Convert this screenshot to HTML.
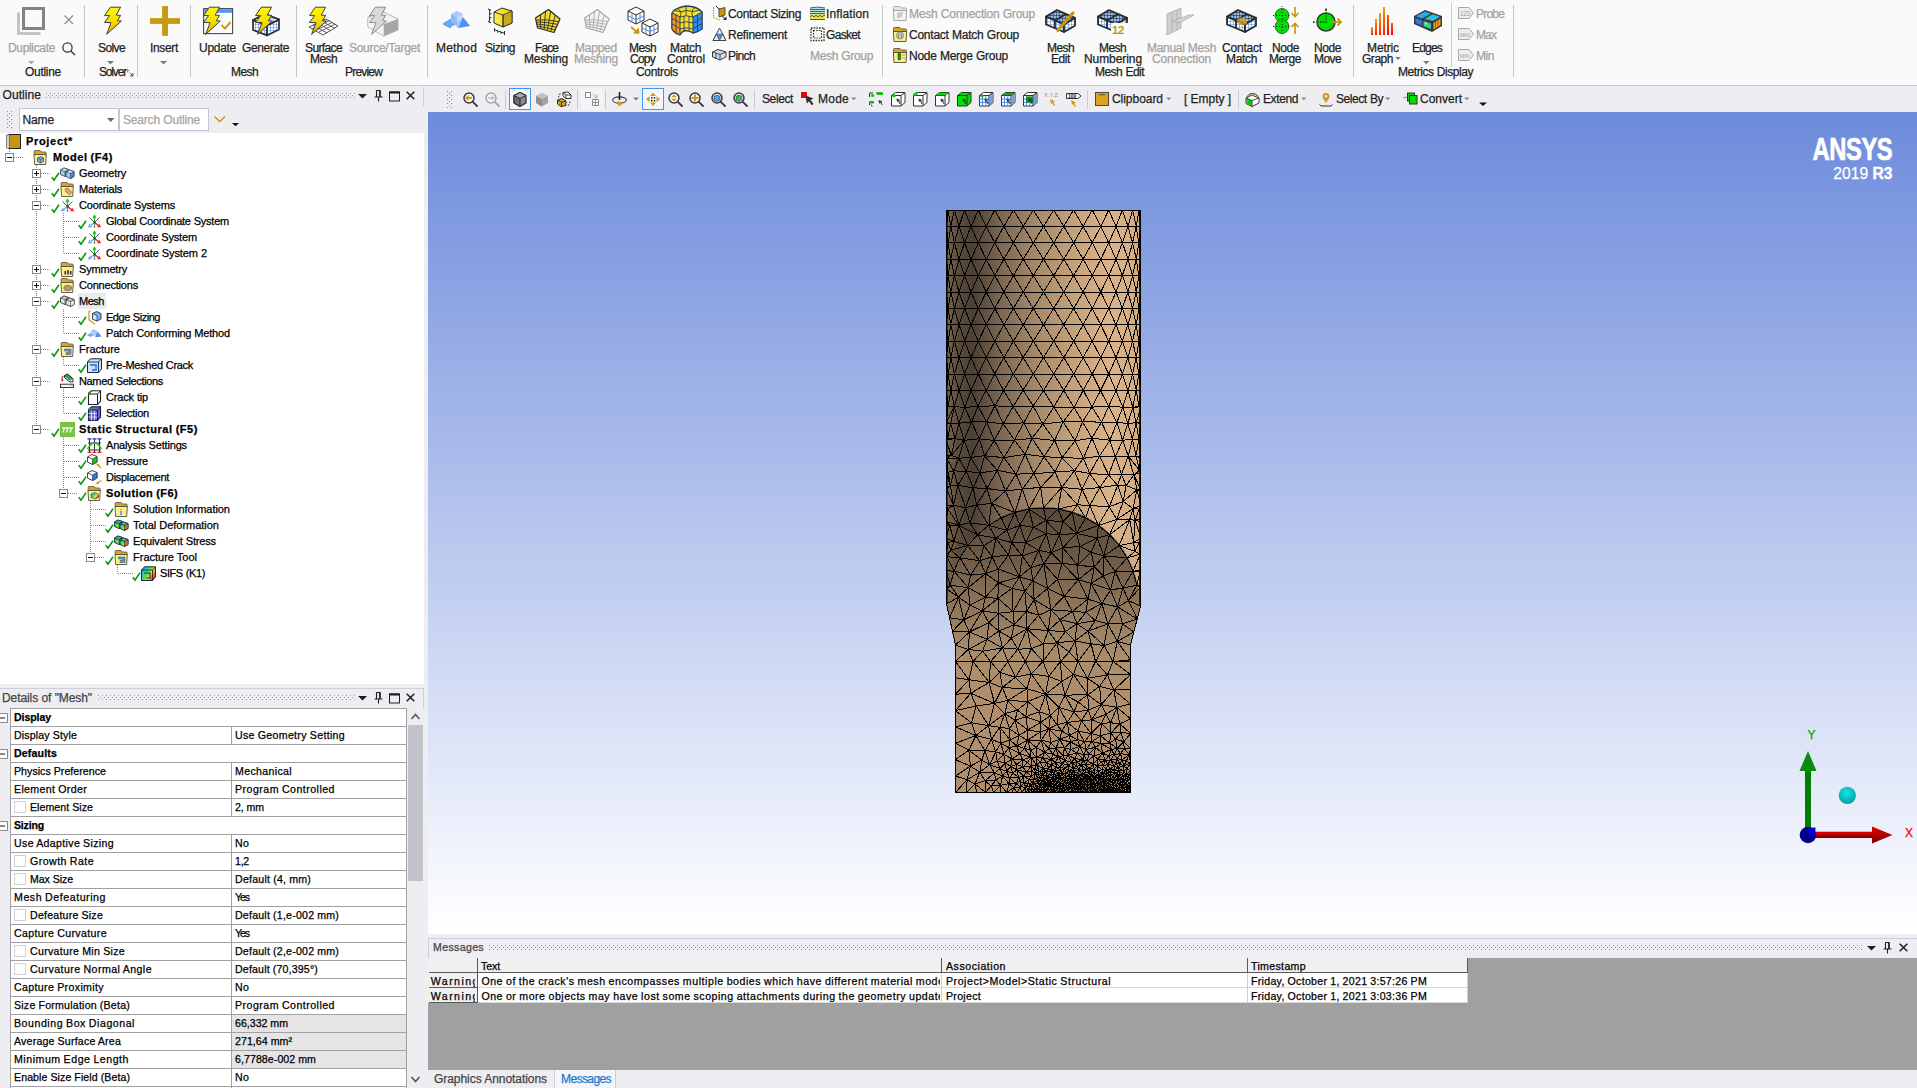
<!DOCTYPE html>
<html><head><meta charset="utf-8"><title>Mechanical</title><style>
html,body{margin:0;padding:0;}
body{width:1917px;height:1088px;overflow:hidden;position:relative;background:#eeeef2;font-family:"Liberation Sans",sans-serif;font-size:12px;color:#1e1e1e;}
.t{position:absolute;white-space:nowrap;line-height:1;-webkit-text-stroke:0.25px currentColor;}
.g{color:#a2a2a2;}
svg{overflow:visible;}
</style></head><body>
<!-- sec_ribbon -->
<div style="position:absolute;left:0;top:0;width:1917px;height:84px;background:#fafafa;"></div><div style="position:absolute;left:0;top:84px;width:1917px;height:1px;background:#ffffff;"></div>
<div style="position:absolute;left:0;top:85px;width:1917px;height:1px;background:#c8c8c9;"></div>
<div style="position:absolute;left:0;top:86px;width:1917px;height:1px;background:#eeeef2;"></div>
<svg style="position:absolute;left:0;top:0" width="1917" height="86" viewBox="0 0 1917 86"><defs>
<linearGradient id="boltg" x1="0" x2="0" y1="0" y2="1"><stop offset="0" stop-color="#fff500"/><stop offset="0.45" stop-color="#f7e300"/><stop offset="1" stop-color="#e3b000"/></linearGradient>
<linearGradient id="yelg" x1="0" x2="1" y1="0" y2="0"><stop offset="0" stop-color="#fff04a"/><stop offset="1" stop-color="#e6c81e"/></linearGradient>
<linearGradient id="barg" x1="0" x2="0" y1="0" y2="1"><stop offset="0" stop-color="#f6a000"/><stop offset="1" stop-color="#ff2000"/></linearGradient>
<linearGradient id="barr" x1="0" x2="0" y1="0" y2="1"><stop offset="0" stop-color="#ff5a00"/><stop offset="1" stop-color="#ff0000"/></linearGradient>
<pattern id="gridb" width="3" height="3" patternUnits="userSpaceOnUse"><rect width="3" height="3" fill="#fff"/><path d="M0 0H3M0 0V3" stroke="#4a90f0" stroke-width="1.2"/></pattern>
<pattern id="gridd" width="3" height="3" patternUnits="userSpaceOnUse"><rect width="3" height="3" fill="#8fbcf5"/><path d="M0 0H3M0 0V3" stroke="#3a4350" stroke-width="1.3"/></pattern>
<pattern id="gridb4" width="4" height="4" patternUnits="userSpaceOnUse"><rect width="4" height="4" fill="#fff"/><path d="M0 0.5H4M0.5 0V4" stroke="#5a9af5" stroke-width="1"/></pattern>
<pattern id="dots" width="4" height="4" patternUnits="userSpaceOnUse"><rect x="0" y="0" width="1" height="1" fill="#9a9aa2"/><rect x="2" y="2" width="1" height="1" fill="#9a9aa2"/></pattern>
</defs><rect x="84" y="5" width="1" height="72" fill="#c6c6c6"/><rect x="137" y="5" width="1" height="72" fill="#c6c6c6"/><rect x="190" y="5" width="1" height="72" fill="#c6c6c6"/><rect x="296" y="5" width="1" height="72" fill="#c6c6c6"/><rect x="427" y="5" width="1" height="72" fill="#c6c6c6"/><rect x="882" y="5" width="1" height="72" fill="#c6c6c6"/><rect x="1353" y="5" width="1" height="72" fill="#c6c6c6"/><rect x="1513" y="5" width="1" height="72" fill="#c6c6c6"/><rect x="1451" y="3" width="1" height="64" fill="#c8cce0"/><path d="M18.5 12.5V33.5H40.5" fill="none" stroke="#c4c4c4" stroke-width="3"/><rect x="23.5" y="8.5" width="20" height="20" fill="none" stroke="#838383" stroke-width="3"/><path d="M64.5 15.5L73 24M73 15.5L64.5 24" stroke="#8c8c8c" stroke-width="1.1" fill="none"/><circle cx="67.5" cy="47.5" r="4.6" fill="none" stroke="#3a3a3a" stroke-width="1.3"/><path d="M70.8 51L75 55" stroke="#3a3a3a" stroke-width="1.5"/><polygon points="28,61 34.5,61 31.25,64.2" fill="#a8a8a8"/><polygon points="110.3,7.2 120.6,7.2 116.2,15.1 120.6,15.4 117.4,20.8 121.4,21.0 106.6,34.4 111.0,22.7 104.5,22.4 109.6,15.6 104.5,15.6" fill="url(#boltg)" stroke="#3c3c4c" stroke-width="1" stroke-linejoin="miter"/><polygon points="107,61 114,61 110.5,64.4" fill="#7a7a7a"/><path d="M127.5 70.5H129.5M127.5 70.5V72.5M133 73V76H130" stroke="#8a8a8a" stroke-width="1" fill="none"/><path d="M129.5 72.5L132.5 75.5M132.8 73.2V75.8H130.2" stroke="#6a6a6a" stroke-width="1" fill="none"/><rect x="162.1" y="6.1" width="5.9" height="29.8" fill="#c99a10"/><rect x="150" y="18.1" width="30" height="5.8" fill="#c99a10"/><polygon points="160,61 167,61 163.5,64.4" fill="#7a7a7a"/><rect x="203.6" y="8.6" width="29" height="25" fill="#fdfdfd" stroke="#4a4a4a" stroke-width="1.1"/><rect x="204.2" y="9.2" width="27.8" height="3.6" fill="#4d94f7"/><path d="M221.5 25L225 28.5L230.5 22" fill="none" stroke="#d19a12" stroke-width="2"/><polygon points="209.3,7.2 219.6,7.2 215.2,15.1 219.6,15.4 216.4,20.8 220.4,21.0 205.6,34.4 210.0,22.7 203.5,22.4 208.6,15.6 203.5,15.6" fill="url(#boltg)" stroke="#3c3c4c" stroke-width="1" stroke-linejoin="miter"/><polygon points="253,20.0 267,25.4 267,35.4 253,30.0" fill="url(#gridb)" stroke="#2d2d2d" stroke-width="1.7" stroke-linejoin="round"/><polygon points="267,25.4 279,19.4 279,29.4 267,35.4" fill="url(#gridb)" stroke="#2d2d2d" stroke-width="1.7" stroke-linejoin="round"/><polygon points="253,20.0 265,14.0 279,19.4 267,25.4" fill="url(#gridb)" stroke="#2d2d2d" stroke-width="1.7" stroke-linejoin="round"/><polygon points="261.3,7.2 271.6,7.2 267.2,15.1 271.6,15.4 268.4,20.8 272.4,21.0 257.6,34.4 262.0,22.7 255.5,22.4 260.6,15.6 255.5,15.6" fill="url(#boltg)" stroke="#3c3c4c" stroke-width="1" stroke-linejoin="miter"/><g stroke="#3c3c3c" stroke-width="0.9" fill="#fff"><polygon points="309,27 326,19 338,26 323,35"/></g><path d="M312.4 28.6L329.4 20.6M315.8 30.2L332.4 22.4M319.2 31.8L335.2 24.2M313.2 25L327 33M317.5 23L330.7 30.8M321.8 21L334.5 28.4" stroke="#3c3c3c" stroke-width="0.8" fill="none"/><polygon points="315.3,7.2 325.6,7.2 321.2,15.1 325.6,15.4 322.4,20.8 326.4,21.0 311.6,34.4 316.0,22.7 309.5,22.4 314.6,15.6 309.5,15.6" fill="url(#boltg)" stroke="#3c3c4c" stroke-width="1" stroke-linejoin="miter"/><polygon points="368,17 384,12 398,19 398,30 384,36 368,27" fill="#f2f2f2" stroke="#a4a4a4" stroke-width="0.8"/><polygon points="384,24 398,19 398,30 384,36" fill="#a6a6a6"/><polygon points="368,17 384,24 384,36 368,27" fill="#f4f4f4" stroke="#b0b0b0" stroke-width="0.6"/><polygon points="375.3,7.2 385.6,7.2 381.2,15.1 385.6,15.4 382.4,20.8 386.4,21.0 371.6,34.4 376.0,22.7 369.5,22.4 374.6,15.6 369.5,15.6" fill="#d9d9d9" stroke="#8c8c8c" stroke-width="1" stroke-linejoin="miter"/><polygon points="443,23 452,18 460,22 451,27" fill="#6aa6f8"/><polygon points="443,23 451,27 451,28.5 443,24.5" fill="#4d8ef0"/><polygon points="451,14 457,11 463,14 463,22 457,25 451,22" fill="#a9ccfb"/><polygon points="451,14 457,17 457,25 451,22" fill="#8fbcf9"/><polygon points="457,17 463,14 463,22 457,25" fill="#c4dcfc"/><polygon points="463,17 470,26 458,28" fill="#4d8ff2"/><polygon points="463,17 458,28 455,25" fill="#9cc4fa"/><polygon points="494,12 502,8 512,11 512,23 503,27 494,23" fill="url(#yelg)" stroke="#2a2a2a" stroke-width="1"/><polygon points="503,15 512,11 512,23 503,27" fill="#c9a81e" stroke="#2a2a2a" stroke-width="0.8"/><path d="M494 12L503 15V27" stroke="#2a2a2a" stroke-width="0.9" fill="none"/><path d="M488 9L491 10.2M488 21.5L491 22.8M489.6 9.8V22M489.6 13.8H491.5M489.6 17.8H491.5" stroke="#2a2a2a" stroke-width="1" fill="none"/><path d="M494.5 28V31.5M504.5 31V35M494.5 29.8L504.5 33.2M497.7 30.9V32.8M500.9 32V34" stroke="#2a2a2a" stroke-width="1" fill="none"/><polygon points="535.5,18 548.5,9.5 560,19 554,32.5 537.5,28" fill="#f5de28" stroke="#2a2a2a" stroke-width="1.2" stroke-linejoin="round"/><path d="M535.9 20.0Q547.8 19.0 558.8 21.7M540.6 14.7Q540.0 21.8 540.8 28.9M536.3 22.0Q547.5 21.9 557.6 24.4M545.7 11.3Q544.5 20.6 544.1 29.8M536.7 24.0Q547.0 24.9 556.4 27.1M550.6 11.2Q548.9 21.0 547.4 30.7M537.1 26.0Q546.7 27.8 555.2 29.8M555.3 15.1Q553.2 23.4 550.7 31.6" stroke="#2a2a2a" stroke-width="0.9" fill="none"/><polygon points="584.5,18 597.5,9.5 609,19 603,32.5 586.5,28" fill="#f3f3f3" stroke="#a8a8a8" stroke-width="1.2" stroke-linejoin="round"/><path d="M584.9 20.0Q596.8 19.0 607.8 21.7M589.6 14.7Q589.0 21.8 589.8 28.9M585.3 22.0Q596.5 21.9 606.6 24.4M594.7 11.3Q593.5 20.6 593.1 29.8M585.7 24.0Q596.0 24.9 605.4 27.1M599.6 11.2Q597.9 21.0 596.4 30.7M586.1 26.0Q595.7 27.8 604.2 29.8M604.3 15.1Q602.2 23.4 599.7 31.6" stroke="#a8a8a8" stroke-width="0.9" fill="none"/><polygon points="628,11 636,7 644,11 644,20 636,24 628,20" fill="#fff" stroke="#2a2a2a" stroke-width="1"/><path d="M628 11L636 15L644 11M636 15V24" stroke="#2a2a2a" stroke-width="1" fill="none"/><path d="M632 13.5V21.5M628.5 16L635.5 19.5M640 13.5V21.5M636.5 19.5L643.5 16" stroke="#4a90f0" stroke-width="1" fill="none"/><polygon points="642,23 650,19 658,23 658,32 650,36 642,32" fill="#fff" stroke="#2a2a2a" stroke-width="1"/><path d="M642 23L650 27L658 23M650 27V36" stroke="#2a2a2a" stroke-width="1" fill="none"/><path d="M646 25.5V33.5M642.5 28L649.5 31.5M654 25.5V33.5M650.5 31.5L657.5 28" stroke="#4a90f0" stroke-width="1" fill="none"/><path d="M631 27L637 32" stroke="#c8960c" stroke-width="1.8" fill="none"/><polygon points="639.5,34 633,33.2 638.6,27.6" fill="#c8960c"/><path d="M672 13Q674 8 686 6Q698 6.5 702 12V29Q698 32 693 33Q690 31 686 30.5Q682 31 680 35Q674 33 672 29Z" fill="#f5de28" stroke="#2f3f4f" stroke-width="1.3" stroke-linejoin="round"/><path d="M672 13Q676 14.5 680 17V35Q675 33 672 29Z" fill="#f59a1c" stroke="#2f3f4f" stroke-width="1"/><path d="M693 17Q698 14.5 702 12V29Q698 32 693 33Z" fill="#2d8ef5" stroke="#2f3f4f" stroke-width="1"/><path d="M680 17Q686 14.5 693 17M680 23Q686 20.5 693 23M680 29Q686 26.5 693 29M684 16V31M689 16V31M672 18.5Q676 20 680 23M672 24Q676 25.5 680 29M693 23Q698 21 702 17.5M693 28.5Q698 26.5 702 23.5M676 14.8V33.5M697.5 14.8V31.5M677 8.5Q683 11 680 17M686 6V15.5M695 7.5Q690 11 693 17M674 10.5Q681 13 687 10.5Q693 13 700 10" stroke="#2f3f4f" stroke-width="0.9" fill="none"/><path d="M713.5 7.5V17.5L720 20" stroke="#c8960c" stroke-width="1.2" fill="none" stroke-dasharray="1.5 1"/><polygon points="719,9 725,7.5 725,15 719,17" fill="#c8960c" stroke="#333" stroke-width="0.8"/><path d="M716 6L719.5 9.5M722 16L726 19.5" stroke="#222" stroke-width="1" /><polygon points="723,20 726.5,20 726.5,16.5" fill="#222"/><polygon points="713,40.5 719.5,28 726,40.5" fill="#e4f0ff" stroke="#444" stroke-width="1"/><polygon points="716.3,34.2 722.7,34.2 719.5,40.5" fill="#4a90f0" stroke="#444" stroke-width="0.7"/><path d="M716.3 34.2L713 40.5M722.7 34.2L726 40.5" stroke="#444" stroke-width="0.7"/><polygon points="712.5,52 718,49.5 726,52 726,57 720,60 712.5,57" fill="#c9dcf7" stroke="#3a3a3a" stroke-width="1"/><path d="M712.5 52L720 54.5L726 52M720 54.5V60M716 53V58.5" stroke="#3a3a3a" stroke-width="0.9" fill="none"/><rect x="810" y="14" width="15" height="6" fill="#f0e23c"/><path d="M810 8Q817.5 6.2 825 8V14.5H810Z" fill="#bfe6e2"/><path d="M810 9.5H825M810 11.5H825M810 13.5H825" stroke="#1f6f78" stroke-width="1" shape-rendering="crispEdges"/><path d="M810 8Q817.5 6.2 825 8" stroke="#1f6f78" stroke-width="1" fill="none"/><path d="M810 17L812 15.2L814 17L816 15.2L818 17L820 15.2L822 17L824 15.2L825 16M810 19.5H825" stroke="#4a4a2a" stroke-width="0.9" fill="none"/><rect x="811" y="28" width="13" height="12.5" fill="none" stroke="#2a2a2a" stroke-width="1.3" stroke-dasharray="1.5 1.2"/><rect x="813.5" y="30.5" width="8" height="7.5" fill="none" stroke="#2a2a2a" stroke-width="1.2" stroke-dasharray="1.5 1.2"/><path d="M893.5 9V7.2Q893.5 6.5 894.5 6.5H900L901.5 8H905.5Q906.5 8 906.5 9V11H893.5Z" fill="#e6e6e6" stroke="#9a9a9a" stroke-width="0.8"/><path d="M893.3 10.5H906.7L906 20.5H894Z" fill="#f4f4f4" stroke="#9a9a9a" stroke-width="0.9"/><polygon points="897,13 903,11.5 902,17 897,18.5" fill="#c8c8c8"/><path d="M893.5 30V28.2Q893.5 27.5 894.5 27.5H900L901.5 29H905.5Q906.5 29 906.5 30V32H893.5Z" fill="#d9a520" stroke="#4a4a3a" stroke-width="0.8"/><path d="M893.3 31.5H906.7L906 41.5H894Z" fill="#fdf08c" stroke="#4a4a3a" stroke-width="0.9"/><circle cx="900" cy="35.5" r="3.6" fill="#b9c4d0" stroke="#6a7a8a" stroke-width="0.7"/><path d="M898.5 34V38M901.5 34V38" stroke="#c8960c" stroke-width="1"/><path d="M893.5 51V49.2Q893.5 48.5 894.5 48.5H900L901.5 50H905.5Q906.5 50 906.5 51V53H893.5Z" fill="#d9a520" stroke="#4a4a3a" stroke-width="0.8"/><path d="M893.3 52.5H906.7L906 62.5H894Z" fill="#fdf08c" stroke="#4a4a3a" stroke-width="0.9"/><rect x="898" y="53" width="2.6" height="7" rx="1.3" fill="#00b000" stroke="#222" stroke-width="0.6"/><path d="M902.5 55H905M902.5 58H905" stroke="#c8960c" stroke-width="1"/><polygon points="1046.0,16.6 1057.0,10.0 1075.0,17.9 1064.0,24.5" fill="url(#gridd)" stroke="#2b2b2b" stroke-width="1.8" stroke-linejoin="round"/><polygon points="1046.0,16.6 1064.0,24.5 1064.0,32.0 1046.0,24.5" fill="url(#gridb)" stroke="#2b2b2b" stroke-width="1.8" stroke-linejoin="round"/><polygon points="1064.0,24.5 1075.0,17.9 1075.0,25.8 1064.0,32.0" fill="url(#gridb)" stroke="#2b2b2b" stroke-width="1.8" stroke-linejoin="round"/><path d="M1055.0 20.6L1066.0 14.0M1055.0 20.6L1055.0 28.3" stroke="#2b2b2b" stroke-width="1.8" fill="none"/><path d="M1058 30L1073 13" stroke="#c8960c" stroke-width="3.2" stroke-linecap="round"/><polygon points="1056.5,32.5 1057.5,28.5 1060,30.8" fill="#c8960c"/><polygon points="1098.0,16.6 1109.0,10.0 1127.0,17.9 1116.0,24.5" fill="url(#gridd)" stroke="#2b2b2b" stroke-width="1.8" stroke-linejoin="round"/><polygon points="1098.0,16.6 1116.0,24.5 1116.0,32.0 1098.0,24.5" fill="url(#gridb)" stroke="#2b2b2b" stroke-width="1.8" stroke-linejoin="round"/><polygon points="1116.0,24.5 1127.0,17.9 1127.0,25.8 1116.0,32.0" fill="url(#gridb)" stroke="#2b2b2b" stroke-width="1.8" stroke-linejoin="round"/><path d="M1107.0 20.6L1118.0 14.0M1107.0 20.6L1107.0 28.3" stroke="#2b2b2b" stroke-width="1.8" fill="none"/><rect x="1111" y="23" width="17" height="12" fill="#fafafa"/><text x="1112" y="33.5" font-family="Liberation Sans, sans-serif" font-weight="bold" font-size="11.5" fill="#c8960c" letter-spacing="-0.4">12</text><polygon points="1167,14 1181,8 1181,28 1167,35" fill="#cfcfcf" stroke="#a8a8a8" stroke-width="0.8"/><polygon points="1171,22 1189,15 1194,15 1180,22.5" fill="#d9d9d9" stroke="#a8a8a8" stroke-width="0.8"/><path d="M1172 12V33M1177 10V30.5" stroke="#b0b0b0" stroke-width="0.8"/><polygon points="1227.0,16.6 1238.0,10.0 1256.0,17.9 1245.0,24.5" fill="url(#gridd)" stroke="#2b2b2b" stroke-width="1.8" stroke-linejoin="round"/><polygon points="1227.0,16.6 1245.0,24.5 1245.0,32.0 1227.0,24.5" fill="url(#gridb)" stroke="#2b2b2b" stroke-width="1.8" stroke-linejoin="round"/><polygon points="1245.0,24.5 1256.0,17.9 1256.0,25.8 1245.0,32.0" fill="url(#gridb)" stroke="#2b2b2b" stroke-width="1.8" stroke-linejoin="round"/><path d="M1236.0 20.6L1247.0 14.0M1236.0 20.6L1236.0 28.3" stroke="#2b2b2b" stroke-width="1.8" fill="none"/><polygon points="1237,19 1243,17 1247,20 1247,24 1241,25.5 1237,23" fill="#d9a520" opacity="0.75"/><circle cx="1282" cy="15.5" r="7" fill="#00e000" stroke="#444" stroke-width="0.8"/><circle cx="1282" cy="26.5" r="7" fill="#00e000" stroke="#444" stroke-width="0.8"/><path d="M1273 15.5H1291M1282 6V36M1273 26.5H1291" stroke="#1a1a1a" stroke-width="1" stroke-dasharray="1 2" fill="none"/><path d="M1295 7V16M1291.5 13L1295 16.5L1298.5 13M1295 34V24M1291.5 27L1295 23.5L1298.5 27" stroke="#c8960c" stroke-width="1.6" fill="none"/><circle cx="1326" cy="22" r="9" fill="#00e000" stroke="#3a3a3a" stroke-width="1.6"/><path d="M1326 10V22H1318" stroke="#1a1a1a" stroke-width="1.3" stroke-dasharray="1.2 1.6" fill="none"/><rect x="1313" y="21.3" width="1.6" height="1.6" fill="#111"/><rect x="1325.2" y="8.6" width="1.6" height="1.6" fill="#111"/><path d="M1331 22H1340" stroke="#c8960c" stroke-width="1.8"/><path d="M1337.5 18.5L1341 22L1337.5 25.5" stroke="#c8960c" stroke-width="1.8" fill="none"/><rect x="1371" y="27" width="2" height="8" fill="url(#barg)"/><rect x="1375" y="19" width="2" height="16" fill="url(#barg)"/><rect x="1379" y="13" width="2" height="22" fill="url(#barg)"/><rect x="1383" y="7" width="2" height="28" fill="url(#barg)"/><rect x="1387" y="15" width="2" height="20" fill="url(#barr)"/><rect x="1391" y="23" width="2" height="12" fill="url(#barr)"/><polygon points="1395,57 1401,57 1398.0,60" fill="#7a7a7a"/><polygon points="1414,16 1425,10 1442,16 1442,26 1432,32 1414,24" fill="#3a3a3a"/><polygon points="1416,16.3 1425,11.6 1431,13.7 1422,18.6" fill="#2aa8f0"/><polygon points="1432.5,14.3 1440,16.8 1433,21 1424.5,18.9" fill="#30c0d8"/><polygon points="1415.5,18 1422,20.4 1422,25.6 1415.5,23" fill="#2a7af0"/><polygon points="1423.5,21 1431,23.5 1431,29 1423.5,26.2" fill="#20d0c0"/><polygon points="1433.5,23 1440.5,18.8 1440.5,25 1433.5,29.5" fill="#f0a020"/><rect x="1425" y="22.5" width="2" height="2" fill="#f0e020"/><rect x="1428" y="24.5" width="2" height="2.5" fill="#40e040"/><path d="M1435.5 22V28M1438 20.5V26.5" stroke="#e04020" stroke-width="1"/><polygon points="1423,61 1429.5,61 1426.25,64.2" fill="#7a7a7a"/><polygon points="1458.5,7.5 1469,7.5 1473.5,13 1469,18.5 1458.5,18.5" fill="#ededed" stroke="#a8a8a8" stroke-width="1"/><text x="1460" y="16" font-family="Liberation Sans, sans-serif" font-size="6.5" fill="#a0a0a0" letter-spacing="-0.4">123</text><polygon points="1458.5,28.5 1469,28.5 1473.5,34 1469,39.5 1458.5,39.5" fill="#ededed" stroke="#a8a8a8" stroke-width="1"/><text x="1460" y="37" font-family="Liberation Sans, sans-serif" font-size="5" fill="#a0a0a0" letter-spacing="-0.3">MAX</text><polygon points="1458.5,49.5 1469,49.5 1473.5,55 1469,60.5 1458.5,60.5" fill="#ededed" stroke="#a8a8a8" stroke-width="1"/><text x="1460" y="58" font-family="Liberation Sans, sans-serif" font-size="5" fill="#a0a0a0" letter-spacing="0">MIN</text></svg>
<span class="t" style="left:8px;top:41.84px;font-size:12px;letter-spacing:-0.337px;color:#a2a2a2;">Duplicate</span>
<span class="t" style="left:25px;top:65.84px;font-size:12px;letter-spacing:-0.288px;">Outline</span>
<span class="t" style="left:98px;top:41.84px;font-size:12px;letter-spacing:-0.603px;">Solve</span>
<span class="t" style="left:99px;top:65.84px;font-size:12px;letter-spacing:-1.169px;">Solver</span>
<span class="t" style="left:150px;top:41.84px;font-size:12px;letter-spacing:-0.333px;">Insert</span>
<span class="t" style="left:199px;top:41.84px;font-size:12px;letter-spacing:-0.281px;">Update</span>
<span class="t" style="left:242px;top:41.84px;font-size:12px;letter-spacing:-0.377px;">Generate</span>
<span class="t" style="left:231px;top:65.84px;font-size:12px;letter-spacing:-0.586px;">Mesh</span>
<span class="t" style="left:305px;top:41.84px;font-size:12px;letter-spacing:-0.621px;">Surface</span>
<span class="t" style="left:310px;top:52.84px;font-size:12px;letter-spacing:-0.586px;">Mesh</span>
<span class="t" style="left:349px;top:41.84px;font-size:12px;letter-spacing:-0.284px;color:#a2a2a2;">Source/Target</span>
<span class="t" style="left:345px;top:65.84px;font-size:12px;letter-spacing:-0.812px;">Preview</span>
<span class="t" style="left:436px;top:41.84px;font-size:12px;letter-spacing:0.164px;">Method</span>
<span class="t" style="left:485px;top:41.84px;font-size:12px;letter-spacing:-0.448px;">Sizing</span>
<span class="t" style="left:535px;top:41.84px;font-size:12px;letter-spacing:-0.918px;">Face</span>
<span class="t" style="left:524px;top:52.84px;font-size:12px;letter-spacing:-0.194px;">Meshing</span>
<span class="t" style="left:575px;top:41.84px;font-size:12px;letter-spacing:-0.227px;color:#a2a2a2;">Mapped</span>
<span class="t" style="left:574px;top:52.84px;font-size:12px;letter-spacing:-0.194px;color:#a2a2a2;">Meshing</span>
<span class="t" style="left:629px;top:41.84px;font-size:12px;letter-spacing:-0.586px;">Mesh</span>
<span class="t" style="left:630px;top:52.84px;font-size:12px;letter-spacing:-0.754px;">Copy</span>
<span class="t" style="left:670px;top:41.84px;font-size:12px;letter-spacing:-0.334px;">Match</span>
<span class="t" style="left:667px;top:52.84px;font-size:12px;letter-spacing:-0.098px;">Control</span>
<span class="t" style="left:636px;top:65.84px;font-size:12px;letter-spacing:-0.336px;">Controls</span>
<span class="t" style="left:728px;top:8.09px;font-size:12px;letter-spacing:-0.335px;word-spacing:0.335px;">Contact Sizing</span>
<span class="t" style="left:728px;top:29.09px;font-size:12px;letter-spacing:-0.236px;">Refinement</span>
<span class="t" style="left:728px;top:50.09px;font-size:12px;letter-spacing:-0.603px;">Pinch</span>
<span class="t" style="left:826px;top:8.09px;font-size:12px;letter-spacing:0.109px;">Inflation</span>
<span class="t" style="left:826px;top:29.09px;font-size:12px;letter-spacing:-0.667px;">Gasket</span>
<span class="t" style="left:810px;top:50.09px;font-size:12px;letter-spacing:-0.335px;word-spacing:0.335px;color:#a2a2a2;">Mesh Group</span>
<span class="t" style="left:909px;top:8.09px;font-size:12px;letter-spacing:-0.213px;word-spacing:0.213px;color:#a2a2a2;">Mesh Connection Group</span>
<span class="t" style="left:909px;top:29.09px;font-size:12px;letter-spacing:-0.236px;word-spacing:0.236px;">Contact Match Group</span>
<span class="t" style="left:909px;top:50.09px;font-size:12px;letter-spacing:-0.265px;word-spacing:0.265px;">Node Merge Group</span>
<span class="t" style="left:1047px;top:41.84px;font-size:12px;letter-spacing:-0.586px;">Mesh</span>
<span class="t" style="left:1051px;top:52.84px;font-size:12px;letter-spacing:-0.418px;">Edit</span>
<span class="t" style="left:1099px;top:41.84px;font-size:12px;letter-spacing:-0.586px;">Mesh</span>
<span class="t" style="left:1084px;top:52.84px;font-size:12px;letter-spacing:-0.078px;">Numbering</span>
<span class="t" style="left:1095px;top:65.84px;font-size:12px;letter-spacing:-0.543px;word-spacing:0.543px;">Mesh Edit</span>
<span class="t" style="left:1147px;top:41.84px;font-size:12px;letter-spacing:-0.303px;word-spacing:0.303px;color:#a2a2a2;">Manual Mesh</span>
<span class="t" style="left:1152px;top:52.84px;font-size:12px;letter-spacing:-0.170px;color:#a2a2a2;">Connection</span>
<span class="t" style="left:1222px;top:41.84px;font-size:12px;letter-spacing:-0.192px;">Contact</span>
<span class="t" style="left:1226px;top:52.84px;font-size:12px;letter-spacing:-0.334px;">Match</span>
<span class="t" style="left:1272px;top:41.84px;font-size:12px;letter-spacing:-0.422px;">Node</span>
<span class="t" style="left:1269px;top:52.84px;font-size:12px;letter-spacing:-0.403px;">Merge</span>
<span class="t" style="left:1314px;top:41.84px;font-size:12px;letter-spacing:-0.422px;">Node</span>
<span class="t" style="left:1314px;top:52.84px;font-size:12px;letter-spacing:-0.586px;">Move</span>
<span class="t" style="left:1367px;top:41.84px;font-size:12px;letter-spacing:-0.112px;">Metric</span>
<span class="t" style="left:1362px;top:52.84px;font-size:12px;letter-spacing:-0.469px;">Graph</span>
<span class="t" style="left:1412px;top:41.84px;font-size:12px;letter-spacing:-0.803px;">Edges</span>
<span class="t" style="left:1476px;top:8.09px;font-size:12px;letter-spacing:-0.803px;color:#a2a2a2;">Probe</span>
<span class="t" style="left:1476px;top:29.09px;font-size:12px;letter-spacing:-0.891px;color:#a2a2a2;">Max</span>
<span class="t" style="left:1476px;top:50.09px;font-size:12px;letter-spacing:-0.448px;color:#a2a2a2;">Min</span>
<span class="t" style="left:1398px;top:65.84px;font-size:12px;letter-spacing:-0.454px;word-spacing:0.454px;">Metrics Display</span>
<!-- sec_toolbar -->
<svg style="position:absolute;left:0;top:0" width="1917" height="112" viewBox="0 0 1917 112"><defs>
<linearGradient id="t_boltg" x1="0" x2="0" y1="0" y2="1"><stop offset="0" stop-color="#fff500"/><stop offset="0.45" stop-color="#f7e300"/><stop offset="1" stop-color="#e3b000"/></linearGradient>
<linearGradient id="t_yelg" x1="0" x2="1" y1="0" y2="0"><stop offset="0" stop-color="#fff04a"/><stop offset="1" stop-color="#e6c81e"/></linearGradient>
<linearGradient id="t_barg" x1="0" x2="0" y1="0" y2="1"><stop offset="0" stop-color="#f6a000"/><stop offset="1" stop-color="#ff2000"/></linearGradient>
<linearGradient id="t_barr" x1="0" x2="0" y1="0" y2="1"><stop offset="0" stop-color="#ff5a00"/><stop offset="1" stop-color="#ff0000"/></linearGradient>
<pattern id="t_gridb" width="3" height="3" patternUnits="userSpaceOnUse"><rect width="3" height="3" fill="#fff"/><path d="M0 0H3M0 0V3" stroke="#4a90f0" stroke-width="1.2"/></pattern>
<pattern id="t_gridd" width="3" height="3" patternUnits="userSpaceOnUse"><rect width="3" height="3" fill="#8fbcf5"/><path d="M0 0H3M0 0V3" stroke="#3a4350" stroke-width="1.3"/></pattern>
<pattern id="t_gridb4" width="4" height="4" patternUnits="userSpaceOnUse"><rect width="4" height="4" fill="#fff"/><path d="M0 0.5H4M0.5 0V4" stroke="#5a9af5" stroke-width="1"/></pattern>
<pattern id="t_dots" width="4" height="4" patternUnits="userSpaceOnUse"><rect x="0" y="0" width="1" height="1" fill="#9a9aa2"/><rect x="2" y="2" width="1" height="1" fill="#9a9aa2"/></pattern>
</defs><rect x="509.5" y="88.5" width="21" height="21" fill="#f3f6fb" stroke="#3d97f5" stroke-width="1"/><rect x="642.5" y="88.5" width="21" height="21" fill="#f3f6fb" stroke="#3d97f5" stroke-width="1"/><rect x="581" y="88" width="22" height="22" fill="#f4f4f6"/><rect x="505" y="90" width="1" height="19" fill="#c9cad6"/><rect x="577" y="90" width="1" height="19" fill="#c9cad6"/><rect x="605" y="90" width="1" height="19" fill="#c9cad6"/><rect x="754" y="90" width="1" height="19" fill="#c9cad6"/><rect x="1087" y="90" width="1" height="19" fill="#c9cad6"/><rect x="1238" y="90" width="1" height="19" fill="#c9cad6"/><rect x="447" y="91" width="1" height="1" fill="#8a8a92"/><rect x="451" y="91" width="1" height="1" fill="#8a8a92"/><rect x="449" y="93" width="1" height="1" fill="#8a8a92"/><rect x="447" y="95" width="1" height="1" fill="#8a8a92"/><rect x="451" y="95" width="1" height="1" fill="#8a8a92"/><rect x="449" y="97" width="1" height="1" fill="#8a8a92"/><rect x="447" y="99" width="1" height="1" fill="#8a8a92"/><rect x="451" y="99" width="1" height="1" fill="#8a8a92"/><rect x="449" y="101" width="1" height="1" fill="#8a8a92"/><rect x="447" y="103" width="1" height="1" fill="#8a8a92"/><rect x="451" y="103" width="1" height="1" fill="#8a8a92"/><rect x="449" y="105" width="1" height="1" fill="#8a8a92"/><rect x="447" y="107" width="1" height="1" fill="#8a8a92"/><rect x="451" y="107" width="1" height="1" fill="#8a8a92"/><circle cx="469" cy="98" r="5" fill="#f6f6f8" stroke="#3a3a3a" stroke-width="1.5"/><path d="M472.8 101.8L477 106" stroke="#3a3a3a" stroke-width="1.8" stroke-linecap="round"/><path d="M466 98H472" stroke="#d19a12" stroke-width="1.8"/><polygon points="465,98 468.5,94.8 468.5,101.2" fill="#d19a12"/><circle cx="491" cy="98" r="5" fill="#f6f6f8" stroke="#a4a4a4" stroke-width="1.5"/><path d="M494.8 101.8L499 106" stroke="#a4a4a4" stroke-width="1.8" stroke-linecap="round"/><path d="M488 98H493" stroke="#c4c4c4" stroke-width="1.8"/><polygon points="495,98 491.5,94.8 491.5,101.2" fill="#c4c4c4"/><polygon points="514,95.5 520,92.5 526,95.5 526,103 520,106.5 514,103" fill="#8c8c8c" stroke="#2a2a2a" stroke-width="1.2" stroke-linejoin="round"/><polygon points="514,95.5 520,98.5 520,106.5 514,103" fill="#6e6e6e" stroke="#2a2a2a" stroke-width="1" stroke-linejoin="round"/><polygon points="514,95.5 520,92.5 526,95.5 520,98.5" fill="#aaa" stroke="#2a2a2a" stroke-width="1" stroke-linejoin="round"/><polygon points="536,96 542,93 548,96 548,103 542,106.5 536,103" fill="#a2a2a2"/><polygon points="536,96 542,99 542,106.5 536,103" fill="#8e8e8e"/><polygon points="536,96 542,93 548,96 542,99" fill="#c2c2c2"/><polygon points="563,92.5 568,92 571,95 571,98.5 566,98.5 563,96" fill="#fff" stroke="#2a2a2a" stroke-width="1"/><path d="M563 92.5L566 95H571M566 95V98.5" stroke="#2a2a2a" stroke-width="0.9" fill="none"/><polygon points="557.5,100 562,98.5 566,101 566,105.5 561,106.5 557.5,104" fill="#d9a520" stroke="#2a2a2a" stroke-width="1"/><path d="M557.5 100L561.5 102.3L566 101M561.5 102.3V106.5" stroke="#2a2a2a" stroke-width="0.9" fill="none"/><path d="M558.5 97.5Q559 94 561.5 93M570 101.5Q569.5 105 567.5 106" stroke="#444" stroke-width="1.1" fill="none" stroke-dasharray="1.6 1.2"/><rect x="585.5" y="92.5" width="5" height="5" fill="#fff" stroke="#8a8a8a" stroke-width="1"/><path d="M593 93.5L597 97.5M597 94.5V97.8H594" stroke="#b4b4b4" stroke-width="1" fill="none"/><path d="M592.5 99.5H598.5V105.5H592.5ZM595.5 99.5V105.5M592.5 102.5H598.5" stroke="#8a8a8a" stroke-width="1" fill="#fff"/><ellipse cx="619.5" cy="100" rx="6.8" ry="3.2" fill="none" stroke="#3a3a3a" stroke-width="1.2"/><path d="M619.5 92V100" stroke="#222" stroke-width="1.6"/><polygon points="618,101 623.5,103.5 618,106.5" fill="#d19a12"/><polygon points="633,97.5 639,97.5 636.0,100.5" fill="#7a7a7a"/><polygon points="653,92.5 656,96 650,96" fill="#d19a12"/><polygon points="653,106 656,102.5 650,102.5" fill="#d19a12"/><polygon points="646,99.2 649.5,96.2 649.5,102.2" fill="#d19a12"/><polygon points="660,99.2 656.5,96.2 656.5,102.2" fill="#d19a12"/><rect x="651" y="97.2" width="1.4" height="1.4" fill="#111"/><rect x="653.8" y="97.2" width="1.4" height="1.4" fill="#111"/><rect x="651" y="100" width="1.4" height="1.4" fill="#111"/><rect x="653.8" y="100" width="1.4" height="1.4" fill="#111"/><circle cx="674" cy="98" r="5" fill="#f6f6f8" stroke="#3a3a3a" stroke-width="1.5"/><path d="M677.8 101.8L682 106" stroke="#3a3a3a" stroke-width="1.8" stroke-linecap="round"/><polygon points="674,94.5 676.8,97.3 671.2,97.3" fill="#d19a12"/><polygon points="674,101.5 676.8,98.7 671.2,98.7" fill="#d19a12"/><circle cx="695" cy="98" r="5" fill="#f6f6f8" stroke="#3a3a3a" stroke-width="1.5"/><path d="M698.8 101.8L703 106" stroke="#3a3a3a" stroke-width="1.8" stroke-linecap="round"/><path d="M691.5 98H698.5M695 94.5V101.5" stroke="#d19a12" stroke-width="2.2"/><circle cx="717" cy="98" r="5" fill="#f6f6f8" stroke="#3a3a3a" stroke-width="1.5"/><path d="M720.8 101.8L725 106" stroke="#3a3a3a" stroke-width="1.8" stroke-linecap="round"/><polygon points="714,96.5 717,95 720,96.5 720,100 717,101.6 714,100" fill="#5a9af5" stroke="#345" stroke-width="0.7"/><circle cx="739" cy="98" r="5" fill="#f6f6f8" stroke="#3a3a3a" stroke-width="1.5"/><path d="M742.8 101.8L747 106" stroke="#3a3a3a" stroke-width="1.8" stroke-linecap="round"/><polygon points="736,96.5 739,95 742,96.5 742,100 739,101.6 736,100" fill="#30c030" stroke="#345" stroke-width="0.7"/><polygon points="739,98 742,96.5 742,100 739,101.6" fill="#4a90f0"/><rect x="801" y="92" width="6" height="6" fill="#f00000"/><polygon points="805.5,95.5 813.5,98.5 810.5,100 813.5,104 811.8,105.2 809,101.2 806.8,103.5" fill="#2e2e2e"/><polygon points="851,97.5 856.5,97.5 853.75,100.3" fill="#8a8a8a"/><path d="M869.5 97V93H873M876 93H882M869.5 105V101.5H874" stroke="#333" stroke-width="1" fill="none"/><rect x="877" y="92.5" width="6" height="2.5" fill="#00c800"/><circle cx="872.5" cy="95.5" r="1.6" fill="#00c800"/><rect x="869" y="101" width="5" height="2.5" fill="#00c800"/><polygon points="878.5,100 882.5,101.5 881.3,102.2 882.5,104.5 881.6,105 880.5,102.8 879.2,103.8" fill="#333"/><polygon points="870.5,103.5 873,106.5 871.5,106.5" fill="#333"/><polygon points="891.5,95.5 895.5,92.5 905,92.5 905,102.5 901,106 891.5,106" fill="#fff" stroke="#333" stroke-width="1"/><path d="M891.5 95.5H901L905 92.5M901 95.5V106" stroke="#333" stroke-width="1" fill="none"/><circle cx="894" cy="95.8" r="1.8" fill="#00d000"/><polygon points="896.5,98.5 900.5,100 899,100.7 900.5,103.5 899.5,104 898.2,101.2 897,102" fill="#333"/><polygon points="913.5,95.5 917.5,92.5 927,92.5 927,102.5 923,106 913.5,106" fill="#fff" stroke="#333" stroke-width="1"/><path d="M913.5 95.5H923L927 92.5M923 95.5V106" stroke="#333" stroke-width="1" fill="none"/><path d="M913.5 95.5L917.5 92.5" stroke="#00d000" stroke-width="2.2"/><polygon points="918.5,98.5 922.5,100 921,100.7 922.5,103.5 921.5,104 920.2,101.2 919,102" fill="#333"/><polygon points="935.5,95.5 939.5,92.5 949,92.5 949,102.5 945,106 935.5,106" fill="#fff" stroke="#333" stroke-width="1"/><path d="M935.5 95.5H945L949 92.5M945 95.5V106" stroke="#333" stroke-width="1" fill="none"/><polygon points="936,95.3 939.7,92.8 948.4,92.8 944.8,95.3" fill="#00e000"/><polygon points="940.5,98.5 944.5,100 943,100.7 944.5,103.5 943.5,104 942.2,101.2 941,102" fill="#333"/><polygon points="957.5,95.5 961.5,92.5 971,92.5 971,102.5 967,106 957.5,106" fill="#00e000" stroke="#333" stroke-width="1"/><path d="M957.5 95.5H967L971 92.5M967 95.5V106" stroke="#333" stroke-width="1" fill="none"/><polygon points="962.5,98.5 966.5,100 965,100.7 966.5,103.5 965.5,104 964.2,101.2 963,102" fill="#333"/><polygon points="979.5,95.5 983.5,92.5 993,92.5 993,102.5 989,106 979.5,106" fill="#fff" stroke="#333" stroke-width="1"/><path d="M982.5 95.5V106M985.8 95.5V106M979.5 99H989M979.5 102.5H989M990.3 94.5V104.8M991.7 93.5V103.5" stroke="#4a90f0" stroke-width="1" fill="none"/><path d="M979.5 95.5H989L993 92.5M989 95.5V106" stroke="#333" stroke-width="1" fill="none"/><circle cx="982" cy="95.8" r="1.6" fill="#00c000"/><polygon points="984.5,98.5 988.5,100 987,100.7 988.5,103.5 987.5,104 986.2,101.2 985,102" fill="#333"/><polygon points="1001.5,95.5 1005.5,92.5 1015,92.5 1015,102.5 1011,106 1001.5,106" fill="#fff" stroke="#333" stroke-width="1"/><path d="M1004.5 95.5V106M1007.8 95.5V106M1001.5 99H1011M1001.5 102.5H1011M1012.3 94.5V104.8M1013.7 93.5V103.5" stroke="#4a90f0" stroke-width="1" fill="none"/><path d="M1001.5 95.5H1011L1015 92.5M1011 95.5V106" stroke="#333" stroke-width="1" fill="none"/><polygon points="1002,95.3 1005.7,92.8 1014.4,92.8 1010.8,95.3" fill="#2a9a2a"/><polygon points="1006.5,98.5 1010.5,100 1009,100.7 1010.5,103.5 1009.5,104 1008.2,101.2 1007,102" fill="#333"/><polygon points="1023.5,95.5 1027.5,92.5 1037,92.5 1037,102.5 1033,106 1023.5,106" fill="#fff" stroke="#333" stroke-width="1"/><path d="M1026.5 95.5V106M1029.8 95.5V106M1023.5 99H1033M1023.5 102.5H1033M1034.3 94.5V104.8M1035.7 93.5V103.5" stroke="#4a90f0" stroke-width="1" fill="none"/><path d="M1023.5 95.5H1033L1037 92.5M1033 95.5V106" stroke="#333" stroke-width="1" fill="none"/><rect x="1026" y="96.5" width="7.5" height="6" fill="#1a8a1a"/><polygon points="1028.5,98.5 1032.5,100 1031,100.7 1032.5,103.5 1031.5,104 1030.2,101.2 1029,102" fill="#333"/><text x="1044" y="97" font-family="Liberation Sans, sans-serif" font-size="5.5" fill="#8a8a8a" letter-spacing="0.2">X.Y.Z</text><polygon points="1050,99 1055,101.5 1053.3,102.2 1055,105.5 1053.8,106 1052.3,102.9 1051,104" fill="#d19a12"/><path d="M1066.5 93.5H1078L1081 96L1078 98.5H1066.5Z" fill="#fff" stroke="#333" stroke-width="1"/><text x="1068" y="97.6" font-family="Liberation Sans, sans-serif" font-size="5" fill="#222" font-weight="bold">100</text><polygon points="1071,100 1076,102.5 1074.3,103.2 1076,106.5 1074.8,107 1073.3,103.9 1072,105" fill="#d19a12"/><rect x="1095.5" y="92.5" width="13" height="13" fill="#d9a520" stroke="#4a4a3a" stroke-width="1"/><path d="M1099 94.8H1105" stroke="#4a4a3a" stroke-width="1"/><polygon points="1166,97.5 1171.5,97.5 1168.75,100.3" fill="#8a8a8a"/><polygon points="1246,98 1252,95 1259,98 1259,103 1252,106.5 1246,103.5" fill="#fff" stroke="#333" stroke-width="1"/><polygon points="1246.5,98.5 1252,100.8 1252,106 1246.5,103.3" fill="#00d000"/><path d="M1246 98L1252 100.5L1259 98M1252 100.5V106.5" stroke="#333" stroke-width="0.9" fill="none"/><path d="M1246.5 97Q1252 90 1258.5 96.5" stroke="#333" stroke-width="1" fill="none"/><path d="M1252.5 93.3V96.3M1251 94.8H1254" stroke="#d19a12" stroke-width="1"/><polygon points="1301,97.5 1306.5,97.5 1303.75,100.3" fill="#8a8a8a"/><path d="M1326 93Q1322.6 93 1322.6 96.3Q1322.6 98.5 1326 103Q1329.4 98.5 1329.4 96.3Q1329.4 93 1326 93Z" fill="#d19a12"/><circle cx="1326" cy="96.3" r="1.3" fill="#eeeef2"/><path d="M1319.5 104.5L1321 106H1331L1332.5 104.5" stroke="#333" stroke-width="1" fill="none"/><polygon points="1385,97.5 1390.5,97.5 1387.75,100.3" fill="#8a8a8a"/><path d="M1403 97.5H1407" stroke="#d19a12" stroke-width="1.2"/><rect x="1407.5" y="93" width="7" height="8" fill="#00d000" stroke="#333" stroke-width="1"/><rect x="1409.5" y="95.5" width="7.5" height="8.5" fill="#00e000" stroke="#333" stroke-width="1"/><polygon points="1464,97.5 1469.5,97.5 1466.75,100.3" fill="#8a8a8a"/><polygon points="1479,102.5 1487,102.5 1483.0,106.1" fill="#111"/></svg>
<span class="t" style="left:762px;top:92.84px;font-size:12px;letter-spacing:-0.391px;">Select</span>
<span class="t" style="left:818px;top:92.84px;font-size:12px;letter-spacing:0.246px;">Mode</span>
<span class="t" style="left:1112px;top:92.84px;font-size:12px;letter-spacing:-0.042px;">Clipboard</span>
<span class="t" style="left:1184px;top:92.84px;font-size:12px;letter-spacing:-0.045px;word-spacing:0.045px;">[ Empty ]</span>
<span class="t" style="left:1263px;top:92.84px;font-size:12px;letter-spacing:-0.391px;">Extend</span>
<span class="t" style="left:1336px;top:92.84px;font-size:12px;letter-spacing:-0.459px;word-spacing:0.459px;">Select By</span>
<span class="t" style="left:1420px;top:92.84px;font-size:12px;letter-spacing:-0.002px;">Convert</span>
<!-- sec_outline -->
<div style="position:absolute;left:0;top:133px;width:424px;height:551px;background:#fff;"></div>
<div style="position:absolute;left:423px;top:87px;width:1px;height:19px;background:#ccceDB;"></div>
<div style="position:absolute;left:19px;top:108px;width:98px;height:21px;background:#fff;border:1px solid #c2c6d8;"></div>
<div style="position:absolute;left:119px;top:108px;width:88px;height:21px;background:#fff;border:1px solid #c2c6d8;"></div>
<svg style="position:absolute;left:0;top:0" width="428" height="688" viewBox="0 0 428 688"><defs><pattern id="hd" width="4" height="4" patternUnits="userSpaceOnUse" x="2" y="1"><rect x="0" y="0" width="1" height="1" fill="#999aa6"/><rect x="2" y="2" width="1" height="1" fill="#999aa6"/></pattern><linearGradient id="rain" x1="0" x2="1" y1="0" y2="0.6"><stop offset="0" stop-color="#2060f0"/><stop offset="0.3" stop-color="#20d0c0"/><stop offset="0.5" stop-color="#40e040"/><stop offset="0.7" stop-color="#f0e020"/><stop offset="1" stop-color="#f03020"/></linearGradient></defs><rect x="45" y="93" width="311" height="5" fill="url(#hd)"/><polygon points="358,94 367,94 362.5,98.6" fill="#1e1e1e"/><path d="M376.5 90.5H380.5M376.5 90.5V97M379.8 90.5V97M374.5 97H382.5M378.5 97V101.5" stroke="#1e1e1e" stroke-width="1.1" fill="none"/><rect x="379.3" y="90.5" width="1.4" height="6.5" fill="#1e1e1e"/><rect x="389.5" y="92" width="10" height="9" fill="none" stroke="#1e1e1e" stroke-width="1"/><rect x="389" y="91.5" width="11" height="2" fill="#1e1e1e"/><path d="M406.7 91.7L414.3 99.3M414.3 91.7L406.7 99.3" stroke="#1e1e1e" stroke-width="1.5" fill="none"/><rect x="7" y="111" width="1" height="1" fill="#8a8a92"/><rect x="11" y="111" width="1" height="1" fill="#8a8a92"/><rect x="9" y="113" width="1" height="1" fill="#8a8a92"/><rect x="7" y="115" width="1" height="1" fill="#8a8a92"/><rect x="11" y="115" width="1" height="1" fill="#8a8a92"/><rect x="9" y="117" width="1" height="1" fill="#8a8a92"/><rect x="7" y="119" width="1" height="1" fill="#8a8a92"/><rect x="11" y="119" width="1" height="1" fill="#8a8a92"/><rect x="9" y="121" width="1" height="1" fill="#8a8a92"/><rect x="7" y="123" width="1" height="1" fill="#8a8a92"/><rect x="11" y="123" width="1" height="1" fill="#8a8a92"/><rect x="9" y="125" width="1" height="1" fill="#8a8a92"/><rect x="7" y="127" width="1" height="1" fill="#8a8a92"/><rect x="11" y="127" width="1" height="1" fill="#8a8a92"/><polygon points="107,118 114.5,118 110.75,122" fill="#666"/><path d="M214.5 116.5L219.8 121.5L225 116.5" stroke="#c8960c" stroke-width="1.5" fill="none"/><polygon points="232,123 239,123 235.5,126.2" fill="#111"/><path d="M9.5 149V152.5" stroke="#8a8a8a" stroke-width="1" stroke-dasharray="1 1"/><path d="M36.5 165V424.5" stroke="#8a8a8a" stroke-width="1" stroke-dasharray="1 1"/><path d="M63.5 213V253.5" stroke="#8a8a8a" stroke-width="1" stroke-dasharray="1 1"/><path d="M63.5 309V333.5" stroke="#8a8a8a" stroke-width="1" stroke-dasharray="1 1"/><path d="M63.5 357V365.5" stroke="#8a8a8a" stroke-width="1" stroke-dasharray="1 1"/><path d="M63.5 389V413.5" stroke="#8a8a8a" stroke-width="1" stroke-dasharray="1 1"/><path d="M63.5 437V488.5" stroke="#8a8a8a" stroke-width="1" stroke-dasharray="1 1"/><path d="M90.5 501V552.5" stroke="#8a8a8a" stroke-width="1" stroke-dasharray="1 1"/><path d="M117.5 565V573.5" stroke="#8a8a8a" stroke-width="1" stroke-dasharray="1 1"/><rect x="9" y="134.5" width="11.5" height="14" fill="#c8960c" stroke="#222" stroke-width="1"/><rect x="6.5" y="135" width="3" height="13" fill="#f0f0f0" stroke="#555" stroke-width="0.7"/><path d="M7 137H9M7 139H9M7 141H9M7 143H9M7 145H9" stroke="#888" stroke-width="0.6"/><path d="M14.0 157.5H24.0" stroke="#8a8a8a" stroke-width="1" stroke-dasharray="1 1"/><rect x="5.5" y="153.5" width="8" height="8" fill="#fff" stroke="#8a8a8a" stroke-width="1"/><path d="M7.0 157.5H12.0" stroke="#111" stroke-width="1"/><g transform="translate(2.70,0) scale(0.92,1)"><path d="M34.2 153V151.2Q34.2 150.5 35.2 150.5H40.7L42.2 152H46.2Q47.2 152 47.2 153V155H34.2Z" fill="#d9a520" stroke="#4a4a3a" stroke-width="0.8"/><path d="M34.0 154.5H47.400000000000006L46.7 164.5H34.7Z" fill="#fdf08c" stroke="#4a4a3a" stroke-width="0.9"/></g><polygon points="37.5,158 40.5,156.5 43.5,158 43.5,161.5 40.5,163 37.5,161.5" fill="#7ab0f5" stroke="#345" stroke-width="0.7"/><path d="M37.5 158L40.5 159.5L43.5 158M40.5 159.5V163" stroke="#345" stroke-width="0.6" fill="none"/><path d="M41.0 173.5H51.0" stroke="#8a8a8a" stroke-width="1" stroke-dasharray="1 1"/><rect x="32.5" y="169.5" width="8" height="8" fill="#fff" stroke="#8a8a8a" stroke-width="1"/><path d="M34.0 173.5H39.0" stroke="#111" stroke-width="1"/><path d="M36.5 171.0V176.0" stroke="#111" stroke-width="1"/><path d="M51.8 177.2L54 180.2L59 172.8" stroke="#0a960a" stroke-width="1.6" fill="none" stroke-linejoin="miter"/><polygon points="60.5,170.0 64,168.0 68.5,169.5 68.5,174.5 65,176.5 60.5,174.5" fill="#a9cbf7" stroke="#3a4a5a" stroke-width="0.9" stroke-linejoin="round"/><polygon points="65,171.5 68.5,169.5 68.5,174.5 65,176.5" fill="#3d8cf0" stroke="#3a4a5a" stroke-width="0.7"/><polygon points="60.5,170.0 64,168.0 68.5,169.5 65,171.5" fill="#cfe2fb" stroke="#3a4a5a" stroke-width="0.7"/><polygon points="66.0,172.0 69.5,170.0 74.0,171.5 74.0,176.5 70.5,178.5 66.0,176.5" fill="#a9cbf7" stroke="#3a4a5a" stroke-width="0.9" stroke-linejoin="round"/><polygon points="70.5,173.5 74.0,171.5 74.0,176.5 70.5,178.5" fill="#3d8cf0" stroke="#3a4a5a" stroke-width="0.7"/><polygon points="66.0,172.0 69.5,170.0 74.0,171.5 70.5,173.5" fill="#cfe2fb" stroke="#3a4a5a" stroke-width="0.7"/><path d="M41.0 189.5H51.0" stroke="#8a8a8a" stroke-width="1" stroke-dasharray="1 1"/><rect x="32.5" y="185.5" width="8" height="8" fill="#fff" stroke="#8a8a8a" stroke-width="1"/><path d="M34.0 189.5H39.0" stroke="#111" stroke-width="1"/><path d="M36.5 187.0V192.0" stroke="#111" stroke-width="1"/><path d="M51.8 193.2L54 196.2L59 188.8" stroke="#0a960a" stroke-width="1.6" fill="none" stroke-linejoin="miter"/><g transform="translate(4.86,0) scale(0.92,1)"><path d="M61.2 185V183.2Q61.2 182.5 62.2 182.5H67.7L69.2 184H73.2Q74.2 184 74.2 185V187H61.2Z" fill="#d9a520" stroke="#4a4a3a" stroke-width="0.8"/><path d="M61.0 186.5H74.4L73.7 196.5H61.7Z" fill="#fdf08c" stroke="#4a4a3a" stroke-width="0.9"/></g><polygon points="65,189 68,188 72,192.5 69.5,195 65.5,191.5" fill="#f0a070" stroke="#7a5a3a" stroke-width="0.6"/><path d="M41.0 205.5H51.0" stroke="#8a8a8a" stroke-width="1" stroke-dasharray="1 1"/><rect x="32.5" y="201.5" width="8" height="8" fill="#fff" stroke="#8a8a8a" stroke-width="1"/><path d="M34.0 205.5H39.0" stroke="#111" stroke-width="1"/><path d="M51.8 209.2L54 212.2L59 204.8" stroke="#0a960a" stroke-width="1.6" fill="none" stroke-linejoin="miter"/><path d="M67.5 206.5V201.5" stroke="#20c020" stroke-width="1.3"/><polygon points="67.5,198.3 69.7,202 65.3,202" fill="#10d010"/><path d="M67.5 206.5L71.5 209.5" stroke="#e02020" stroke-width="1.3"/><polygon points="74.2,211.6 70,211 72.4,207.8" fill="#f02020"/><path d="M67.5 206.5L63.5 209.5" stroke="#6aa6f8" stroke-width="1.3"/><polygon points="60.8,211.6 65,211 62.6,207.8" fill="#6aa6f8"/><path d="M67.5 206.5L62.5 201.5M67.5 206.5L72.5 201.5" stroke="#555" stroke-width="1"/><path d="M67.5 206.5V212" stroke="#888" stroke-width="1.4"/><rect x="66.7" y="205.7" width="1.7" height="1.7" fill="#222"/><path d="M64.0 221.5H79.0" stroke="#8a8a8a" stroke-width="1" stroke-dasharray="1 1"/><path d="M78.8 225.2L81 228.2L86 220.8" stroke="#0a960a" stroke-width="1.6" fill="none" stroke-linejoin="miter"/><path d="M94.5 222.5V217.5" stroke="#20c020" stroke-width="1.3"/><polygon points="94.5,214.3 96.7,218 92.3,218" fill="#10d010"/><path d="M94.5 222.5L98.5 225.5" stroke="#e02020" stroke-width="1.3"/><polygon points="101.2,227.6 97,227 99.4,223.8" fill="#f02020"/><path d="M94.5 222.5L90.5 225.5" stroke="#6aa6f8" stroke-width="1.3"/><polygon points="87.8,227.6 92,227 89.6,223.8" fill="#6aa6f8"/><path d="M94.5 222.5L89.5 217.5M94.5 222.5L99.5 217.5" stroke="#555" stroke-width="1"/><path d="M94.5 222.5V228" stroke="#888" stroke-width="1.4"/><rect x="93.7" y="221.7" width="1.7" height="1.7" fill="#222"/><path d="M64.0 237.5H79.0" stroke="#8a8a8a" stroke-width="1" stroke-dasharray="1 1"/><path d="M78.8 241.2L81 244.2L86 236.8" stroke="#0a960a" stroke-width="1.6" fill="none" stroke-linejoin="miter"/><path d="M94.5 238.5V233.5" stroke="#20c020" stroke-width="1.3"/><polygon points="94.5,230.3 96.7,234 92.3,234" fill="#10d010"/><path d="M94.5 238.5L98.5 241.5" stroke="#e02020" stroke-width="1.3"/><polygon points="101.2,243.6 97,243 99.4,239.8" fill="#f02020"/><path d="M94.5 238.5L90.5 241.5" stroke="#6aa6f8" stroke-width="1.3"/><polygon points="87.8,243.6 92,243 89.6,239.8" fill="#6aa6f8"/><path d="M94.5 238.5L89.5 233.5M94.5 238.5L99.5 233.5" stroke="#555" stroke-width="1"/><path d="M94.5 238.5V244" stroke="#888" stroke-width="1.4"/><rect x="93.7" y="237.7" width="1.7" height="1.7" fill="#222"/><path d="M64.0 253.5H79.0" stroke="#8a8a8a" stroke-width="1" stroke-dasharray="1 1"/><path d="M78.8 257.2L81 260.2L86 252.8" stroke="#0a960a" stroke-width="1.6" fill="none" stroke-linejoin="miter"/><path d="M94.5 254.5V249.5" stroke="#20c020" stroke-width="1.3"/><polygon points="94.5,246.3 96.7,250 92.3,250" fill="#10d010"/><path d="M94.5 254.5L98.5 257.5" stroke="#e02020" stroke-width="1.3"/><polygon points="101.2,259.6 97,259 99.4,255.8" fill="#f02020"/><path d="M94.5 254.5L90.5 257.5" stroke="#6aa6f8" stroke-width="1.3"/><polygon points="87.8,259.6 92,259 89.6,255.8" fill="#6aa6f8"/><path d="M94.5 254.5L89.5 249.5M94.5 254.5L99.5 249.5" stroke="#555" stroke-width="1"/><path d="M94.5 254.5V260" stroke="#888" stroke-width="1.4"/><rect x="93.7" y="253.7" width="1.7" height="1.7" fill="#222"/><path d="M41.0 269.5H51.0" stroke="#8a8a8a" stroke-width="1" stroke-dasharray="1 1"/><rect x="32.5" y="265.5" width="8" height="8" fill="#fff" stroke="#8a8a8a" stroke-width="1"/><path d="M34.0 269.5H39.0" stroke="#111" stroke-width="1"/><path d="M36.5 267.0V272.0" stroke="#111" stroke-width="1"/><path d="M51.8 273.2L54 276.2L59 268.8" stroke="#0a960a" stroke-width="1.6" fill="none" stroke-linejoin="miter"/><g transform="translate(4.86,0) scale(0.92,1)"><path d="M61.2 265V263.2Q61.2 262.5 62.2 262.5H67.7L69.2 264H73.2Q74.2 264 74.2 265V267H61.2Z" fill="#d9a520" stroke="#4a4a3a" stroke-width="0.8"/><path d="M61.0 266.5H74.4L73.7 276.5H61.7Z" fill="#fdf08c" stroke="#4a4a3a" stroke-width="0.9"/></g><rect x="64.5" y="271" width="1.6" height="3.5" fill="#333"/><rect x="67.2" y="270" width="1.6" height="4.5" fill="#333"/><rect x="69.9" y="271" width="1.6" height="3.5" fill="#333"/><path d="M41.0 285.5H51.0" stroke="#8a8a8a" stroke-width="1" stroke-dasharray="1 1"/><rect x="32.5" y="281.5" width="8" height="8" fill="#fff" stroke="#8a8a8a" stroke-width="1"/><path d="M34.0 285.5H39.0" stroke="#111" stroke-width="1"/><path d="M36.5 283.0V288.0" stroke="#111" stroke-width="1"/><path d="M51.8 289.2L54 292.2L59 284.8" stroke="#0a960a" stroke-width="1.6" fill="none" stroke-linejoin="miter"/><g transform="translate(4.86,0) scale(0.92,1)"><path d="M61.2 281V279.2Q61.2 278.5 62.2 278.5H67.7L69.2 280H73.2Q74.2 280 74.2 281V283H61.2Z" fill="#d9a520" stroke="#4a4a3a" stroke-width="0.8"/><path d="M61.0 282.5H74.4L73.7 292.5H61.7Z" fill="#fdf08c" stroke="#4a4a3a" stroke-width="0.9"/></g><ellipse cx="67.7" cy="288" rx="4" ry="2.8" fill="#d8b060" stroke="#6a5a3a" stroke-width="0.7"/><rect x="66" y="287" width="3.5" height="2" fill="#b0b8c0" stroke="#555" stroke-width="0.5"/><rect x="78" y="293" width="28.5" height="16" fill="#ebebeb"/><path d="M41.0 301.5H51.0" stroke="#8a8a8a" stroke-width="1" stroke-dasharray="1 1"/><rect x="32.5" y="297.5" width="8" height="8" fill="#fff" stroke="#8a8a8a" stroke-width="1"/><path d="M34.0 301.5H39.0" stroke="#111" stroke-width="1"/><path d="M51.8 305.2L54 308.2L59 300.8" stroke="#0a960a" stroke-width="1.6" fill="none" stroke-linejoin="miter"/><polygon points="60.5,298.0 64,296.0 68.5,297.5 68.5,302.5 65,304.5 60.5,302.5" fill="#e6e6e6" stroke="#3a3a3a" stroke-width="0.9" stroke-linejoin="round"/><polygon points="65,299.5 68.5,297.5 68.5,302.5 65,304.5" fill="#f8f8f8" stroke="#3a3a3a" stroke-width="0.7"/><polygon points="60.5,298.0 64,296.0 68.5,297.5 65,299.5" fill="#d2d2d2" stroke="#3a3a3a" stroke-width="0.7"/><polygon points="66.0,300.0 69.5,298.0 74.0,299.5 74.0,304.5 70.5,306.5 66.0,304.5" fill="#e6e6e6" stroke="#3a3a3a" stroke-width="0.9" stroke-linejoin="round"/><polygon points="70.5,301.5 74.0,299.5 74.0,304.5 70.5,306.5" fill="#f8f8f8" stroke="#3a3a3a" stroke-width="0.7"/><polygon points="66.0,300.0 69.5,298.0 74.0,299.5 70.5,301.5" fill="#d2d2d2" stroke="#3a3a3a" stroke-width="0.7"/><path d="M64.0 317.5H79.0" stroke="#8a8a8a" stroke-width="1" stroke-dasharray="1 1"/><path d="M78.8 321.2L81 324.2L86 316.8" stroke="#0a960a" stroke-width="1.6" fill="none" stroke-linejoin="miter"/><polygon points="92.5,313.5 96.5,311.5 101,313.5 101,319 97,321 92.5,319" fill="#7ab0f5" stroke="#234" stroke-width="0.9"/><polygon points="92.5,313.5 97,315.5 97,321 92.5,319" fill="#cfe2fb" stroke="#234" stroke-width="0.7"/><path d="M90.5 310.5L89 311.5V320L95 324" stroke="#c8960c" stroke-width="1.2" fill="none"/><path d="M64.0 333.5H79.0" stroke="#8a8a8a" stroke-width="1" stroke-dasharray="1 1"/><path d="M78.8 337.2L81 340.2L86 332.8" stroke="#0a960a" stroke-width="1.6" fill="none" stroke-linejoin="miter"/><polygon points="87,335 91.5,332.5 95,334.5 90.5,337" fill="#6aa6f8"/><polygon points="91,330.5 94,329 97,330.5 97,334.5 94,336 91,334.5" fill="#a9ccfb"/><polygon points="97.5,331.5 101.5,336.5 95,337.5" fill="#4d8ff2"/><path d="M41.0 349.5H51.0" stroke="#8a8a8a" stroke-width="1" stroke-dasharray="1 1"/><rect x="32.5" y="345.5" width="8" height="8" fill="#fff" stroke="#8a8a8a" stroke-width="1"/><path d="M34.0 349.5H39.0" stroke="#111" stroke-width="1"/><path d="M51.8 353.2L54 356.2L59 348.8" stroke="#0a960a" stroke-width="1.6" fill="none" stroke-linejoin="miter"/><g transform="translate(4.86,0) scale(0.92,1)"><path d="M61.2 345V343.2Q61.2 342.5 62.2 342.5H67.7L69.2 344H73.2Q74.2 344 74.2 345V347H61.2Z" fill="#d9a520" stroke="#4a4a3a" stroke-width="0.8"/><path d="M61.0 346.5H74.4L73.7 356.5H61.7Z" fill="#fdf08c" stroke="#4a4a3a" stroke-width="0.9"/></g><path d="M64.5 349H71V354.5H66V352.5H69V351H64.5Z" fill="#5a9af5" stroke="#345" stroke-width="0.5"/><path d="M64.0 365.5H79.0" stroke="#8a8a8a" stroke-width="1" stroke-dasharray="1 1"/><path d="M78.8 369.2L81 372.2L86 364.8" stroke="#0a960a" stroke-width="1.6" fill="none" stroke-linejoin="miter"/><polygon points="87.5,362 90.5,358.8 101.5,358.8 101.5,369 98.5,372.5 87.5,372.5" fill="#cfe2fb" stroke="#1a2a3a" stroke-width="1"/><path d="M87.5 362H98.5L101.5 358.8M98.5 362V372.5" stroke="#1a2a3a" stroke-width="0.9" fill="none"/><path d="M90 365H96V370H92" stroke="#3d8cf0" stroke-width="1.8" fill="none"/><path d="M41.0 381.5H51.0" stroke="#8a8a8a" stroke-width="1" stroke-dasharray="1 1"/><rect x="32.5" y="377.5" width="8" height="8" fill="#fff" stroke="#8a8a8a" stroke-width="1"/><path d="M34.0 381.5H39.0" stroke="#111" stroke-width="1"/><polygon points="64.2,375.6 67.7,374 73,378.75 73,381.9 69.9,381.9 64.9,378.1" fill="#fff" stroke="#222" stroke-width="1" stroke-linejoin="round"/><polygon points="64.9,375.9 67.6,374.6 72.2,378.7 69.8,380.2" fill="#20c040" stroke="#222" stroke-width="0.6"/><path d="M63.3 376.2Q61.2 378 62.2 380.5" stroke="#e02020" stroke-width="1.1" fill="none"/><polygon points="60.8,379.6 63.8,379.8 62.4,382" fill="#e02020"/><rect x="60.5" y="384.2" width="13" height="3.3" fill="#f4f4f4" stroke="#222" stroke-width="0.9"/><rect x="70.5" y="384.8" width="2.6" height="1" fill="#f0a020"/><path d="M64.0 397.5H79.0" stroke="#8a8a8a" stroke-width="1" stroke-dasharray="1 1"/><path d="M78.8 401.2L81 404.2L86 396.8" stroke="#0a960a" stroke-width="1.6" fill="none" stroke-linejoin="miter"/><polygon points="88.5,394 91.5,390.8 100.5,390.8 100.5,401 97.5,404.5 88.5,404.5" fill="#fff" stroke="#222" stroke-width="1.1"/><path d="M88.5 394H97.5L100.5 390.8M97.5 394V404.5" stroke="#222" stroke-width="1" fill="none"/><circle cx="89.5" cy="393" r="1.5" fill="#20a020"/><path d="M64.0 413.5H79.0" stroke="#8a8a8a" stroke-width="1" stroke-dasharray="1 1"/><path d="M78.8 417.2L81 420.2L86 412.8" stroke="#0a960a" stroke-width="1.6" fill="none" stroke-linejoin="miter"/><polygon points="88.5,410 91.5,406.8 100.5,406.8 100.5,417 97.5,420.5 88.5,420.5" fill="#6a6ad0" stroke="#1a1a4a" stroke-width="1.1"/><path d="M88.5 413.5H97.5M88.5 417H97.5M91.5 410V420.5M94.5 410V420.5" stroke="#e8e8ff" stroke-width="0.8"/><path d="M88.5 410H97.5L100.5 406.8M97.5 410V420.5" stroke="#1a1a4a" stroke-width="1" fill="none"/><circle cx="89.8" cy="409" r="1.6" fill="#20a020"/><path d="M41.0 429.5H51.0" stroke="#8a8a8a" stroke-width="1" stroke-dasharray="1 1"/><rect x="32.5" y="425.5" width="8" height="8" fill="#fff" stroke="#8a8a8a" stroke-width="1"/><path d="M34.0 429.5H39.0" stroke="#111" stroke-width="1"/><path d="M51.8 433.2L54 436.2L59 428.8" stroke="#0a960a" stroke-width="1.6" fill="none" stroke-linejoin="miter"/><rect x="60" y="422" width="15" height="15" fill="#76c442"/><path d="M62 428H73" stroke="#fff" stroke-width="1.3"/><path d="M64.5 428L63 432.5M68 428L66.5 432.5M71.5 428L70 432.5" stroke="#fff" stroke-width="1.2"/><path d="M64.0 445.5H79.0" stroke="#8a8a8a" stroke-width="1" stroke-dasharray="1 1"/><path d="M78.8 449.2L81 452.2L86 444.8" stroke="#0a960a" stroke-width="1.6" fill="none" stroke-linejoin="miter"/><path d="M89.5 439V452M94.5 439V452M99.5 439V452M88 443H101M88 450H101" stroke="#333" stroke-width="1" fill="none"/><path d="M87.5 438.8H91.5M92.5 438.8H96.5M97.5 438.8H101.5" stroke="#2020e0" stroke-width="1.2"/><path d="M87.5 452.3H91.5M92.5 452.3H96.5M97.5 452.3H101.5" stroke="#e02020" stroke-width="1.2"/><path d="M87.5 449Q94.5 437 101.5 449" stroke="#20c020" stroke-width="1.3" fill="none"/><path d="M64.0 461.5H79.0" stroke="#8a8a8a" stroke-width="1" stroke-dasharray="1 1"/><path d="M78.8 465.2L81 468.2L86 460.8" stroke="#0a960a" stroke-width="1.6" fill="none" stroke-linejoin="miter"/><polygon points="87.5,457 92,454.5 97,456.5 97,462 92.5,464.5 87.5,462" fill="#fff" stroke="#333" stroke-width="0.9"/><polygon points="92.5,459 97,456.5 97,462 92.5,464.5" fill="#20c020" stroke="#333" stroke-width="0.7"/><path d="M87.5 457L92.5 459" stroke="#333" stroke-width="0.8"/><path d="M101 468L97.5 464.5" stroke="#c8960c" stroke-width="1.1"/><polygon points="96.5,463.5 99.5,464 97.2,466.4" fill="#c8960c"/><path d="M64.0 477.5H79.0" stroke="#8a8a8a" stroke-width="1" stroke-dasharray="1 1"/><path d="M78.8 481.2L81 484.2L86 476.8" stroke="#0a960a" stroke-width="1.6" fill="none" stroke-linejoin="miter"/><polygon points="87.5,473 92,470.5 97,472.5 97,478 92.5,480.5 87.5,478" fill="#fff" stroke="#333" stroke-width="0.9"/><polygon points="92.5,475 97,472.5 97,478 92.5,480.5" fill="#2080f0" stroke="#333" stroke-width="0.7"/><path d="M87.5 473L92.5 475" stroke="#333" stroke-width="0.8"/><path d="M101.5 480.5L97.5 483" stroke="#c8960c" stroke-width="1.1"/><polygon points="95.8,484 97.5,481.3 99,483.8" fill="#c8960c"/><path d="M68.0 493.5H78.0" stroke="#8a8a8a" stroke-width="1" stroke-dasharray="1 1"/><rect x="59.5" y="489.5" width="8" height="8" fill="#fff" stroke="#8a8a8a" stroke-width="1"/><path d="M61.0 493.5H66.0" stroke="#111" stroke-width="1"/><path d="M78.8 497.2L81 500.2L86 492.8" stroke="#0a960a" stroke-width="1.6" fill="none" stroke-linejoin="miter"/><g transform="translate(7.02,0) scale(0.92,1)"><path d="M88.2 489V487.2Q88.2 486.5 89.2 486.5H94.7L96.2 488H100.2Q101.2 488 101.2 489V491H88.2Z" fill="#d9a520" stroke="#4a4a3a" stroke-width="0.8"/><path d="M88.0 490.5H101.4L100.7 500.5H88.7Z" fill="#fdf08c" stroke="#4a4a3a" stroke-width="0.9"/></g><polygon points="91,494 94.5,492.5 98.5,494 98.5,497.5 95,499 91,497.5" fill="url(#rain)" stroke="#345" stroke-width="0.6"/><path d="M91.0 509.5H106.0" stroke="#8a8a8a" stroke-width="1" stroke-dasharray="1 1"/><path d="M105.8 513.2L108 516.2L113 508.8" stroke="#0a960a" stroke-width="1.6" fill="none" stroke-linejoin="miter"/><g transform="translate(9.18,0) scale(0.92,1)"><path d="M115.2 505V503.2Q115.2 502.5 116.2 502.5H121.7L123.2 504H127.2Q128.2 504 128.2 505V507H115.2Z" fill="#d9a520" stroke="#4a4a3a" stroke-width="0.8"/><path d="M115.0 506.5H128.4L127.7 516.5H115.7Z" fill="#fdf08c" stroke="#4a4a3a" stroke-width="0.9"/></g><text x="119.6" y="515" font-family="Liberation Serif, serif" font-weight="bold" font-size="9" fill="#3d8cf0">i</text><path d="M91.0 525.5H106.0" stroke="#8a8a8a" stroke-width="1" stroke-dasharray="1 1"/><path d="M105.8 529.2L108 532.2L113 524.8" stroke="#0a960a" stroke-width="1.6" fill="none" stroke-linejoin="miter"/><polygon points="114.5,522.0 118,520.0 122.5,521.5 122.5,526.5 119,528.5 114.5,526.5" fill="url(#rain)" stroke="#1a2a3a" stroke-width="0.9" stroke-linejoin="round"/><polygon points="119,523.5 122.5,521.5 122.5,526.5 119,528.5" fill="#f07020" stroke="#1a2a3a" stroke-width="0.7"/><polygon points="114.5,522.0 118,520.0 122.5,521.5 119,523.5" fill="#30c0a0" stroke="#1a2a3a" stroke-width="0.7"/><polygon points="120.0,524.0 123.5,522.0 128.0,523.5 128.0,528.5 124.5,530.5 120.0,528.5" fill="url(#rain)" stroke="#1a2a3a" stroke-width="0.9" stroke-linejoin="round"/><polygon points="124.5,525.5 128.0,523.5 128.0,528.5 124.5,530.5" fill="#f07020" stroke="#1a2a3a" stroke-width="0.7"/><polygon points="120.0,524.0 123.5,522.0 128.0,523.5 124.5,525.5" fill="#30c0a0" stroke="#1a2a3a" stroke-width="0.7"/><path d="M91.0 541.5H106.0" stroke="#8a8a8a" stroke-width="1" stroke-dasharray="1 1"/><path d="M105.8 545.2L108 548.2L113 540.8" stroke="#0a960a" stroke-width="1.6" fill="none" stroke-linejoin="miter"/><polygon points="114.5,538.0 118,536.0 122.5,537.5 122.5,542.5 119,544.5 114.5,542.5" fill="url(#rain)" stroke="#1a2a3a" stroke-width="0.9" stroke-linejoin="round"/><polygon points="119,539.5 122.5,537.5 122.5,542.5 119,544.5" fill="#f07020" stroke="#1a2a3a" stroke-width="0.7"/><polygon points="114.5,538.0 118,536.0 122.5,537.5 119,539.5" fill="#30c0a0" stroke="#1a2a3a" stroke-width="0.7"/><polygon points="120.0,540.0 123.5,538.0 128.0,539.5 128.0,544.5 124.5,546.5 120.0,544.5" fill="url(#rain)" stroke="#1a2a3a" stroke-width="0.9" stroke-linejoin="round"/><polygon points="124.5,541.5 128.0,539.5 128.0,544.5 124.5,546.5" fill="#f07020" stroke="#1a2a3a" stroke-width="0.7"/><polygon points="120.0,540.0 123.5,538.0 128.0,539.5 124.5,541.5" fill="#30c0a0" stroke="#1a2a3a" stroke-width="0.7"/><path d="M95.0 557.5H105.0" stroke="#8a8a8a" stroke-width="1" stroke-dasharray="1 1"/><rect x="86.5" y="553.5" width="8" height="8" fill="#fff" stroke="#8a8a8a" stroke-width="1"/><path d="M88.0 557.5H93.0" stroke="#111" stroke-width="1"/><path d="M105.8 561.2L108 564.2L113 556.8" stroke="#0a960a" stroke-width="1.6" fill="none" stroke-linejoin="miter"/><g transform="translate(9.18,0) scale(0.92,1)"><path d="M115.2 553V551.2Q115.2 550.5 116.2 550.5H121.7L123.2 552H127.2Q128.2 552 128.2 553V555H115.2Z" fill="#d9a520" stroke="#4a4a3a" stroke-width="0.8"/><path d="M115.0 554.5H128.4L127.7 564.5H115.7Z" fill="#fdf08c" stroke="#4a4a3a" stroke-width="0.9"/></g><path d="M118.5 557H125V562.5H120V560.5H123V559H118.5Z" fill="#5a9af5" stroke="#345" stroke-width="0.5"/><path d="M118.0 573.5H133.0" stroke="#8a8a8a" stroke-width="1" stroke-dasharray="1 1"/><path d="M132.8 577.2L135 580.2L140 572.8" stroke="#0a960a" stroke-width="1.6" fill="none" stroke-linejoin="miter"/><polygon points="141.5,570 144.5,566.8 155.5,566.8 155.5,577 152.5,580.5 141.5,580.5" fill="url(#rain)" stroke="#1a2a3a" stroke-width="1"/><path d="M141.5 570H152.5L155.5 566.8M152.5 570V580.5" stroke="#1a2a3a" stroke-width="0.9" fill="none"/><path d="M144 573H150V578H146" stroke="#1a2a8a" stroke-width="1.2" fill="none"/></svg>
<span class="t" style="left:2.5px;top:89.44px;font-size:12px;letter-spacing:0.069px;">Outline</span>
<span class="t" style="left:22.5px;top:113.54px;font-size:12px;letter-spacing:-0.129px;">Name</span>
<span class="t" style="left:123px;top:113.54px;font-size:12px;letter-spacing:-0.181px;word-spacing:0.181px;color:#a6a6a6;">Search Outline</span>
<span class="t" style="left:26px;top:135.69px;font-size:11px;letter-spacing:0.676px;color:#000;font-weight:bold;">Project*</span>
<span class="t" style="left:53px;top:151.69px;font-size:11px;letter-spacing:0.556px;word-spacing:-0.556px;color:#000;font-weight:bold;">Model (F4)</span>
<span class="t" style="left:79px;top:167.69px;font-size:11px;letter-spacing:-0.164px;color:#000;">Geometry</span>
<span class="t" style="left:79px;top:183.69px;font-size:11px;letter-spacing:-0.181px;color:#000;">Materials</span>
<span class="t" style="left:79px;top:199.69px;font-size:11px;letter-spacing:-0.182px;word-spacing:0.182px;color:#000;">Coordinate Systems</span>
<span class="t" style="left:106px;top:215.69px;font-size:11px;letter-spacing:-0.249px;word-spacing:0.249px;color:#000;">Global Coordinate System</span>
<span class="t" style="left:106px;top:231.69px;font-size:11px;letter-spacing:-0.162px;word-spacing:0.162px;color:#000;">Coordinate System</span>
<span class="t" style="left:106px;top:247.69px;font-size:11px;letter-spacing:-0.105px;word-spacing:0.105px;color:#000;">Coordinate System 2</span>
<span class="t" style="left:79px;top:263.69px;font-size:11px;letter-spacing:-0.188px;color:#000;">Symmetry</span>
<span class="t" style="left:79px;top:279.69px;font-size:11px;letter-spacing:-0.199px;color:#000;">Connections</span>
<span class="t" style="left:79px;top:295.69px;font-size:11px;letter-spacing:-0.477px;color:#000;">Mesh</span>
<span class="t" style="left:106px;top:311.69px;font-size:11px;letter-spacing:-0.475px;word-spacing:0.475px;color:#000;">Edge Sizing</span>
<span class="t" style="left:106px;top:327.69px;font-size:11px;letter-spacing:-0.185px;word-spacing:0.185px;color:#000;">Patch Conforming Method</span>
<span class="t" style="left:79px;top:343.69px;font-size:11px;letter-spacing:0.004px;color:#000;">Fracture</span>
<span class="t" style="left:106px;top:359.69px;font-size:11px;letter-spacing:-0.315px;word-spacing:0.315px;color:#000;">Pre-Meshed Crack</span>
<span class="t" style="left:79px;top:375.69px;font-size:11px;letter-spacing:-0.354px;word-spacing:0.354px;color:#000;">Named Selections</span>
<span class="t" style="left:106px;top:391.69px;font-size:11px;letter-spacing:-0.176px;word-spacing:0.176px;color:#000;">Crack tip</span>
<span class="t" style="left:106px;top:407.69px;font-size:11px;letter-spacing:-0.253px;color:#000;">Selection</span>
<span class="t" style="left:79px;top:423.69px;font-size:11px;letter-spacing:0.539px;word-spacing:-0.539px;color:#000;font-weight:bold;">Static Structural (F5)</span>
<span class="t" style="left:106px;top:439.69px;font-size:11px;letter-spacing:-0.176px;word-spacing:0.176px;color:#000;">Analysis Settings</span>
<span class="t" style="left:106px;top:455.69px;font-size:11px;letter-spacing:-0.254px;color:#000;">Pressure</span>
<span class="t" style="left:106px;top:471.69px;font-size:11px;letter-spacing:-0.305px;color:#000;">Displacement</span>
<span class="t" style="left:106px;top:487.69px;font-size:11px;letter-spacing:0.398px;word-spacing:-0.398px;color:#000;font-weight:bold;">Solution (F6)</span>
<span class="t" style="left:133px;top:503.69px;font-size:11px;letter-spacing:-0.048px;word-spacing:0.048px;color:#000;">Solution Information</span>
<span class="t" style="left:133px;top:519.69px;font-size:11px;letter-spacing:-0.016px;word-spacing:0.016px;color:#000;">Total Deformation</span>
<span class="t" style="left:133px;top:535.69px;font-size:11px;letter-spacing:-0.166px;word-spacing:0.166px;color:#000;">Equivalent Stress</span>
<span class="t" style="left:133px;top:551.69px;font-size:11px;letter-spacing:-0.001px;word-spacing:0.001px;color:#000;">Fracture Tool</span>
<span class="t" style="left:160px;top:567.69px;font-size:11px;letter-spacing:-0.414px;word-spacing:0.414px;color:#000;">SIFS (K1)</span>
<!-- sec_details -->
<div style="position:absolute;left:0;top:688px;width:424px;height:1px;background:#ccceDB;"></div>
<div style="position:absolute;left:423px;top:688px;width:1px;height:20px;background:#ccceDB;"></div>
<div style="position:absolute;left:10px;top:708px;width:397px;height:380px;background:#fff;"></div>
<svg style="position:absolute;left:0;top:0" width="428" height="1088" viewBox="0 0 428 1088"><defs><pattern id="hd2" width="4" height="4" patternUnits="userSpaceOnUse" x="2" y="3"><rect x="0" y="0" width="1" height="1" fill="#999aa6"/><rect x="2" y="2" width="1" height="1" fill="#999aa6"/></pattern></defs><rect x="97" y="695" width="259" height="5" fill="url(#hd2)"/><polygon points="358,696 367,696 362.5,700.6" fill="#1e1e1e"/><path d="M376.5 692.5H380.5M376.5 692.5V699M379.8 692.5V699M374.5 699H382.5M378.5 699V703.5" stroke="#1e1e1e" stroke-width="1.1" fill="none"/><rect x="379.3" y="692.5" width="1.4" height="6.5" fill="#1e1e1e"/><rect x="389.5" y="694" width="10" height="9" fill="none" stroke="#1e1e1e" stroke-width="1"/><rect x="389" y="693.5" width="11" height="2" fill="#1e1e1e"/><path d="M406.7 693.7L414.3 701.3M414.3 693.7L406.7 701.3" stroke="#1e1e1e" stroke-width="1.5" fill="none"/><rect x="10" y="708" width="397" height="1" fill="#a0a0a0"/><rect x="-1.5" y="713.5" width="9" height="9" fill="#fff" stroke="#8a8a8a" stroke-width="1"/><path d="M0 718H5" stroke="#111" stroke-width="1"/><rect x="10" y="726" width="397" height="1" fill="#a0a0a0"/><rect x="231" y="726" width="1" height="18" fill="#a0a0a0"/><rect x="10" y="744" width="397" height="1" fill="#a0a0a0"/><rect x="-1.5" y="749.5" width="9" height="9" fill="#fff" stroke="#8a8a8a" stroke-width="1"/><path d="M0 754H5" stroke="#111" stroke-width="1"/><rect x="10" y="762" width="397" height="1" fill="#a0a0a0"/><rect x="231" y="762" width="1" height="18" fill="#a0a0a0"/><rect x="10" y="780" width="397" height="1" fill="#a0a0a0"/><rect x="231" y="780" width="1" height="18" fill="#a0a0a0"/><rect x="10" y="798" width="397" height="1" fill="#a0a0a0"/><rect x="231" y="798" width="1" height="18" fill="#a0a0a0"/><rect x="14.5" y="801.5" width="11" height="11" fill="#fff" stroke="#d0d0d0" stroke-width="1"/><rect x="10" y="816" width="397" height="1" fill="#a0a0a0"/><rect x="-1.5" y="821.5" width="9" height="9" fill="#fff" stroke="#8a8a8a" stroke-width="1"/><path d="M0 826H5" stroke="#111" stroke-width="1"/><rect x="10" y="834" width="397" height="1" fill="#a0a0a0"/><rect x="231" y="834" width="1" height="18" fill="#a0a0a0"/><rect x="10" y="852" width="397" height="1" fill="#a0a0a0"/><rect x="231" y="852" width="1" height="18" fill="#a0a0a0"/><rect x="14.5" y="855.5" width="11" height="11" fill="#fff" stroke="#d0d0d0" stroke-width="1"/><rect x="10" y="870" width="397" height="1" fill="#a0a0a0"/><rect x="231" y="870" width="1" height="18" fill="#a0a0a0"/><rect x="14.5" y="873.5" width="11" height="11" fill="#fff" stroke="#d0d0d0" stroke-width="1"/><rect x="10" y="888" width="397" height="1" fill="#a0a0a0"/><rect x="231" y="888" width="1" height="18" fill="#a0a0a0"/><rect x="10" y="906" width="397" height="1" fill="#a0a0a0"/><rect x="231" y="906" width="1" height="18" fill="#a0a0a0"/><rect x="14.5" y="909.5" width="11" height="11" fill="#fff" stroke="#d0d0d0" stroke-width="1"/><rect x="10" y="924" width="397" height="1" fill="#a0a0a0"/><rect x="231" y="924" width="1" height="18" fill="#a0a0a0"/><rect x="10" y="942" width="397" height="1" fill="#a0a0a0"/><rect x="231" y="942" width="1" height="18" fill="#a0a0a0"/><rect x="14.5" y="945.5" width="11" height="11" fill="#fff" stroke="#d0d0d0" stroke-width="1"/><rect x="10" y="960" width="397" height="1" fill="#a0a0a0"/><rect x="231" y="960" width="1" height="18" fill="#a0a0a0"/><rect x="14.5" y="963.5" width="11" height="11" fill="#fff" stroke="#d0d0d0" stroke-width="1"/><rect x="10" y="978" width="397" height="1" fill="#a0a0a0"/><rect x="231" y="978" width="1" height="18" fill="#a0a0a0"/><rect x="10" y="996" width="397" height="1" fill="#a0a0a0"/><rect x="231" y="996" width="1" height="18" fill="#a0a0a0"/><rect x="232" y="1015" width="174" height="17" fill="#e5e5e5"/><rect x="10" y="1014" width="397" height="1" fill="#a0a0a0"/><rect x="231" y="1014" width="1" height="18" fill="#a0a0a0"/><rect x="232" y="1033" width="174" height="17" fill="#e5e5e5"/><rect x="10" y="1032" width="397" height="1" fill="#a0a0a0"/><rect x="231" y="1032" width="1" height="18" fill="#a0a0a0"/><rect x="232" y="1051" width="174" height="17" fill="#e5e5e5"/><rect x="10" y="1050" width="397" height="1" fill="#a0a0a0"/><rect x="231" y="1050" width="1" height="18" fill="#a0a0a0"/><rect x="10" y="1068" width="397" height="1" fill="#a0a0a0"/><rect x="231" y="1068" width="1" height="18" fill="#a0a0a0"/><rect x="10" y="1086" width="397" height="1" fill="#a0a0a0"/><rect x="231" y="1086" width="1" height="18" fill="#a0a0a0"/><rect x="10" y="708" width="1" height="380" fill="#a0a0a0"/><rect x="406" y="708" width="1" height="380" fill="#a0a0a0"/><rect x="407" y="708" width="17" height="380" fill="#eeeef2"/><rect x="408" y="725" width="15" height="156" fill="#c2c3c9"/><path d="M411.5 719L415.5 714.5L419.5 719" stroke="#555" stroke-width="1.6" fill="none"/><path d="M411.5 1077L415.5 1081.5L419.5 1077" stroke="#555" stroke-width="1.6" fill="none"/></svg>
<span class="t" style="left:2px;top:691.94px;font-size:12px;letter-spacing:-0.081px;word-spacing:0.081px;color:#444;">Details of "Mesh"</span>
<span class="t" style="left:14px;top:712.03px;font-size:10.6px;letter-spacing:-0.096px;color:#000;font-weight:bold;">Display</span>
<span class="t" style="left:14px;top:730.03px;font-size:10.6px;letter-spacing:0.147px;word-spacing:-0.147px;color:#000;">Display Style</span>
<span class="t" style="left:235px;top:730.03px;font-size:10.6px;letter-spacing:0.323px;word-spacing:-0.323px;color:#000;">Use Geometry Setting</span>
<span class="t" style="left:14px;top:748.03px;font-size:10.6px;letter-spacing:0.150px;color:#000;font-weight:bold;">Defaults</span>
<span class="t" style="left:14px;top:766.03px;font-size:10.6px;letter-spacing:0.044px;word-spacing:-0.044px;color:#000;">Physics Preference</span>
<span class="t" style="left:235px;top:766.03px;font-size:10.6px;letter-spacing:0.341px;color:#000;">Mechanical</span>
<span class="t" style="left:14px;top:784.03px;font-size:10.6px;letter-spacing:0.344px;word-spacing:-0.344px;color:#000;">Element Order</span>
<span class="t" style="left:235px;top:784.03px;font-size:10.6px;letter-spacing:0.479px;word-spacing:-0.479px;color:#000;">Program Controlled</span>
<span class="t" style="left:30px;top:802.03px;font-size:10.6px;letter-spacing:0.054px;word-spacing:-0.054px;color:#000;">Element Size</span>
<span class="t" style="left:235px;top:802.03px;font-size:10.6px;letter-spacing:-0.105px;word-spacing:0.105px;color:#000;">2, mm</span>
<span class="t" style="left:14px;top:820.03px;font-size:10.6px;letter-spacing:-0.195px;color:#000;font-weight:bold;">Sizing</span>
<span class="t" style="left:14px;top:838.03px;font-size:10.6px;letter-spacing:0.340px;word-spacing:-0.340px;color:#000;">Use Adaptive Sizing</span>
<span class="t" style="left:235px;top:838.03px;font-size:10.6px;letter-spacing:0.227px;color:#000;">No</span>
<span class="t" style="left:30px;top:856.03px;font-size:10.6px;letter-spacing:0.455px;word-spacing:-0.455px;color:#000;">Growth Rate</span>
<span class="t" style="left:235px;top:856.03px;font-size:10.6px;letter-spacing:-0.240px;color:#000;">1,2</span>
<span class="t" style="left:30px;top:874.03px;font-size:10.6px;letter-spacing:-0.080px;word-spacing:0.080px;color:#000;">Max Size</span>
<span class="t" style="left:235px;top:874.03px;font-size:10.6px;letter-spacing:0.232px;word-spacing:-0.232px;color:#000;">Default (4, mm)</span>
<span class="t" style="left:14px;top:892.03px;font-size:10.6px;letter-spacing:0.559px;word-spacing:-0.559px;color:#000;">Mesh Defeaturing</span>
<span class="t" style="left:235px;top:892.03px;font-size:10.6px;letter-spacing:-1.094px;color:#000;">Yes</span>
<span class="t" style="left:30px;top:910.03px;font-size:10.6px;letter-spacing:0.226px;word-spacing:-0.226px;color:#000;">Defeature Size</span>
<span class="t" style="left:235px;top:910.03px;font-size:10.6px;letter-spacing:0.218px;word-spacing:-0.218px;color:#000;">Default (1,e-002 mm)</span>
<span class="t" style="left:14px;top:928.03px;font-size:10.6px;letter-spacing:0.366px;word-spacing:-0.366px;color:#000;">Capture Curvature</span>
<span class="t" style="left:235px;top:928.03px;font-size:10.6px;letter-spacing:-1.094px;color:#000;">Yes</span>
<span class="t" style="left:30px;top:946.03px;font-size:10.6px;letter-spacing:0.308px;word-spacing:-0.308px;color:#000;">Curvature Min Size</span>
<span class="t" style="left:235px;top:946.03px;font-size:10.6px;letter-spacing:0.218px;word-spacing:-0.218px;color:#000;">Default (2,e-002 mm)</span>
<span class="t" style="left:30px;top:964.03px;font-size:10.6px;letter-spacing:0.447px;word-spacing:-0.447px;color:#000;">Curvature Normal Angle</span>
<span class="t" style="left:235px;top:964.03px;font-size:10.6px;letter-spacing:0.176px;word-spacing:-0.176px;color:#000;">Default (70,395°)</span>
<span class="t" style="left:14px;top:982.03px;font-size:10.6px;letter-spacing:0.363px;word-spacing:-0.363px;color:#000;">Capture Proximity</span>
<span class="t" style="left:235px;top:982.03px;font-size:10.6px;letter-spacing:0.227px;color:#000;">No</span>
<span class="t" style="left:14px;top:1000.03px;font-size:10.6px;letter-spacing:0.225px;word-spacing:-0.225px;color:#000;">Size Formulation (Beta)</span>
<span class="t" style="left:235px;top:1000.03px;font-size:10.6px;letter-spacing:0.479px;word-spacing:-0.479px;color:#000;">Program Controlled</span>
<span class="t" style="left:14px;top:1018.03px;font-size:10.6px;letter-spacing:0.541px;word-spacing:-0.541px;color:#000;">Bounding Box Diagonal</span>
<span class="t" style="left:235px;top:1018.03px;font-size:10.6px;letter-spacing:0.002px;word-spacing:-0.002px;color:#000;">66,332 mm</span>
<span class="t" style="left:14px;top:1036.03px;font-size:10.6px;letter-spacing:0.198px;word-spacing:-0.198px;color:#000;">Average Surface Area</span>
<span class="t" style="left:235px;top:1036.03px;font-size:10.6px;letter-spacing:0.054px;word-spacing:-0.054px;color:#000;">271,64 mm²</span>
<span class="t" style="left:14px;top:1054.03px;font-size:10.6px;letter-spacing:0.530px;word-spacing:-0.530px;color:#000;">Minimum Edge Length</span>
<span class="t" style="left:235px;top:1054.03px;font-size:10.6px;letter-spacing:0.071px;word-spacing:-0.071px;color:#000;">6,7788e-002 mm</span>
<span class="t" style="left:14px;top:1072.03px;font-size:10.6px;letter-spacing:0.085px;word-spacing:-0.085px;color:#000;">Enable Size Field (Beta)</span>
<span class="t" style="left:235px;top:1072.03px;font-size:10.6px;letter-spacing:0.227px;color:#000;">No</span>
<!-- sec_view -->
<div style="position:absolute;left:428px;top:112px;width:1489px;height:822px;overflow:hidden;background:linear-gradient(#6d8bdc,#ffffff);"><svg width="1489" height="822" viewBox="0 0 1489 822" style="position:absolute;left:0;top:0">
<defs>
<linearGradient id="cylg" x1="0" x2="1" y1="0" y2="0">
<stop offset="0" stop-color="#7a6650"/><stop offset="0.06" stop-color="#5b4c3c"/><stop offset="0.14" stop-color="#4b4034"/>
<stop offset="0.28" stop-color="#7b6752"/><stop offset="0.48" stop-color="#a98c6c"/><stop offset="0.69" stop-color="#c9a57e"/>
<stop offset="0.85" stop-color="#dab389"/><stop offset="1" stop-color="#d2ab83"/>
</linearGradient>
<linearGradient id="cirg" x1="0" x2="0" y1="0" y2="1">
<stop offset="0" stop-color="#574838"/><stop offset="0.25" stop-color="#6b5846"/><stop offset="0.5" stop-color="#8c7459"/><stop offset="0.75" stop-color="#a88b6a"/><stop offset="1" stop-color="#b08e6c"/>
</linearGradient>
<radialGradient id="tipg" cx="0.5" cy="0.5" r="0.5"><stop offset="0" stop-color="#000" stop-opacity="0.35"/><stop offset="0.5" stop-color="#000" stop-opacity="0.18"/><stop offset="1" stop-color="#000" stop-opacity="0"/></radialGradient>
<clipPath id="bodyclip"><polygon points="518.5,98.5 712.5,98.5 712.5,494 702.5,533 702.5,680.5 527.5,680.5 527.5,533 518.5,492"/></clipPath>
</defs>
<polygon points="518,98 713,98 713,494 518,492" fill="url(#cylg)"/>
<polygon points="518,492 713,494 703,533 703,681 527,681 527,533" fill="#b08e6c"/>
<g clip-path="url(#bodyclip)">
<circle cx="615.5" cy="491.0" r="96.0" fill="url(#cirg)"/>
<ellipse cx="657" cy="682" rx="52" ry="26" fill="url(#tipg)"/>
<ellipse cx="680" cy="679.5" rx="8" ry="3.5" fill="#000"/>
</g>
<path d="M518 98l2.1 0M518 98l0.5 16.4M520.1 98l6.3 0M520.1 98l-1.6 16.4M520.1 98l2.6 16.4M526.4 98l10.2 0M526.4 98l-3.7 16.4M526.4 98l4.6 16.4M536.6 98l13.6 0M536.6 98l-5.6 16.4M536.6 98l6.4 16.4M550.3 98l16.5 0M550.3 98l-7.2 16.4M550.3 98l7.9 16.4M566.8 98l18.6 0M566.8 98l-8.6 16.4M566.8 98l9.1 16.4M585.4 98l19.9 0M585.4 98l-9.5 16.4M585.4 98l9.9 16.4M605.3 98l20.4 0M605.3 98l-10.1 16.4M605.3 98l10.2 16.4M625.7 98l19.9 0M625.7 98l-10.2 16.4M625.7 98l10.1 16.4M645.6 98l18.6 0M645.6 98l-9.9 16.4M645.6 98l9.5 16.4M664.2 98l16.5 0M664.2 98l-9.1 16.4M664.2 98l8.6 16.4M680.7 98l13.6 0M680.7 98l-7.9 16.4M680.7 98l7.2 16.4M694.4 98l10.2 0M694.4 98l-6.4 16.4M694.4 98l5.6 16.4M704.6 98l6.3 0M704.6 98l-4.6 16.4M704.6 98l3.7 16.4M710.9 98l2.1 0M710.9 98l-2.6 16.4M710.9 98l1.6 16.4M713 98l-0.5 16.4M518.5 114.4l4.2 0M518.5 114.4l-0.5 16.4M518.5 114.4l1.6 16.4M522.8 114.4l8.3 0M522.8 114.4l-2.6 16.4M522.8 114.4l3.7 16.4M531.1 114.4l12 0M531.1 114.4l-4.6 16.4M531.1 114.4l5.6 16.4M543 114.4l15.1 0M543 114.4l-6.4 16.4M543 114.4l7.2 16.4M558.2 114.4l17.7 0M558.2 114.4l-7.9 16.4M558.2 114.4l8.6 16.4M575.8 114.4l19.4 0M575.8 114.4l-9.1 16.4M575.8 114.4l9.5 16.4M595.2 114.4l20.3 0M595.2 114.4l-9.9 16.4M595.2 114.4l10.1 16.4M615.5 114.4l20.3 0M615.5 114.4l-10.2 16.4M615.5 114.4l10.2 16.4M635.8 114.4l19.4 0M635.8 114.4l-10.1 16.4M635.8 114.4l9.9 16.4M655.2 114.4l17.7 0M655.2 114.4l-9.5 16.4M655.2 114.4l9.1 16.4M672.8 114.4l15.1 0M672.8 114.4l-8.6 16.4M672.8 114.4l7.9 16.4M688 114.4l12 0M688 114.4l-7.2 16.4M688 114.4l6.4 16.4M699.9 114.4l8.3 0M699.9 114.4l-5.6 16.4M699.9 114.4l4.6 16.4M708.2 114.4l4.2 0M708.2 114.4l-3.7 16.4M708.2 114.4l2.6 16.4M712.5 114.4l-1.6 16.4M712.5 114.4l0.5 16.4M518 130.8l2.1 0M518 130.8l0.5 16.4M520.1 130.8l6.3 0M520.1 130.8l-1.6 16.4M520.1 130.8l2.6 16.4M526.4 130.8l10.2 0M526.4 130.8l-3.7 16.4M526.4 130.8l4.6 16.4M536.6 130.8l13.6 0M536.6 130.8l-5.6 16.4M536.6 130.8l6.4 16.4M550.3 130.8l16.5 0M550.3 130.8l-7.2 16.4M550.3 130.8l7.9 16.4M566.8 130.8l18.6 0M566.8 130.8l-8.6 16.4M566.8 130.8l9.1 16.4M585.4 130.8l19.9 0M585.4 130.8l-9.5 16.4M585.4 130.8l9.9 16.4M605.3 130.8l20.4 0M605.3 130.8l-10.1 16.4M605.3 130.8l10.2 16.4M625.7 130.8l19.9 0M625.7 130.8l-10.2 16.4M625.7 130.8l10.1 16.4M645.6 130.8l18.6 0M645.6 130.8l-9.9 16.4M645.6 130.8l9.5 16.4M664.2 130.8l16.5 0M664.2 130.8l-9.1 16.4M664.2 130.8l8.6 16.4M680.7 130.8l13.6 0M680.7 130.8l-7.9 16.4M680.7 130.8l7.2 16.4M694.4 130.8l10.2 0M694.4 130.8l-6.4 16.4M694.4 130.8l5.6 16.4M704.6 130.8l6.3 0M704.6 130.8l-4.6 16.4M704.6 130.8l3.7 16.4M710.9 130.8l2.1 0M710.9 130.8l-2.6 16.4M710.9 130.8l1.6 16.4M713 130.8l-0.5 16.4M518.5 147.2l4.2 0M518.5 147.2l-0.5 16.4M518.5 147.2l1.6 16.4M522.8 147.2l8.3 0M522.8 147.2l-2.6 16.4M522.8 147.2l3.7 16.4M531.1 147.2l12 0M531.1 147.2l-4.6 16.4M531.1 147.2l5.6 16.4M543 147.2l15.1 0M543 147.2l-6.4 16.4M543 147.2l7.2 16.4M558.2 147.2l17.7 0M558.2 147.2l-7.9 16.4M558.2 147.2l8.6 16.4M575.8 147.2l19.4 0M575.8 147.2l-9.1 16.4M575.8 147.2l9.5 16.4M595.2 147.2l20.3 0M595.2 147.2l-9.9 16.4M595.2 147.2l10.1 16.4M615.5 147.2l20.3 0M615.5 147.2l-10.2 16.4M615.5 147.2l10.2 16.4M635.8 147.2l19.4 0M635.8 147.2l-10.1 16.4M635.8 147.2l9.9 16.4M655.2 147.2l17.7 0M655.2 147.2l-9.5 16.4M655.2 147.2l9.1 16.4M672.8 147.2l15.1 0M672.8 147.2l-8.6 16.4M672.8 147.2l7.9 16.4M688 147.2l12 0M688 147.2l-7.2 16.4M688 147.2l6.4 16.4M699.9 147.2l8.3 0M699.9 147.2l-5.6 16.4M699.9 147.2l4.6 16.4M708.2 147.2l4.2 0M708.2 147.2l-3.7 16.4M708.2 147.2l2.6 16.4M712.5 147.2l-1.6 16.4M712.5 147.2l0.5 16.4M518 163.6l2.1 0M518 163.6l0.5 16.4M520.1 163.6l6.3 0M520.1 163.6l-1.6 16.4M520.1 163.6l2.6 16.4M526.4 163.6l10.2 0M526.4 163.6l-3.7 16.4M526.4 163.6l4.6 16.4M536.6 163.6l13.6 0M536.6 163.6l-5.6 16.4M536.6 163.6l6.4 16.4M550.3 163.6l16.5 0M550.3 163.6l-7.2 16.4M550.3 163.6l7.9 16.4M566.8 163.6l18.6 0M566.8 163.6l-8.6 16.4M566.8 163.6l9.1 16.4M585.4 163.6l19.9 0M585.4 163.6l-9.5 16.4M585.4 163.6l9.9 16.4M605.3 163.6l20.4 0M605.3 163.6l-10.1 16.4M605.3 163.6l10.2 16.4M625.7 163.6l19.9 0M625.7 163.6l-10.2 16.4M625.7 163.6l10.1 16.4M645.6 163.6l18.6 0M645.6 163.6l-9.9 16.4M645.6 163.6l9.5 16.4M664.2 163.6l16.5 0M664.2 163.6l-9.1 16.4M664.2 163.6l8.6 16.4M680.7 163.6l13.6 0M680.7 163.6l-7.9 16.4M680.7 163.6l7.2 16.4M694.4 163.6l10.2 0M694.4 163.6l-6.4 16.4M694.4 163.6l5.6 16.4M704.6 163.6l6.3 0M704.6 163.6l-4.6 16.4M704.6 163.6l3.7 16.4M710.9 163.6l2.1 0M710.9 163.6l-2.6 16.4M710.9 163.6l1.6 16.4M713 163.6l-0.5 16.4M518.5 180l4.2 0M518.5 180l-0.5 16.4M518.5 180l1.6 16.4M522.8 180l8.3 0M522.8 180l-2.6 16.4M522.8 180l3.7 16.4M531.1 180l12 0M531.1 180l-4.6 16.4M531.1 180l5.6 16.4M543 180l15.1 0M543 180l-6.4 16.4M543 180l7.2 16.4M558.2 180l17.7 0M558.2 180l-7.9 16.4M558.2 180l8.6 16.4M575.8 180l19.4 0M575.8 180l-9.1 16.4M575.8 180l9.5 16.4M595.2 180l20.3 0M595.2 180l-9.9 16.4M595.2 180l10.1 16.4M615.5 180l20.3 0M615.5 180l-10.2 16.4M615.5 180l10.2 16.4M635.8 180l19.4 0M635.8 180l-10.1 16.4M635.8 180l9.9 16.4M655.2 180l17.7 0M655.2 180l-9.5 16.4M655.2 180l9.1 16.4M672.8 180l15.1 0M672.8 180l-8.6 16.4M672.8 180l7.9 16.4M688 180l12 0M688 180l-7.2 16.4M688 180l6.4 16.4M699.9 180l8.3 0M699.9 180l-5.6 16.4M699.9 180l4.6 16.4M708.2 180l4.2 0M708.2 180l-3.7 16.4M708.2 180l2.6 16.4M712.5 180l-1.6 16.4M712.5 180l0.5 16.4M518 196.4l2.1 0M518 196.4l0.5 16.4M520.1 196.4l6.3 0M520.1 196.4l-1.6 16.4M520.1 196.4l2.6 16.4M526.4 196.4l10.2 0M526.4 196.4l-3.7 16.4M526.4 196.4l4.6 16.4M536.6 196.4l13.6 0M536.6 196.4l-5.6 16.4M536.6 196.4l6.4 16.4M550.3 196.4l16.5 0M550.3 196.4l-7.2 16.4M550.3 196.4l7.9 16.4M566.8 196.4l18.6 0M566.8 196.4l-8.6 16.4M566.8 196.4l9.1 16.4M585.4 196.4l19.9 0M585.4 196.4l-9.5 16.4M585.4 196.4l9.9 16.4M605.3 196.4l20.4 0M605.3 196.4l-10.1 16.4M605.3 196.4l10.2 16.4M625.7 196.4l19.9 0M625.7 196.4l-10.2 16.4M625.7 196.4l10.1 16.4M645.6 196.4l18.6 0M645.6 196.4l-9.9 16.4M645.6 196.4l9.5 16.4M664.2 196.4l16.5 0M664.2 196.4l-9.1 16.4M664.2 196.4l8.6 16.4M680.7 196.4l13.6 0M680.7 196.4l-7.9 16.4M680.7 196.4l7.2 16.4M694.4 196.4l10.2 0M694.4 196.4l-6.4 16.4M694.4 196.4l5.6 16.4M704.6 196.4l6.3 0M704.6 196.4l-4.6 16.4M704.6 196.4l3.7 16.4M710.9 196.4l2.1 0M710.9 196.4l-2.6 16.4M710.9 196.4l1.6 16.4M713 196.4l-0.5 16.4M518.5 212.8l4.2 0M518.5 212.8l-0.5 16.4M518.5 212.8l1.6 16.4M522.8 212.8l8.3 0M522.8 212.8l-2.6 16.4M522.8 212.8l3.7 16.4M531.1 212.8l12 0M531.1 212.8l-4.6 16.4M531.1 212.8l5.6 16.4M543 212.8l15.1 0M543 212.8l-6.4 16.4M543 212.8l7.2 16.4M558.2 212.8l17.7 0M558.2 212.8l-7.9 16.4M558.2 212.8l8.6 16.4M575.8 212.8l19.4 0M575.8 212.8l-9.1 16.4M575.8 212.8l9.5 16.4M595.2 212.8l20.3 0M595.2 212.8l-9.9 16.4M595.2 212.8l10.1 16.4M615.5 212.8l20.3 0M615.5 212.8l-10.2 16.4M615.5 212.8l10.2 16.4M635.8 212.8l19.4 0M635.8 212.8l-10.1 16.4M635.8 212.8l9.9 16.4M655.2 212.8l17.7 0M655.2 212.8l-9.5 16.4M655.2 212.8l9.1 16.4M672.8 212.8l15.1 0M672.8 212.8l-8.6 16.4M672.8 212.8l7.9 16.4M688 212.8l12 0M688 212.8l-7.2 16.4M688 212.8l6.4 16.4M699.9 212.8l8.3 0M699.9 212.8l-5.6 16.4M699.9 212.8l4.6 16.4M708.2 212.8l4.2 0M708.2 212.8l-3.7 16.4M708.2 212.8l2.6 16.4M712.5 212.8l-1.6 16.4M712.5 212.8l0.5 16.4M518 229.2l2.1 0M518 229.2l0.5 16.4M520.1 229.2l6.3 0M520.1 229.2l-1.6 16.4M520.1 229.2l2.6 16.4M526.4 229.2l10.2 0M526.4 229.2l-3.7 16.4M526.4 229.2l4.6 16.4M536.6 229.2l13.6 0M536.6 229.2l-5.6 16.4M536.6 229.2l6.4 16.4M550.3 229.2l16.5 0M550.3 229.2l-7.2 16.4M550.3 229.2l7.9 16.4M566.8 229.2l18.6 0M566.8 229.2l-8.6 16.4M566.8 229.2l9.1 16.4M585.4 229.2l19.9 0M585.4 229.2l-9.5 16.4M585.4 229.2l9.9 16.4M605.3 229.2l20.4 0M605.3 229.2l-10.1 16.4M605.3 229.2l10.2 16.4M625.7 229.2l19.9 0M625.7 229.2l-10.2 16.4M625.7 229.2l10.1 16.4M645.6 229.2l18.6 0M645.6 229.2l-9.9 16.4M645.6 229.2l9.5 16.4M664.2 229.2l16.5 0M664.2 229.2l-9.1 16.4M664.2 229.2l8.6 16.4M680.7 229.2l13.6 0M680.7 229.2l-7.9 16.4M680.7 229.2l7.2 16.4M694.4 229.2l10.2 0M694.4 229.2l-6.4 16.4M694.4 229.2l5.6 16.4M704.6 229.2l6.3 0M704.6 229.2l-4.6 16.4M704.6 229.2l3.7 16.4M710.9 229.2l2.1 0M710.9 229.2l-2.6 16.4M710.9 229.2l1.6 16.4M713 229.2l-0.5 16.4M518.5 245.6l4.2 0M518.5 245.6l-0.5 16.4M518.5 245.6l1.6 16.4M522.8 245.6l8.3 0M522.8 245.6l-2.6 16.4M522.8 245.6l3.7 16.4M531.1 245.6l12 0M531.1 245.6l-4.6 16.4M531.1 245.6l5.6 16.4M543 245.6l15.1 0M543 245.6l-6.4 16.4M543 245.6l7.2 16.4M558.2 245.6l17.7 0M558.2 245.6l-7.9 16.4M558.2 245.6l8.6 16.4M575.8 245.6l19.4 0M575.8 245.6l-9.1 16.4M575.8 245.6l9.5 16.4M595.2 245.6l20.3 0M595.2 245.6l-9.9 16.4M595.2 245.6l10.1 16.4M615.5 245.6l20.3 0M615.5 245.6l-10.2 16.4M615.5 245.6l10.2 16.4M635.8 245.6l19.4 0M635.8 245.6l-10.1 16.4M635.8 245.6l9.9 16.4M655.2 245.6l17.7 0M655.2 245.6l-9.5 16.4M655.2 245.6l9.1 16.4M672.8 245.6l15.1 0M672.8 245.6l-8.6 16.4M672.8 245.6l7.9 16.4M688 245.6l12 0M688 245.6l-7.2 16.4M688 245.6l6.4 16.4M699.9 245.6l8.3 0M699.9 245.6l-5.6 16.4M699.9 245.6l4.6 16.4M708.2 245.6l4.2 0M708.2 245.6l-3.7 16.4M708.2 245.6l2.6 16.4M712.5 245.6l-1.6 16.4M712.5 245.6l0.5 16.4M518 262l2.1 0M518 262l0.5 16.4M520.1 262l6.3 0M520.1 262l-1.6 16.4M520.1 262l2.7 16.7M520.1 262l-1.6 16.4M526.4 262l10.2 0M526.4 262l-3.6 16.7M526.4 262l4.8 16.6M536.6 262l13.6 0M536.6 262l-5.4 16.6M536.6 262l6.4 16.4M550.3 262l16.5 0M550.3 262l-7.2 16.4M550.3 262l7.9 16.3M566.8 262l18.6 0M566.8 262l-8.6 16.3M566.8 262l8.8 16.6M585.4 262l19.9 0M585.4 262l-9.8 16.6M585.4 262l9.7 16.1M605.3 262l20.4 0M605.3 262l-10.3 16.1M605.3 262l10.2 16.6M625.7 262l19.9 0M625.7 262l-10.2 16.6M625.7 262l10 16.3M645.6 262l18.6 0M645.6 262l-9.9 16.3M645.6 262l9.6 16.2M664.2 262l16.5 0M664.2 262l-9 16.2M664.2 262l8.3 16.5M680.7 262l13.6 0M680.7 262l-8.2 16.5M680.7 262l7.2 16.7M694.4 262l10.2 0M694.4 262l-6.4 16.7M694.4 262l5.5 16.6M704.6 262l6.3 0M704.6 262l-4.7 16.6M704.6 262l3.6 16.1M710.9 262l2.1 0M710.9 262l-2.7 16.1M710.9 262l1.6 16.2M713 262l-0.5 16.2M518.5 278.4l4.3 0.3M518.5 278.4l-0.5 16.4M518.5 278.4l1.4 15.7M522.9 278.7l8.4 -0.1M522.9 278.7l-2.9 15.4M522.9 278.7l3.5 15.8M531.2 278.6l11.8 -0.2M531.2 278.6l-4.9 15.9M531.2 278.6l5.5 16.9M543 278.4l15.1 -0.1M543 278.4l-6.3 17.1M543 278.4l7 15.8M558.1 278.3l17.4 0.3M558.1 278.3l-8.1 15.9M558.1 278.3l8.7 15.6M575.6 278.6l19.5 -0.5M575.6 278.6l-8.7 15.3M575.6 278.6l9.6 15.9M595.1 278.1l20.4 0.5M595.1 278.1l-9.9 16.4M595.1 278.1l10.1 15.9M615.5 278.6l20.3 -0.2M615.5 278.6l-10.4 15.4M615.5 278.6l10.3 16.5M635.7 278.3l19.5 -0.1M635.7 278.3l-9.9 16.7M635.7 278.3l10.3 17.3M655.3 278.2l17.3 0.3M655.3 278.2l-9.2 17.5M655.3 278.2l8.8 16.9M672.5 278.5l15.4 0.2M672.5 278.5l-8.5 16.6M672.5 278.5l8.1 15.8M688 278.7l11.9 -0.1M688 278.7l-7.3 15.6M688 278.7l6.8 16.6M699.9 278.6l8.2 -0.5M699.9 278.6l-5.1 16.6M699.9 278.6l5 16.8M708.1 278.1l4.3 0.1M708.1 278.1l4.4 0.3M708.1 278.1l-3.2 17.3M708.1 278.1l2.9 16.1M712.5 278.2l0 0.2M712.5 278.4l-1.5 15.7M712.5 278.4l0.5 16.4M518 294.8l2 -0.7M518 294.8l0.4 15.5M520 294.1l6.4 0.4M520 294.1l-1.6 16.2M526.3 294.5l10.3 1M526.3 294.5l-7.9 15.8M526.3 294.5l-3.6 17.2M526.3 294.5l4.6 16.7M536.7 295.5l13.4 -1.3M536.7 295.5l-5.7 15.7M536.7 295.5l6.9 14.5M550.1 294.2l16.8 -0.3M550.1 294.2l-6.5 15.7M550.1 294.2l8.5 15.7M566.9 293.9l18.3 0.6M566.9 293.9l-8.3 16M566.9 293.9l8.3 17.9M585.2 294.5l19.9 -0.5M585.2 294.5l-10 17.4M585.2 294.5l10.6 16.5M605.1 294l20.7 1M605.1 294l-9.4 16.9M605.1 294l9.8 18.1M625.8 295l20.3 0.6M625.8 295l-10.9 17.1M625.8 295l9.3 14.8M646.1 295.6l18 -0.5M646.1 295.6l-10.9 14.2M646.1 295.6l8.4 14.2M664 295.1l16.6 -0.8M664 295.1l-9.5 14.7M664 295.1l9.5 15M680.7 294.3l14.1 0.9M680.7 294.3l-7.1 15.8M680.7 294.3l8.2 16.1M694.8 295.2l10.1 0.1M694.8 295.2l-5.9 15.1M694.8 295.2l4.9 16.2M704.9 295.4l6.1 -1.2M704.9 295.4l8.1 -0.6M704.9 295.4l-5.2 16.1M704.9 295.4l3.2 15.5M711 294.1l2 0.7M713 294.8l-4.9 16.1M713 294.8l-0.7 16.1M518.4 310.3l4.3 1.4M518.4 310.3l0.1 0.9M522.7 311.7l8.3 -0.5M522.7 311.7l-4.2 -0.5M522.7 311.7l-3 14.8M522.7 311.7l4.4 15M531 311.2l12.6 -1.3M531 311.2l-3.9 15.5M531 311.2l5.1 17.1M543.5 310l15.1 -0.1M543.5 310l-7.5 18.3M543.5 310l7.8 16.8M558.6 309.9l16.6 1.9M558.6 309.9l-7.2 16.9M558.6 309.9l7.7 18.6M575.2 311.8l20.6 -0.9M575.2 311.8l-8.9 16.6M575.2 311.8l11.3 16.2M595.7 310.9l19.2 1.2M595.7 310.9l-9.3 17.1M595.7 310.9l8.3 15.4M614.9 312.1l20.2 -2.3M614.9 312.1l-10.9 14.2M614.9 312.1l11.8 16.3M635.1 309.8l19.4 -0M635.1 309.8l-8.4 18.6M635.1 309.8l12 18.9M654.5 309.8l19 0.3M654.5 309.8l-7.4 18.9M654.5 309.8l9.5 16.3M673.5 310.1l15.3 0.3M673.5 310.1l-9.6 16M673.5 310.1l8.4 18.3M688.9 310.4l10.8 1.1M688.9 310.4l-7 18M688.9 310.4l5.7 17.9M699.7 311.4l8.4 -0.6M699.7 311.4l-5.1 16.9M699.7 311.4l4.7 15.5M708.1 310.9l4.3 0M708.1 310.9l4.4 0.3M708.1 310.9l-3.7 16.1M708.1 310.9l2.9 16.7M712.3 310.9l0.2 0.3M518.5 311.2l-0.5 16.4M518.5 311.2l1.2 15.3M712.5 311.2l-1.6 16.3M712.5 311.2l0.5 16.4M518 327.6l1.7 -1.1M518 327.6l9.1 -0.9M518 327.6l5.3 15.8M518 327.6l0.5 16.4M519.7 326.5l7.4 0.2M527.1 326.7l9 1.6M527.1 326.7l-3.8 16.7M536.1 328.3l15.3 -1.5M536.1 328.3l-12.8 15.1M536.1 328.3l-5.3 17.9M536.1 328.3l6.6 17.2M551.4 326.8l14.9 1.7M551.4 326.8l-8.7 18.7M551.4 326.8l5.1 17M566.3 328.5l20.2 -0.4M566.3 328.5l-9.8 15.3M566.3 328.5l9.6 17.1M586.5 328.1l17.6 -1.7M586.5 328.1l-10.6 17.5M586.5 328.1l10.6 14.2M604 326.3l22.7 2.1M604 326.3l-6.9 15.9M604 326.3l12.1 18.3M626.7 328.4l20.4 0.3M626.7 328.4l-10.6 16.2M626.7 328.4l7.3 17.3M647.1 328.7l16.9 -2.6M647.1 328.7l-13.1 17M647.1 328.7l8.3 17.6M664 326.1l17.9 2.2M664 326.1l-8.6 20.2M664 326.1l7.5 18M681.9 328.4l12.7 -0.1M681.9 328.4l-10.4 15.7M681.9 328.4l5.5 16.3M694.6 328.3l9.8 -1.3M694.6 328.3l-7.2 16.4M694.6 328.3l5.7 15.7M704.4 327l6.5 0.6M704.4 327l-4.2 17.1M704.4 327l3.6 17M710.9 327.5l2.1 0.1M710.9 327.5l-3 16.5M710.9 327.5l1.6 16.5M713 327.6l-0.5 16.4M518.6 346.2l4.7 -2.8M518.6 346.2l12.1 -0M518.6 346.2l-0.1 -2.2M518.6 346.2l-0.6 14.2M518.6 346.2l1.4 14M518.6 346.2l7.2 12.7M523.3 343.4l7.4 2.7M523.3 343.4l-4.8 0.6M530.7 346.2l11.9 -0.6M530.7 346.2l-4.9 12.7M530.7 346.2l7.5 13.1M542.7 345.5l13.8 -1.8M542.7 345.5l-4.4 13.7M542.7 345.5l9.3 15.5M556.5 343.8l19.4 1.8M556.5 343.8l-4.6 17.2M556.5 343.8l12.8 14.6M575.9 345.6l21.2 -3.3M575.9 345.6l-6.6 12.8M575.9 345.6l12 16.5M597.1 342.2l19 2.4M597.1 342.2l-9.1 19.8M597.1 342.2l8.6 19.4M616.1 344.7l18 1M616.1 344.7l-10.4 17M616.1 344.7l11 15.4M634 345.7l21.4 0.6M634 345.7l-7 14.4M634 345.7l12.4 13M655.4 346.3l16.1 -2.2M655.4 346.3l-9 12.4M655.4 346.3l6.3 15.1M671.5 344.1l15.8 0.6M671.5 344.1l-9.8 17.4M671.5 344.1l9.1 18.8M687.4 344.7l12.9 -0.7M687.4 344.7l-6.7 18.2M687.4 344.7l6.2 17.6M700.2 344.1l7.7 -0M700.2 344.1l-6.7 18.3M700.2 344.1l5.6 18.8M700.2 344.1l11.3 14.2M708 344l4.4 2M708 344l4.5 -0M708 344l3.5 14.3M712.4 346l0.1 -2M712.4 346l-0.9 12.3M712.4 346l0.6 14.4M518 360.4l2.1 -0.2M518 360.4l0.3 14.4M518 360.4l4.5 13.6M520.1 360.2l5.7 -1.4M520.1 360.2l2.4 13.8M525.8 358.9l12.4 0.4M525.8 358.9l-3.4 15.1M525.8 358.9l4 14.4M538.3 359.3l13.7 1.7M538.3 359.3l-8.5 14.1M538.3 359.3l6.9 16.5M551.9 361l17.4 -2.7M551.9 361l-6.8 14.8M551.9 361l7 15.5M569.3 358.3l18.6 3.7M569.3 358.3l-10.4 18.1M569.3 358.3l8.1 20.7M588 362.1l17.8 -0.4M588 362.1l-10.5 16.9M588 362.1l6.4 15M605.7 361.7l21.3 -1.6M605.7 361.7l-11.3 15.4M605.7 361.7l6.9 13.6M627.1 360.1l19.4 -1.4M627.1 360.1l-14.5 15.2M627.1 360.1l6.8 15.3M646.4 358.7l15.3 2.8M646.4 358.7l-12.6 16.7M646.4 358.7l7.6 18.6M661.7 361.5l18.9 1.4M661.7 361.5l-7.7 15.9M661.7 361.5l10.1 14.1M680.6 362.9l12.9 -0.5M680.6 362.9l-8.8 12.6M680.6 362.9l8.9 10.4M693.5 362.4l12.3 0.5M693.5 362.4l-4 10.9M693.5 362.4l4.6 11.2M705.8 362.9l5.7 -4.6M705.8 362.9l7.2 -2.5M705.8 362.9l-7.6 10.7M705.8 362.9l3.3 14.9M705.8 362.9l6.7 13.9M711.5 358.3l1.5 2.1M713 360.4l-0.5 16.4M518.3 374.8l4.2 -0.8M518.3 374.8l0.2 2M522.5 374l7.3 -0.7M522.5 374l-4 2.8M522.5 374l3.1 19.3M529.8 373.3l15.4 2.5M529.8 373.3l-4.2 20.1M529.8 373.3l7.7 22.4M545.1 375.8l13.8 0.7M545.1 375.8l-7.6 19.9M545.1 375.8l3.6 17.2M558.9 376.5l18.5 2.6M558.9 376.5l-10.2 16.5M558.9 376.5l4.5 15M577.5 379l16.9 -2M577.5 379l-14 12.4M577.5 379l9.3 21.4M594.4 377.1l18.2 -1.8M594.4 377.1l-7.6 23.4M594.4 377.1l6.6 20.1M612.6 375.2l21.2 0.2M612.6 375.2l-11.6 21.9M612.6 375.2l2.9 20.8M633.8 375.4l20.2 1.9M633.8 375.4l15.6 17.4M633.8 375.4l-18.3 20.6M633.8 375.4l-3.8 21.7M654 377.3l17.8 -1.8M654 377.3l-4.6 15.4M654 377.3l7.8 16.1M671.8 375.5l17.7 -2.3M671.8 375.5l-10 17.9M671.8 375.5l9.5 19.3M689.6 373.3l8.6 0.3M689.6 373.3l-8.2 21.5M689.6 373.3l5.7 16.1M698.1 373.6l10.9 4.2M698.1 373.6l-2.9 15.8M709 377.8l3.6 2.3M709 377.8l3.5 -1M709 377.8l-13.8 11.6M709 377.8l-4 18.9M709 377.8l4 15.4M712.6 380.1l-0.1 -3.3M712.6 380.1l0.4 13.1M518.5 376.8l-0.5 16.4M518.5 376.8l7.1 16.6M518 393.2l1.6 3.5M518 393.2l7.6 0.2M518 393.2l0.5 16.4M519.6 396.7l5.9 -3.3M519.6 396.7l11.1 16.5M519.6 396.7l-1.1 12.9M525.6 393.4l12 2.3M525.6 393.4l5.2 19.8M537.5 395.7l11.2 -2.7M537.5 395.7l-6.7 17.5M537.5 395.7l4.4 15.1M548.7 393l14.8 -1.6M548.7 393l-6.8 17.8M548.7 393l12 20.4M563.5 391.4l-2.7 21.9M563.5 391.4l9.8 14.5M563.5 391.4l23.3 9M649.4 392.8l12.3 0.7M649.4 392.8l-19.4 4.3M649.4 392.8l-5.2 7.7M649.4 392.8l8.3 13.1M661.8 393.5l19.5 1.4M661.8 393.5l-4 12.5M661.8 393.5l8.5 19.9M681.3 394.8l13.9 -5.4M681.3 394.8l7.4 12.6M681.3 394.8l-11.1 18.6M695.2 389.4l9.8 7.3M695.2 389.4l-6.5 18.1M705 396.7l6.1 0.4M705 396.7l8 -3.5M705 396.7l-16.3 10.7M705 396.7l-3.3 10.9M705 396.7l2 11.5M711.2 397.2l1.8 -4M711.2 397.2l-4.1 11M711.2 397.2l1.7 9.2M713 393.2l-0.1 13.2M518.5 412.5l3.2 0.8M518.5 412.5l-0 -2.9M518.5 412.5l-0.5 13.5M521.7 413.3l9 -0.2M521.7 413.3l-3.2 -3.7M521.7 413.3l-3.7 12.7M521.7 413.3l4.1 16.1M530.8 413.2l11.1 -2.4M530.8 413.2l-12.3 -3.6M530.8 413.2l-5 16.3M530.8 413.2l9.1 20.4M530.8 413.2l18.7 9.5M541.9 410.8l7.6 11.9M541.9 410.8l18.8 2.6M688.7 407.5l13 0.1M688.7 407.5l-18.4 5.9M688.7 407.5l-7.2 15.2M701.7 407.6l5.3 0.6M701.7 407.6l3.9 23M701.7 407.6l-20.2 15.1M701.7 407.6l-10.6 26M707.1 408.2l5.8 -1.8M707.1 408.2l5.4 1.4M707.1 408.2l-1.5 22.4M707.1 408.2l5.9 17.8M712.9 406.4l-0.4 3.2M712.5 409.6l0.5 16.4M518 426l1.7 4.3M518 426l7.8 3.4M518 426l0.5 16.4M519.7 430.3l6.1 -0.8M519.7 430.3l3.4 7.9M519.7 430.3l-1.2 12.1M525.8 429.4l-2.8 8.8M525.8 429.4l14 4.1M705.6 430.6l5.9 -0.2M705.6 430.6l7.4 -4.6M705.6 430.6l1.3 8.9M705.6 430.6l-14.4 3M711.5 430.4l1.5 -4.4M711.5 430.4l-4.6 9.1M711.5 430.4l0.6 11.8M711.5 430.4l1 12M713 426l-0.5 16.4M518.7 444.7l4.4 -6.5M518.7 444.7l-0.2 -2.3M518.7 444.7l-0.7 14.1M518.7 444.7l7.3 14.4M518.7 444.7l13.3 1.1M523 438.2l-4.5 4.2M523 438.2l8.9 7.6M523 438.2l16.8 -4.7M706.9 439.5l5.3 2.7M706.9 439.5l-15.7 -5.9M706.9 439.5l-7.9 6.3M712.2 442.2l0.3 0.2M712.2 442.2l-13.1 3.6M712.2 442.2l-7.2 16.9M712.5 442.4l0.5 16.4M712.5 442.4l-7.5 16.7M518 458.8l0.5 16.4M518 458.8l4.2 14.4M518 458.8l8 0.3M711.9 459.7l1.1 -0.9M711.9 459.7l0.6 14.6M711.9 459.7l-6.9 -0.5M711.9 459.7l-3 13.5M713 458.8l-0.6 15.5M713 458.8l-8 0.3M518.8 477.2l-0.3 -2M518.8 477.2l3.4 -4M518.8 477.2l-0.3 14.8M518.8 477.2l11.8 7.9M712.4 474.3l0.1 0.9M712.4 474.3l-3.6 -1.1M518.5 475.2l3.7 -2M518.5 475.2l0 16.8M712.5 475.2l-3.7 -2M712.5 475.2l0 18.8M712.5 475.2l-11.9 13.5M522.2 473.2l3.8 -14.1M522.2 473.2l18.1 2.5M522.2 473.2l8.4 11.8M526 459.1l5.9 -13.3M526 459.1l14.2 16.5M526 459.1l16.5 4.1M531.9 445.8l7.9 -12.3M531.9 445.8l19.9 3M531.9 445.8l10.6 17.4M539.8 433.6l9.7 -10.9M539.8 433.6l12 15.3M539.8 433.6l16 0.1M549.5 422.7l11.2 -9.3M549.5 422.7l18.4 3.5M549.5 422.7l6.3 11M560.7 413.4l12.5 -7.5M560.7 413.4l7.2 12.8M560.7 413.4l18.2 4.9M573.3 405.9l13.5 -5.5M573.3 405.9l5.6 12.4M586.8 400.4l14.2 -3.3M586.8 400.4l-7.9 17.9M586.8 400.4l5 12.8M601 397.1l14.5 -1.1M601 397.1l4.4 18.2M601 397.1l17.1 11.5M601 397.1l-9.2 16.2M615.5 396l14.5 1.1M615.5 396l2.6 12.6M630 397.1l14.2 3.3M630 397.1l-11.9 11.5M630 397.1l5.1 12.4M644.2 400.4l13.5 5.5M644.2 400.4l4.2 20.9M644.2 400.4l-9.1 9.1M657.7 405.9l12.5 7.5M657.7 405.9l-9.3 15.5M670.3 413.4l11.2 9.3M670.3 413.4l-21.8 8M670.3 413.4l-0.9 12.7M681.5 422.7l9.7 10.9M681.5 422.7l-5.7 21.2M681.5 422.7l-12.1 3.4M691.2 433.6l7.9 12.3M691.2 433.6l-15.3 10.3M699.1 445.8l5.9 13.3M699.1 445.8l-12 13.7M699.1 445.8l-23.2 -1.9M705 459.1l3.8 14.1M705 459.1l-17.9 0.4M705 459.1l-9.9 16.8M708.8 473.2l-13.7 2.8M708.8 473.2l-8.2 15.5M518.5 492l3 13.7M518.5 492l12.1 -7M521.5 505.7l3 13.7M521.5 505.7l14.2 2.2M521.5 505.7l9.1 -20.6M524.5 519.3l3 13.7M524.5 519.3l17 0.7M524.5 519.3l11.2 -11.5M527.5 533l0 16.4M527.5 533l14 -13M527.5 533l12.8 4.5M527.5 549.4l0 0.1M527.5 549.4l17.5 0.1M527.5 549.4l12.8 -11.9M527.5 565.8l0 16.4M527.5 565.8l0 -16.3M527.5 565.8l13.5 2M527.5 582.2l0 16.4M527.5 582.2l13.5 -14.4M527.5 582.2l15.2 -0.9M527.5 598.6l0 16.4M527.5 598.6l20.7 -4.6M527.5 598.6l15.2 -17.3M527.5 598.6l16 12.3M527.5 614.9l0 16.4M527.5 614.9l20.3 8.6M527.5 614.9l16 -4.1M527.5 631.3l0 16.4M527.5 631.3l13.3 6.8M527.5 631.3l20.3 -7.8M527.5 647.7l0 16.4M527.5 647.7l13.3 -9.6M527.5 647.7l14.9 6.4M527.5 664.1l0 16.4M527.5 664.1l11.6 3.5M527.5 664.1l14.9 -10M527.5 680.5l11.2 0M527.5 680.5l11.6 -12.8M712.5 494l-3.3 13M712.5 494l-11.9 -5.3M709.2 507l-3.3 13M709.2 507l-19.6 -12.1M709.2 507l-14.5 4.9M709.2 507l-8.6 -18.3M705.8 520l-3.3 13M705.8 520l-16.5 9.5M705.8 520l-11.1 -8.1M702.5 533l0 14.8M702.5 533l-13.2 -3.5M702.5 547.8l-17.5 1.8M702.5 547.8l0 1.8M702.5 547.8l-13.2 -18.3M702.5 562.5l0 14.8M702.5 562.5l-17.5 -13M702.5 562.5l0 -13M702.5 562.5l-16.7 15.6M702.5 562.5l-23.1 0.4M702.5 577.2l0 14.8M702.5 577.2l-16.7 0.9M702.5 592l0 14.8M702.5 592l-16.7 -13.9M702.5 592l-13.5 3.3M702.5 606.8l0 14.8M702.5 606.8l-13.5 -11.4M702.5 606.8l-10.7 5M702.5 621.5l0 14.8M702.5 621.5l-6.6 8.2M702.5 621.5l-10.7 -9.7M702.5 621.5l-9.5 -1.1M702.5 636.2l0 14.8M702.5 636.2l-6.6 -6.5M702.5 636.2l-1.3 6.6M702.5 636.2l-6.4 0.3M702.5 651l0 14.8M702.5 651l-3.2 5.6M702.5 651l-1.3 -8.2M702.5 651l-6.7 2.8M702.5 651l-0.3 7.9M702.5 651l-4.3 -1.7M702.5 665.8l0 14.8M702.5 665.8l-0.6 5M702.5 665.8l-3.2 -0.2M702.5 665.8l-3.4 3.8M702.5 665.8l-0.7 -3.3M702.5 665.8l-0.5 7.6M702.5 665.8l-0.3 -6.8M702.5 680.5l-1 0M702.5 680.5l-1.4 -3.6M702.5 680.5l-0.5 -7.2M527.5 549.5l17.5 0M527.5 549.5l13.5 18.3M545 549.5l17.5 0M545 549.5l16.2 20.9M545 549.5l-4 18.3M545 549.5l-4.7 -12M545 549.5l9.6 -10.3M562.5 549.5l17.5 0M562.5 549.5l-1.3 20.9M562.5 549.5l11.9 -13.6M562.5 549.5l9.4 10.9M562.5 549.5l-7.9 -10.3M580 549.5l17.5 0M580 549.5l-5.6 -13.6M580 549.5l7.4 15.7M580 549.5l-8.1 10.9M580 549.5l9.9 -12.3M597.5 549.5l17.5 0M597.5 549.5l5.8 -12.9M597.5 549.5l-10.1 15.7M597.5 549.5l5.7 12.4M597.5 549.5l-7.6 -12.3M615 549.5l17.5 0M615 549.5l-11.7 -12.9M615 549.5l14 -18.7M615 549.5l5.8 14.9M615 549.5l-11.8 12.4M615 549.5l0 -17.5M632.5 549.5l17.5 0M632.5 549.5l8.7 -9.5M632.5 549.5l-3.5 -18.7M632.5 549.5l-11.7 14.9M632.5 549.5l12.9 12.8M632.5 549.5l1.2 20.1M650 549.5l17.5 0M650 549.5l-8.8 -9.5M650 549.5l9.3 16.8M650 549.5l13.1 -17.6M650 549.5l-4.6 12.8M650 549.5l-2.9 -20.7M667.5 549.5l17.5 0M667.5 549.5l8.6 -16M667.5 549.5l-8.2 16.8M667.5 549.5l-4.4 -17.6M667.5 549.5l11.9 13.4M685 549.5l17.5 0M685 549.5l-8.9 -16M685 549.5l4.3 -20M685 549.5l-5.6 13.4M538.7 680.5l10 0M538.7 680.5l0.4 -12.8M538.7 680.5l8.3 -8.5M548.7 680.5l8.9 0M548.7 680.5l-1.7 -8.5M557.6 680.5l7.9 0M557.6 680.5l-0.4 -11.7M557.6 680.5l5.6 -6.7M557.6 680.5l-10.6 -8.5M565.5 680.5l7 0M565.5 680.5l7.1 -7.3M565.5 680.5l-2.3 -6.7M572.5 680.5l6.3 0M572.5 680.5l0 -7.3M578.8 680.5l5.6 0M578.8 680.5l-6.3 -7.3M578.8 680.5l2.2 -8.9M578.8 680.5l6.8 -4.9M584.4 680.5l5 0M584.4 680.5l1.2 -4.9M589.4 680.5l4.4 0M589.4 680.5l-3.8 -4.9M589.4 680.5l2.7 -5.6M593.8 680.5l4 0M593.8 680.5l4.2 -5.4M593.8 680.5l-1.8 -5.6M597.8 680.5l3.5 0M597.8 680.5l0.2 -5.4M597.8 680.5l2.4 -3.1M601.3 680.5l3.1 0M601.3 680.5l-1.1 -3.1M601.3 680.5l1.9 -3.2M604.4 680.5l2.8 0M604.4 680.5l-1.3 -3.2M604.4 680.5l1.9 -2.3M607.2 680.5l2.5 0M607.2 680.5l-0.9 -2.3M607.2 680.5l2.6 -3.1M609.7 680.5l2.2 0M609.7 680.5l2.6 -2.2M609.7 680.5l0.1 -3.1M611.9 680.5l2.2 0M611.9 680.5l0.3 -2.2M614.1 680.5l2.2 0M614.1 680.5l2.8 -3.1M614.1 680.5l-1.8 -2.2M616.3 680.5l2.2 0M616.3 680.5l0.6 -3.1M618.5 680.5l2.2 0M618.5 680.5l0.5 -3M618.5 680.5l-1.6 -3.1M620.7 680.5l2.2 0M620.7 680.5l-1.7 -3M620.7 680.5l0.8 -2.8M622.9 680.5l2.2 0M622.9 680.5l1.2 -2.7M622.9 680.5l-1.4 -2.8M625 680.5l2.2 0M625 680.5l-1 -2.7M627.2 680.5l2.2 0M627.2 680.5l-1.6 -4.1M627.2 680.5l-3.2 -2.7M627.2 680.5l1.3 -3.2M629.4 680.5l2.2 0M629.4 680.5l2.4 -3.8M629.4 680.5l-0.9 -3.2M631.6 680.5l2.2 0M631.6 680.5l0.2 -3.8M631.6 680.5l3 -2.3M633.8 680.5l2.2 0M633.8 680.5l0.8 -2.3M636 680.5l2.2 0M636 680.5l1.9 -2.4M636 680.5l-1.3 -2.3M638.2 680.5l2.2 0M638.2 680.5l-0.3 -2.4M638.2 680.5l1.8 -2.9M640.3 680.5l2.2 0M640.3 680.5l-0.3 -2.9M642.5 680.5l2.2 0M642.5 680.5l-2.5 -2.9M642.5 680.5l1.5 -4.4M642.5 680.5l2.4 -2.1M644.7 680.5l2.2 0M644.7 680.5l0.2 -2.1M646.9 680.5l2.2 0M646.9 680.5l0.4 -3M646.9 680.5l-2 -2.1M649.1 680.5l2.2 0M649.1 680.5l-1.8 -3M649.1 680.5l1.1 -3.3M651.3 680.5l2.2 0M651.3 680.5l1.1 -2.1M651.3 680.5l-1.1 -3.3M653.4 680.5l2.2 0M653.4 680.5l-1.1 -2.1M655.6 680.5l2.2 0M655.6 680.5l-3.3 -2.1M655.6 680.5l-2.4 -4.2M655.6 680.5l2 -2.4M657.8 680.5l2.2 0M657.8 680.5l-0.2 -2.4M660 680.5l2.2 0M660 680.5l2 -3.4M660 680.5l-0.3 -3.7M660 680.5l-2.4 -2.4M662.2 680.5l2.2 0M662.2 680.5l-0.2 -3.4M664.4 680.5l2.2 0M664.4 680.5l-0.4 -4.1M664.4 680.5l2.2 -3.2M664.4 680.5l-2.4 -3.4M666.6 680.5l2.2 0M666.6 680.5l0 -3.2M668.7 680.5l2.2 0M668.7 680.5l0.1 -3.9M668.7 680.5l-2.2 -3.2M668.7 680.5l2.2 -2.9M670.9 680.5l2.2 0M670.9 680.5l0.1 -2.9M673.1 680.5l2.2 0M673.1 680.5l-2.1 -2.9M673.1 680.5l0.3 -2.7M675.3 680.5l2.2 0M675.3 680.5l-1.8 -2.7M675.3 680.5l1 -2.4M677.5 680.5l2.2 0M677.5 680.5l1.6 -4.2M677.5 680.5l-1.2 -2.4M679.7 680.5l2.2 0M679.7 680.5l-0.6 -4.2M679.7 680.5l2.8 -2.3M681.9 680.5l2.2 0M681.9 680.5l0.6 -2.3M684 680.5l2.2 0M684 680.5l-1.6 -2.3M684 680.5l1 -3.7M686.2 680.5l2.2 0M686.2 680.5l2.1 -4.2M686.2 680.5l-1.2 -3.7M688.4 680.5l2.2 0M688.4 680.5l-0 -4.2M688.4 680.5l1.3 -2.1M690.6 680.5l2.2 0M690.6 680.5l1.8 -2.1M690.6 680.5l-0.9 -2.1M692.8 680.5l2.2 0M692.8 680.5l-0.4 -2.1M692.8 680.5l1.8 -2.6M695 680.5l2.2 0M695 680.5l-0.4 -2.6M697.1 680.5l2.2 0M697.1 680.5l-1.3 -4.3M697.1 680.5l1.9 -2.4M697.1 680.5l-2.6 -2.6M699.3 680.5l2.2 0M699.3 680.5l-0.3 -2.4M701.5 680.5l-0.4 -3.6M701.5 680.5l-2.5 -2.4M540.8 638.1l7.1 -14.5M540.8 638.1l1.6 16M540.8 638.1l16.2 0.6M540.8 638.1l13.1 10.1M682.5 648.4l5.7 2.7M682.5 648.4l-1.6 -5M682.5 648.4l-2.8 3.7M682.5 648.4l6.6 -1.8M682.5 648.4l3.5 -5.8M682.5 648.4l4.1 5.8M682.5 648.4l-5.2 -0.2M591 623.4l8.8 -5.4M591 623.4l-3.9 -14.9M591 623.4l-9 4.6M591 623.4l8.4 4.9M591 623.4l-2.4 10.6M591 623.4l-9.5 -6.6M687.1 459.5l-4.5 18.5M687.1 459.5l-11.2 -15.6M687.1 459.5l8 16.5M687.1 459.5l-11.9 4.4M687.6 627.1l-5.9 3.9M687.6 627.1l8.3 2.7M687.6 627.1l5.4 -6.6M687.6 627.1l-4.8 -6.2M687.6 627.1l1.5 9.5M571.8 615.2l-8.4 12.1M571.8 615.2l10.2 12.8M571.8 615.2l-11.2 -1.6M571.8 615.2l5 -13.5M571.8 615.2l9.7 1.6M571.8 615.2l1.1 16M589.5 598.2l-2.4 10.3M589.5 598.2l8.3 6.5M589.5 598.2l-12.6 3.5M589.5 598.2l10.4 -8.7M589.5 598.2l-9.8 -9.7M659.9 582.8l-22.8 0.3M659.9 582.8l13.4 9.9M659.9 582.8l-0.6 -16.5M659.9 582.8l-9.9 6.9M659.9 582.8l0.4 15.2M659.9 582.8l-14.6 -20.6M659.9 582.8l11.7 -8.5M655.5 658.7l-2.4 -5.6M655.5 658.7l-4.7 -1.3M655.5 658.7l0.9 2.6M655.5 658.7l-1.6 4.2M655.5 658.7l3.1 -1.9M686.1 657.9l-4 -0.9M686.1 657.9l3.9 -2.1M686.1 657.9l0.5 3.7M686.1 657.9l4.3 1.1M686.1 657.9l0.4 -3.7M686.1 657.9l-3.5 2M540.2 475.6l17.4 -14M540.2 475.6l1.7 17.5M540.2 475.6l2.3 -12.4M540.2 475.6l17.1 9.6M540.2 475.6l-9.7 9.4M606.2 487.6l16.8 10.2M606.2 487.6l4.4 15.7M606.2 487.6l13.3 -11.2M606.2 487.6l-1.3 -18.9M606.2 487.6l-7.6 11.7M606.2 487.6l-9.4 -8.5M641.2 540l-12.2 -9.2M641.2 540l5.9 -11.2M570.6 470.8l-0.8 15.7M570.6 470.8l20.8 -5.8M570.6 470.8l-13 -9.2M570.6 470.8l13.4 5.6M570.6 470.8l-0.6 -13.7M570.6 470.8l-13.3 14.5M682.6 478l7 16.9M682.6 478l-19.4 -6.7M682.6 478l12.5 -2.1M682.6 478l-8.7 13.4M682.6 478l-7.4 -14.1M605.4 415.3l12.7 -6.8M605.4 415.3l-7.7 15.3M605.4 415.3l13 6.4M605.4 415.3l-13.6 -2M630.9 595.3l6.3 -12.2M630.9 595.3l-1.9 17.3M630.9 595.3l8.4 15.1M630.9 595.3l-13.3 -13M630.9 595.3l-8.4 8.3M630.9 595.3l15.1 4.7M615.8 451.7l18.1 -0.4M615.8 451.7l3.7 24.7M615.8 451.7l13.7 15.6M615.8 451.7l-5.2 -13.3M615.8 451.7l-11 17M615.8 451.7l-13.1 4M615.8 451.7l7.3 -10.8M663 621.5l10.2 -10.2M663 621.5l0.5 -13.6M663 621.5l-12.9 -2.4M663 621.5l-9.7 -12.8M663 621.5l9.7 2.3M663 621.5l1 8M663 621.5l-6.4 8.1M637.1 583.1l12.9 6.7M637.1 583.1l8.3 -20.8M637.1 583.1l-19.5 -0.8M637.1 583.1l8.9 17M637.1 583.1l-3.4 -13.5M603 645.2l-8.4 2.6M603 645.2l0.2 9M603 645.2l5.3 7.6M603 645.2l-6.6 -8.9M603 645.2l5.2 0.6M603 645.2l-3.5 5.3M603 645.2l-0.5 -7.4M603 645.2l-11.2 -3.5M569.9 486.4l14.1 -10.1M569.9 486.4l1 14.9M569.9 486.4l15.2 13.3M569.9 486.4l-15.6 12.5M569.9 486.4l-12.6 -1.1M666.6 661.9l-0.3 -4.8M666.6 661.9l-4 0.3M666.6 661.9l3.8 -2.7M666.6 661.9l4.4 0.4M666.6 661.9l1 2.5M666.6 661.9l-1.5 2.7M666.6 661.9l-2.2 -2.1M673.3 592.7l4.8 9.5M673.3 592.7l12.5 -14.6M673.3 592.7l-13 5.3M673.3 592.7l-9.8 15.2M673.3 592.7l15.7 2.6M673.3 592.7l-1.7 -18.4M561.7 652.7l4.7 8.4M561.7 652.7l-9.9 7.4M561.7 652.7l10.4 3.8M561.7 652.7l6 -12.9M561.7 652.7l-4.8 -14M561.7 652.7l-7.9 -4.6M561.7 652.7l7.5 -3.7M603.3 536.6l-4.3 -20M603.3 536.6l-13.4 0.6M603.3 536.6l11.8 -4.6M689.5 494.9l-9.6 16.9M689.5 494.9l5.5 -18.9M689.5 494.9l5.2 17M689.5 494.9l-15.7 -3.5M689.5 494.9l11.1 -6.2M566.5 591.4l-5.3 -21M566.5 591.4l-18.2 2.6M566.5 591.4l-5.8 22.2M566.5 591.4l8 -15.8M566.5 591.4l-23.8 -10.2M566.5 591.4l10.4 10.3M566.5 591.4l13.2 -2.9M676.1 533.5l-13 -1.7M676.1 533.5l13.2 -4.1M676.1 533.5l3.8 -21.7M676.1 533.5l-16 -14.4M623 652.9l4.6 -2.8M623 652.9l0.6 5.9M623 652.9l-4.2 -2.2M623 652.9l5.5 2.3M623 652.9l0.1 -5.3M623 652.9l-2.3 3.8M561.2 570.4l-20.2 -2.6M561.2 570.4l13.2 5.2M561.2 570.4l-18.5 10.8M561.2 570.4l10.7 -10M591.5 464.9l2.8 -21.1M591.5 464.9l-7.5 11.4M591.5 464.9l-11 -21.9M591.5 464.9l-21.4 -7.9M591.5 464.9l13.4 3.8M591.5 464.9l5.3 14.2M591.5 464.9l11.3 -9.3M648.9 511.7l18.5 -3M648.9 511.7l-16.7 -4.1M648.9 511.7l-4.6 -12.4M648.9 511.7l-1.8 17.1M648.9 511.7l8.9 -11.5M648.9 511.7l-11.6 8M648.9 511.7l11.2 7.5M659.3 566.3l20.1 -3.4M659.3 566.3l-13.9 -4M659.3 566.3l12.3 8M577.2 651.1l-5.1 5.5M577.2 651.1l7.1 -4.2M577.2 651.1l-1.4 -8.6M577.2 651.1l-8 -2M577.2 651.1l5.7 3.4M577.2 651.1l1.3 8.2M667.4 508.7l12.5 3.1M667.4 508.7l6.5 -17.3M667.4 508.7l-9.6 -8.5M667.4 508.7l-7.3 10.4M557.7 461.6l-5.8 -12.8M557.7 461.6l12.4 -4.5M557.7 461.6l-15.1 1.6M557.7 461.6l-0.3 23.7M557.7 461.6l6.5 -16.8M674.5 641.3l8.9 -4M674.5 641.3l-8.6 2.6M674.5 641.3l-7 -5.9M674.5 641.3l6.3 2.2M674.5 641.3l-4.7 5.9M674.5 641.3l-1.6 -9.7M674.5 641.3l2.8 6.9M629 530.8l-8.7 -12.1M629 530.8l18.1 -2M629 530.8l8.3 -11.1M629 530.8l-14 1.2M663.1 531.9l-16.1 -3.1M663.1 531.9l-3 -12.7M628 636l7 7.7M628 636l8.5 -0.2M628 636l3.6 -8.7M628 636l-3.1 6.3M628 636l-5.2 -5.5M628 636l-7 0.7M628 636l2.4 8.9M583.2 526.2l-8.8 9.7M583.2 526.2l15.7 -9.5M583.2 526.2l3.1 -13.5M583.2 526.2l-12.4 -7.2M583.2 526.2l6.6 11M631.4 422.8l-13.3 -14.2M631.4 422.8l17 -1.4M631.4 422.8l-13 -1.1M631.4 422.8l3.4 13M631.4 422.8l3.7 -13.3M631.4 422.8l-8.2 18.1M594.6 647.9l0.4 7M594.6 647.9l-5.9 4.5M594.6 647.9l-10.3 -1M594.6 647.9l4.9 2.6M594.6 647.9l-2.8 -6.2M541.9 493.2l12.4 5.7M541.9 493.2l15.4 -7.9M541.9 493.2l-6.2 14.7M541.9 493.2l-11.3 -8.1M551.9 448.8l-9.3 14.4M551.9 448.8l12.3 -4M551.9 448.8l3.9 -15.1M566.4 661.1l-14.6 -0.9M566.4 661.1l5.7 -4.5M566.4 661.1l-9.3 7.6M566.4 661.1l8.2 2.8M566.4 661.1l1.6 6.7M599.8 618l-12.7 -9.5M599.8 618l-0.4 10.4M599.8 618l13.1 -7.9M599.8 618l-2 -13.3M599.8 618l12.3 2.1M539.1 667.7l12.7 -7.5M539.1 667.7l3.3 -13.6M539.1 667.7l7.9 4.3M594.2 443.9l-13.8 -0.8M594.2 443.9l16.4 -5.5M594.2 443.9l3.4 -13.2M594.2 443.9l8.5 11.8M594.2 443.9l-10.6 -13.3M666.3 454.8l-16.6 -1.5M666.3 454.8l-16 13M666.3 454.8l9.6 -10.9M666.3 454.8l-3.1 16.5M666.3 454.8l-3.2 -14.6M666.3 454.8l8.9 9.1M662.2 656.8l4.1 0.3M662.2 656.8l2.9 -5.2M662.2 656.8l-4.3 -4.1M662.2 656.8l-1.4 2.7M662.2 656.8l2.2 3M662.2 656.8l-3.6 0M574.4 535.9l-15.5 -8.6M574.4 535.9l-3.6 -16.9M574.4 535.9l15.5 1.3M574.4 535.9l-19.9 3.3M678.1 602.2l-5 9.2M678.1 602.2l-14.6 5.7M678.1 602.2l10.9 -6.9M678.1 602.2l4.5 8.5M673.4 650l2.2 4M673.4 650l-4.4 3.9M673.4 650l-3.6 -2.8M673.4 650l3.9 -1.8M628.9 612.6l10.3 -2.2M628.9 612.6l-8.1 4.4M628.9 612.6l-6.5 -8.9M628.9 612.6l4.9 6.4M572.5 673.2l-9.4 0.7M572.5 673.2l2.1 -9.2M572.5 673.2l8.5 -1.5M572.5 673.2l-4.5 -5.3M623 497.8l-12.4 5.5M623 497.8l9.2 9.8M623 497.8l13.3 -13.5M623 497.8l-3.4 -21.5M623 497.8l-2.7 20.8M623 497.8l21.3 1.5M635.1 643.7l1.4 -7.9M635.1 643.7l4.9 -0.5M635.1 643.7l2.1 4.8M635.1 643.7l-4.6 1.2M618.1 408.6l0.3 13.1M618.1 408.6l17 0.9M584 476.4l1.1 23.3M584 476.4l12.8 2.7M642.8 637.5l-6.3 -1.7M642.8 637.5l8.9 -3M642.8 637.5l6.5 3.6M642.8 637.5l-0.5 -7.5M642.8 637.5l-2.9 5.7M611.5 599.7l1.5 10.3M611.5 599.7l6.1 -17.4M611.5 599.7l-13.7 5M611.5 599.7l11 3.9M611.5 599.7l-11.6 -10.2M606.2 667.1l1 -5.7M606.2 667.1l-5.3 0.3M606.2 667.1l3.4 2M606.2 667.1l-2.9 -3M606.2 667.1l-0.5 3.6M606.2 667.1l3.1 -1.2M563.4 627.3l-15.6 -3.8M563.4 627.3l-2.8 -13.7M563.4 627.3l4.3 12.5M563.4 627.3l-6.5 11.4M563.4 627.3l9.5 3.9M636.7 656.3l-2.6 5.2M636.7 656.3l4.1 2.3M636.7 656.3l-2.7 -4.9M636.7 656.3l1.1 5.3M636.7 656.3l-4.6 -1M636.7 656.3l3.9 -2.7M636.7 656.3l-3.8 2.6M634 451.2l15.7 2.1M634 451.2l16.3 16.5M634 451.2l-4.4 16.1M634 451.2l0.8 -15.5M634 451.2l-10.8 -10.3M587.1 608.5l10.7 -3.8M587.1 608.5l-10.2 -6.8M587.1 608.5l-5.6 8.3M580.5 443.1l-12.6 -16.9M580.5 443.1l-10.4 14M580.5 443.1l-16.3 1.7M580.5 443.1l3.2 -12.5M610.6 503.3l-11.6 13.4M610.6 503.3l9.7 15.3M610.6 503.3l-12 -3.9M632.2 507.7l-11.9 11M632.2 507.7l12.1 -8.3M632.2 507.7l5.2 12.1M651.9 434.5l-2.2 18.8M651.9 434.5l-3.4 -13.1M651.9 434.5l17.5 -8.5M651.9 434.5l-17.1 1.3M651.9 434.5l11.2 5.8M567.9 426.2l11 -7.9M567.9 426.2l-3.7 18.7M567.9 426.2l-12.1 7.5M567.9 426.2l15.7 4.4M582.1 628l6.6 6M582.1 628l-1.3 7.7M582.1 628l-0.5 -11.2M582.1 628l-9.1 3.2M636.2 484.3l23.7 2.9M636.2 484.3l-16.7 -7.9M636.2 484.3l14 -16.5M636.2 484.3l-6.7 -17M636.2 484.3l8 15.1M599 516.7l21.3 2M599 516.7l-12.6 -4M599 516.7l-0.4 -17.3M599 516.7l-9.1 20.5M599 516.7l16.1 15.3M634.2 661.5l3.7 0.1M634.2 661.5l-1.8 3.1M634.2 661.5l1.2 4.2M634.2 661.5l3.6 3.4M634.2 661.5l-2.9 -0.2M634.2 661.5l-1.2 -2.6M639.3 610.4l10.8 8.7M639.3 610.4l2.2 13.1M639.3 610.4l14 -1.6M639.3 610.4l6.7 -10.3M639.3 610.4l-5.4 8.6M650 589.8l10.3 8.3M650 589.8l-4 10.3M603.2 654.3l-8.2 0.6M603.2 654.3l5.1 -1.5M603.2 654.3l-4.8 5.6M603.2 654.3l-3.8 -3.8M603.2 654.3l-0.1 4.7M603.2 654.3l3.7 3.1M595 654.9l-6.3 -2.5M595 654.9l3.4 4.9M595 654.9l4.5 -4.4M595 654.9l-6.1 2.8M685.8 578.1l-6.4 -15.2M685.8 578.1l3.3 17.2M685.8 578.1l-14.1 -3.8M673.2 611.4l-9.6 -3.5M673.2 611.4l-0.5 12.4M673.2 611.4l9.7 9.5M673.2 611.4l9.5 -0.6M620.8 617l-7.6 11.2M620.8 617l-7.9 -6.9M620.8 617l10.9 10.3M620.8 617l2 13.6M620.8 617l1.6 -13.3M620.8 617l-8.6 3.1M620.8 617l13 2M659.9 487.2l-9.6 -19.4M659.9 487.2l3.3 -15.9M659.9 487.2l-15.6 12.2M659.9 487.2l13.9 4.3M659.9 487.2l-2.1 13.1M541.5 520l17.4 7.2M541.5 520l19.3 -9.5M541.5 520l12.7 -21.1M541.5 520l-5.8 -12.2M541.5 520l-1.2 17.5M619.5 476.4l10 -9.1M619.5 476.4l-14.6 -7.7M649.7 453.3l0.6 14.5M649.7 453.3l-15 -17.6M649.7 453.3l13.4 -13.1M692.5 641.6l1.6 6M692.5 641.6l8.7 1.3M692.5 641.6l-3.5 5M692.5 641.6l-6.6 1M692.5 641.6l-3.4 -5M692.5 641.6l3.6 -5M650.3 467.8l-20.7 -0.5M650.3 467.8l12.9 3.5M547.8 623.5l12.8 -9.9M547.8 623.5l9.1 15.1M547.8 623.5l-4.3 -12.7M660.3 598.1l3.2 9.8M660.3 598.1l-7 10.7M660.3 598.1l-14.3 2M688.2 651l1.8 4.7M688.2 651l0.8 -4.4M688.2 651l-1.7 3.1M688.2 651l3.7 1.3M648.4 421.4l20.9 4.6M648.4 421.4l-13.7 14.4M648.4 421.4l-13.3 -11.9M551.8 660.2l-9.4 -6.1M551.8 660.2l5.3 8.6M551.8 660.2l2 -12M551.8 660.2l-4.8 11.8M663.5 607.9l-10.3 0.8M559 527.3l1.8 -16.7M559 527.3l-18.6 10.3M559 527.3l11.9 -8.3M559 527.3l-4.4 11.9M570.9 501.3l14.2 -1.6M570.9 501.3l-10.1 9.3M570.9 501.3l-16.6 -2.4M570.9 501.3l15.4 11.4M570.9 501.3l-0 17.7M585.1 499.7l1.2 13M585.1 499.7l13.4 -0.4M585.1 499.7l11.7 -20.6M598 675.1l2.7 -3.8M598 675.1l-2.3 -3.5M598 675.1l5.2 -1.6M598 675.1l2.2 2.3M598 675.1l-5.9 -0.2M588.6 652.4l-4.3 -5.5M588.6 652.4l0.2 5.3M588.6 652.4l-5.8 2.1M587.4 565.2l11.5 11.4M587.4 565.2l-13 10.4M587.4 565.2l15.8 -3.3M587.4 565.2l-15.5 -4.8M584.8 661.2l5.8 4.1M584.8 661.2l-3.2 4.9M584.8 661.2l4 -3.4M584.8 661.2l-2 -6.7M584.8 661.2l-6.4 -1.9M689.3 529.5l-9.4 -17.6M689.3 529.5l5.4 -17.5M675.8 443.9l-6.5 -17.9M675.8 443.9l-12.7 -3.7M675.8 443.9l-0.6 20.1M613.2 628.1l-13.8 0.2M613.2 628.1l9.6 2.4M613.2 628.1l-4.8 7.4M613.2 628.1l7.8 8.6M613.2 628.1l-1 -8M613.2 628.1l3.3 12.1M599.4 628.4l-10.8 5.6M599.4 628.4l9 7.1M599.4 628.4l-3.1 7.9M599.4 628.4l12.7 -8.3M599.4 628.4l3.1 9.5M612.9 610.1l-15.1 -5.3M612.9 610.1l9.5 -6.4M612.9 610.1l-0.8 10M679.4 562.9l-7.8 11.4M681.7 631l1.7 6.3M681.7 631l-9 -7.1M681.7 631l1.1 -10.1M681.7 631l7.4 5.6M681.7 631l-8.8 0.7M560.8 510.6l-6.5 -11.7M560.8 510.6l10.1 8.4M659.2 649.2l6.7 -5.3M659.2 649.2l5.9 2.4M659.2 649.2l-4.2 -1.4M659.2 649.2l-1.4 3.5M659.2 649.2l1.7 -7.4M659.2 649.2l-3.3 -6.4M627.6 650.1l6.4 1.3M627.6 650.1l0.9 5.1M627.6 650.1l-4.5 -2.5M627.6 650.1l4.5 5.3M627.6 650.1l2.9 -5.2M650.1 619.1l-8.6 4.3M650.1 619.1l3.2 -10.4M650.1 619.1l6.4 10.5M650.1 619.1l-0.4 8.5M658.1 637.5l-6.4 -3.1M658.1 637.5l5.8 -8.1M658.1 637.5l9.4 -2.2M658.1 637.5l-1.6 -7.9M658.1 637.5l2.8 4.3M658.1 637.5l-2.2 5.2M542.4 654.1l11.4 -5.9M620.3 518.6l17.1 1.1M620.3 518.6l-5.2 13.4M664 676.4l2.6 1M664 676.4l2.7 -1.4M664 676.4l-2 0.7M664 676.4l-2.4 -1.5M664 676.4l0.2 -2.3M682.1 656.9l-3.9 1.1M682.1 656.9l-2.4 -4.9M682.1 656.9l4.4 -2.8M682.1 656.9l0.5 2.9M679.9 511.8l14.8 0.1M679.9 511.8l-6.1 -20.4M679.9 511.8l-19.8 7.3M620.8 564.4l-17.6 -2.4M620.8 564.4l-3.2 17.9M620.8 564.4l12.9 5.2M678.2 658.1l-4.3 -0.2M678.2 658.1l-2.7 -4.1M678.2 658.1l1.5 -6M678.2 658.1l0.1 3M678.2 658.1l-3 3.2M678.2 658.1l4.4 1.8M554.3 498.9l3.1 -13.6M554.3 498.9l-18.5 8.9M652.4 678.4l-2.2 -1.2M652.4 678.4l0.9 -2.1M598.9 576.7l-24.5 -1.1M598.9 576.7l4.3 -14.7M598.9 576.7l18.7 5.6M598.9 576.7l0.9 12.9M598.9 576.7l-19.3 11.9M683.4 637.3l-2.5 6.1M683.4 637.3l2.6 5.3M683.4 637.3l5.7 -0.7M683.4 637.3l-10.4 -5.7M548.2 594l12.4 19.7M548.2 594l-5.5 -12.7M548.2 594l-4.7 16.9M560.6 613.6l-17.1 -2.8M560.6 613.6l16.2 -12M588.6 634l-7.9 1.7M588.6 634l7.7 2.3M588.6 634l3.2 7.7M617.5 670.2l1.9 2.3M617.5 670.2l-0.8 3.8M617.5 670.2l-2.1 1.8M617.5 670.2l-1.8 -2.2M617.5 670.2l3 0.3M617.5 670.2l1.3 -2.4M570.1 457.1l-5.9 -12.3M572.1 656.6l2.5 7.4M572.1 656.6l-2.9 -7.5M572.1 656.6l6.3 2.7M541 567.8l1.7 13.4M586.3 512.7l12.2 -13.4M586.3 512.7l-15.5 6.3M658.4 667.6l-2.4 -2.1M658.4 667.6l-0.2 -2.3M658.4 667.6l-2.5 2.1M658.4 667.6l-3.7 -0M658.4 667.6l2.3 -0.8M658.4 667.6l0.7 2.4M619.4 672.5l-2.7 1.5M619.4 672.5l1.1 -2M619.4 672.5l0.6 2.3M619.4 672.5l2.6 -0.2M574.4 575.6l-2.5 -15.2M574.4 575.6l5.2 12.9M635.4 676.1l0.3 -3.7M635.4 676.1l2.5 1.9M635.4 676.1l-3.6 0.6M635.4 676.1l-1.8 -2.5M635.4 676.1l2.9 -1.4M635.4 676.1l-0.7 2.1M636.5 635.8l-4.8 -8.5M636.5 635.8l5.9 -5.8M636.5 635.8l3.5 7.4M644.6 662.1l-3.7 -3.4M644.6 662.1l-3 0.5M644.6 662.1l-2.7 2.8M644.6 662.1l0.7 -3M644.6 662.1l1 2.9M644.6 662.1l2.5 1M645.4 562.3l-11.7 7.3M631.7 627.3l9.8 -3.8M631.7 627.3l-8.8 3.2M631.7 627.3l10.7 2.7M631.7 627.3l2.2 -8.3M665.9 643.9l-0.8 7.7M665.9 643.9l1.6 -8.5M665.9 643.9l3.9 3.3M665.9 643.9l-5 -2.1M668.9 676.6l-2.3 0.8M668.9 676.6l2.1 1.1M668.9 676.6l-2.1 -1.6M668.9 676.6l2.6 -1.7M668.9 676.6l1.1 -3.8M673.9 657.8l1.6 -3.9M673.9 657.8l-4.9 -4M673.9 657.8l-3.5 1.3M673.9 657.8l1.2 3.4M675.9 664.8l-0.7 2.3M675.9 664.8l2.4 -3.7M675.9 664.8l-2.6 -1.3M675.9 664.8l-0.7 -3.5M675.9 664.8l3 -0.5M675.9 664.8l2.8 2.5M641.5 623.5l0.9 6.6M641.5 623.5l8.2 4.2M641.5 623.5l-7.6 -4.5M567.7 639.8l-10.7 -1.2M567.7 639.8l8.1 2.6M567.7 639.8l1.5 9.2M567.7 639.8l5.2 -8.6M690 655.8l5.9 3.2M690 655.8l0.4 3.2M690 655.8l5.8 -1.9M690 655.8l-3.5 -1.6M690 655.8l1.9 -3.4M584.3 646.9l-3.5 -11.2M584.3 646.9l-8.5 -4.4M584.3 646.9l7.5 -5.2M584.3 646.9l-1.5 7.6M578.9 418.3l12.9 -5M578.9 418.3l4.8 12.3M651.7 634.5l-2.4 6.6M651.7 634.5l-9.4 -4.5M651.7 634.5l4.8 -4.9M651.7 634.5l4.2 8.3M651.7 634.5l-2 -6.8M663.2 471.3l10.6 20.1M663.2 471.3l12 -7.4M666.3 657l-1.2 -5.5M666.3 657l2.7 -3.2M666.3 657l4.1 2.1M666.3 657l-1.9 2.7M610.7 438.4l-13 -7.7M610.7 438.4l7.7 -16.7M610.7 438.4l-7.9 17.3M610.7 438.4l12.5 2.5M604.9 468.7l-8.1 10.4M604.9 468.7l-2.1 -13.1M644.3 499.4l13.5 0.9M695.1 476l5.5 12.8M679.6 674.2l-0.6 2.1M679.6 674.2l1.3 -2.3M679.6 674.2l-2.9 1.5M679.6 674.2l-2.4 -2.6M679.6 674.2l3.8 0.5M679.6 674.2l1.6 1.6M679.6 674.2l-3.3 -0.7M608.3 652.8l4 -2.5M608.3 652.8l3 6.5M608.3 652.8l7 3.8M608.3 652.8l-0.2 -7M608.3 652.8l-1.4 4.5M623.6 658.8l4.9 -3.7M623.6 658.8l-0.3 4.2M623.6 658.8l3.5 -0.1M623.6 658.8l-5.7 0.8M623.6 658.8l-2.9 4.1M623.6 658.8l-2.9 -2.1M623.6 658.8l2.8 3.5M614.5 663.3l-3.2 -4M614.5 663.3l-2.3 2.4M614.5 663.3l3.8 0.5M614.5 663.3l3.4 -3.7M614.5 663.3l0.2 -3.5M614.5 663.3l1.4 2.3M614.5 663.3l-4.1 -0.5M557.1 668.8l6 5.1M557.1 668.8l-10.2 3.2M557.1 668.8l10.9 -0.9M640.9 658.6l4.6 -2.5M640.9 658.6l-3 3M640.9 658.6l0.7 3.9M640.9 658.6l-0.2 -5M640.9 658.6l4.4 0.5M624.9 642.3l-3.9 -5.5M624.9 642.3l-1.9 5.3M624.9 642.3l5.5 2.6M624.9 642.3l-8.4 -2M649.3 641.1l-2.7 5.5M649.3 641.1l5.8 6.6M649.3 641.1l-9.3 2M649.3 641.1l6.7 1.7M600.7 671.3l-5 0.2M600.7 671.3l2.5 2.2M600.7 671.3l0.2 -4M600.7 671.3l5 -0.7M694.1 647.6l7 -4.8M694.1 647.6l-5.1 -1M694.1 647.6l1.6 6.2M694.1 647.6l-2.3 4.7M694.1 647.6l4.1 1.7M563.2 673.8l4.9 -6M685.1 665.2l1.6 -3.7M685.1 665.2l-2.5 -2.2M685.1 665.2l-2.5 1.5M685.1 665.2l1 2.5M685.1 665.2l2.7 -0.1M612.3 650.3l2.1 -4.6M612.3 650.3l6.5 0.3M612.3 650.3l3 6.3M612.3 650.3l-4.2 -4.5M603.2 561.9l14.4 20.4M622.8 630.5l-1.8 6.2M608.4 635.5l-0.2 10.3M608.4 635.5l-5.9 2.4M608.4 635.5l8.1 4.7M635.6 672.4l-3.7 -1.4M635.6 672.4l1.4 -3.8M635.6 672.4l-2.1 1.2M635.6 672.4l2.6 2.3M635.6 672.4l-1 -4.3M635.6 672.4l2.9 -1M679 676.3l-2.3 -0.6M679 676.3l3.4 1.9M679 676.3l2.2 -0.5M679 676.3l-2.7 1.8M646.6 646.6l-2.9 3.8M646.6 646.6l8.4 1.1M646.6 646.6l-6.6 -3.5M646.6 646.6l2.4 3.4M634 651.4l3.1 -2.9M634 651.4l-1.9 4M634 651.4l-3.6 -6.5M634 651.4l6.6 2.2M647.9 667.3l1.2 -1.9M647.9 667.3l-2.3 2.4M647.9 667.3l2.3 -0.1M647.9 667.3l1.7 1.9M647.9 667.3l-3 -0.2M647.9 667.3l-2.3 -2.4M647.9 667.3l-0.1 3.8M611.3 659.3l-4.1 2.1M611.3 659.3l4 -2.7M611.3 659.3l3.4 0.5M611.3 659.3l-0.9 3.5M611.3 659.3l-4.4 -2M653.1 653.1l-2.3 4.3M653.1 653.1l1.9 -5.3M653.1 653.1l4.7 -0.4M653.1 653.1l-4.6 1.2M653.1 653.1l-4.1 -3M653.1 653.1l5.4 3.7M653.3 608.7l-7.3 -8.7M675.5 654l-6.5 -0.1M675.5 654l4.2 -1.9M675.5 654l1.7 -5.8M614.4 645.7l4.4 4.9M614.4 645.7l8.7 1.9M614.4 645.7l-6.2 0.1M614.4 645.7l2.1 -5.4M645.5 656.1l5.3 1.3M645.5 656.1l-1.8 -5.6M645.5 656.1l3 -1.8M645.5 656.1l-4.9 -2.5M645.5 656.1l-0.2 3M686.2 670.5l1.9 3.2M686.2 670.5l-1 2.7M686.2 670.5l-2.8 -0.5M686.2 670.5l2.5 -3M686.2 670.5l-0.1 -2.8M686.2 670.5l3.2 1M680.9 671.8l-3.7 -0.3M680.9 671.8l4.3 1.4M680.9 671.8l2.5 -1.9M680.9 671.8l-3.1 -2.6M680.9 671.8l-0.3 -3.4M680.9 671.8l2.5 2.8M574.6 664l6.4 7.7M574.6 664l7.1 2.1M574.6 664l3.8 -4.7M574.6 664l-6.6 3.9M595.7 671.6l0.2 -7.3M595.7 671.6l5.1 -4.2M595.7 671.6l-3.6 3.3M595.7 671.6l-3.7 -2.3M637.9 661.6l3.8 0.9M637.9 661.6l-0.1 3.3M695.8 676.2l-0.5 -3.6M695.8 676.2l3.2 1.9M695.8 676.2l-2.1 -1.5M695.8 676.2l-1.3 1.7M695.8 676.2l2.4 -1M617.6 582.3l4.8 21.4M617.6 582.3l-17.7 7.2M617.6 582.3l16.1 -12.7M676.8 675.7l-2.2 -0.9M676.8 675.7l-0.5 2.4M676.8 675.7l-0.5 -2.2M581 671.6l4.6 3.9M581 671.6l0.7 -5.5M581 671.6l7.5 0.3M618.8 650.6l-3.5 6M618.8 650.6l4.3 -3.1M618.8 650.6l1.9 6.1M628.5 655.1l-1.4 3.5M628.5 655.1l3.6 0.2M628.5 655.1l4.5 3.7M695.9 629.7l-2.9 -9.3M695.9 629.7l-6.8 6.8M695.9 629.7l0.2 6.8M651.7 670.9l2.3 1.6M651.7 670.9l1.6 -1.6M651.7 670.9l-2.2 -1.7M651.7 670.9l-3.9 0.2M651.7 670.9l-0.4 2.4M672.7 623.8l-8.7 5.7M672.7 623.8l10.2 -3M672.7 623.8l0.3 7.8M597.7 430.6l20.7 -9M597.7 430.6l-5.9 -17.4M597.7 430.6l-14 -0M669.3 426l-6.2 14.2M603.2 673.5l2.8 1.9M603.2 673.5l-3 3.9M603.2 673.5l-0 3.8M603.2 673.5l2.5 -2.8M689 595.3l2.7 16.5M689 595.3l-6.4 15.4M556.9 638.7l-3.1 9.5M624.8 667.5l2.3 -0.4M624.8 667.5l-0.3 -2.3M624.8 667.5l-3.2 1M624.8 667.5l-1.7 3M624.8 667.5l1.6 1.7M690.4 669.1l1.5 2.9M690.4 669.1l0.9 -2.5M690.4 669.1l-1.7 -1.6M690.4 669.1l2.2 -0.8M690.4 669.1l-1 2.4M701.1 676.9l-0.7 -2M701.1 676.9l-2.1 1.3M701.1 676.9l0.9 -3.6M701.1 676.9l-2.9 -1.7M625.7 674.2l-0.1 2.2M625.7 674.2l-1.2 -2M625.7 674.2l2.2 -1.2M625.7 674.2l2.9 3.1M625.7 674.2l-2.4 0M585.6 675.6l6.5 -0.7M585.6 675.6l2.9 -3.6M673.8 491.4l-16 8.8M621 636.7l-4.5 3.5M630 665.8l2.3 -1.2M630 665.8l-1.9 -1.1M630 665.8l-2.9 1.3M630 665.8l1.3 -4.4M630 665.8l2.2 2M630 665.8l0.1 2.6M665.1 651.6l3.9 2.3M665.1 651.6l-7.3 1.1M665.1 651.6l4.7 -4.4M649.7 661.4l1.1 -4M649.7 661.4l0.8 2.4M649.7 661.4l-4.4 -2.3M649.7 661.4l4.2 1.5M649.7 661.4l-2.6 1.7M647.1 528.8l-9.7 -9.1M647.1 528.8l13 -9.6M666.6 677.3l0.2 -2.3M664 629.5l3.6 5.9M664 629.5l-7.4 0.1M664 629.5l9 2.1M680.5 665.7l2.1 -2.7M680.5 665.7l0.1 2.7M680.5 665.7l2 1M680.5 665.7l-1.6 -1.5M680.5 665.7l-1.8 1.5M691.8 611.8l1.3 8.7M691.8 611.8l-8.9 9.1M691.8 611.8l-9.1 -1M667.5 635.4l-6.6 6.4M667.5 635.4l5.4 -3.8M661.9 669l1 3.1M661.9 669l3.2 -1.1M661.9 669l3.8 2.2M661.9 669l-1.2 -2.3M661.9 669l-2.7 0.9M661.9 669l0.9 -1.9M650.8 657.4l-2.2 -3.1M650.8 657.4l-5.5 1.7M650.8 657.4l3.1 5.5M597.8 604.7l2.1 -15.2M656.4 661.4l3.1 2.3M656.4 661.4l-0.4 4.1M656.4 661.4l1.8 3.9M656.4 661.4l4.4 -1.9M656.4 661.4l-2.5 1.5M656.4 661.4l2.2 -4.6M618.4 421.7l4.8 19.2M695.9 658.9l3.4 -2.3M695.9 658.9l-5.5 -0M695.9 658.9l-0.1 -5.1M695.9 658.9l2.2 3.6M695.9 658.9l-0.6 2.8M634.7 435.8l-11.6 5.1M692.4 678.4l-1.2 -2.7M692.4 678.4l1.4 -3.7M692.4 678.4l2.2 -0.5M692.4 678.4l-2.7 -0M595.9 664.3l-5.3 0.9M595.9 664.3l4.9 3.1M595.9 664.3l2.5 -4.4M595.9 664.3l7.3 -0.2M595.9 664.3l-7 -6.5M595.9 664.3l-3.9 5M606 675.5l-2.8 1.8M606 675.5l2.4 -1.4M606 675.5l0.3 2.7M606 675.5l3.8 1.9M606 675.5l-0.3 -4.8M631.9 671.1l-1 1.9M631.9 671.1l1.6 2.6M631.9 671.1l-3.2 -0.8M631.9 671.1l2.7 -3M631.9 671.1l0.2 -3.3M631.9 671.1l-1.9 -2.7M637.9 678.1l2.1 -0.4M637.9 678.1l0.3 -3.4M637.9 678.1l-3.3 0.1M642.7 667.7l-0.8 2.2M642.7 667.7l-0.9 -2.8M642.7 667.7l2.9 2M642.7 667.7l-2.6 0.2M642.7 667.7l2.1 -0.6M650.5 663.8l1.8 3M650.5 663.8l-1.5 1.6M650.5 663.8l-0.3 3.3M650.5 663.8l3.3 -0.9M650.5 663.8l-3.4 -0.8M669 653.9l0.8 -6.7M669 653.9l1.4 5.3M671 677.6l0.5 -2.8M671 677.6l2.5 0.1M674.6 674.7l-3.1 0.1M674.6 674.7l-1.8 -2.1M674.6 674.7l-1.2 3M674.6 674.7l1.7 3.4M674.6 674.7l1.7 -1.2M535.7 507.8l-5.2 -22.8M632.3 664.6l3 1.1M632.3 664.6l-1.1 -3.2M632.3 664.6l-0.2 3.2M590.6 665.2l-8.9 0.9M590.6 665.2l-2.1 6.7M590.6 665.2l-1.7 -7.5M590.6 665.2l1.4 4M680.9 643.4l5.1 -0.9M680.9 643.4l-3.6 4.8M647.2 677.5l2.9 -0.2M647.2 677.5l-3.2 -1.4M647.2 677.5l-0.7 -2.7M647.2 677.5l1.8 -2.5M647.2 677.5l-2.3 1M675.2 667.1l2.6 2.2M675.2 667.1l-2.3 3.1M675.2 667.1l-2 -3.6M675.2 667.1l-0.1 2.8M675.2 667.1l-3 0.1M675.2 667.1l-3.4 -1.9M675.2 667.1l3.5 0.2M659.5 663.6l3.1 -1.5M659.5 663.6l2.9 1.3M659.5 663.6l-1.3 1.6M659.5 663.6l1.3 -4.2M659.5 663.6l1.2 3.1M628 664.7l-0.9 2.4M628 664.7l-3.5 0.6M628 664.7l3.2 -3.3M628 664.7l-1.7 -2.4M612.2 665.8l0.9 2.6M612.2 665.8l3.4 2.3M612.2 665.8l-2.6 3.3M612.2 665.8l-2.9 0.1M612.2 665.8l3.8 -0.2M612.2 665.8l-1.8 -2.9M682.4 678.2l1 -3.6M682.4 678.2l2.6 -1.4M682.4 678.2l-1.2 -2.4M689.8 664.3l2.9 -1.4M689.8 664.3l1.5 2.3M689.8 664.3l-1.1 3.2M689.8 664.3l3.5 1.2M689.8 664.3l-2 0.8M689.8 664.3l-0.3 -2.7M670.1 666.4l0.4 3.6M670.1 666.4l-2.3 1.4M670.1 666.4l0.9 -4.1M670.1 666.4l-2.5 -2M670.1 666.4l2.1 0.9M670.1 666.4l1.7 -1.2M679.7 652.1l6.8 2.1M679.7 652.1l-2.4 -3.9M598.6 499.4l-1.8 -20.3M696.9 667.8l2.4 -2.2M696.9 667.8l2.2 1.8M696.9 667.8l-0 3M696.9 667.8l1.2 -5.2M696.9 667.8l-2.5 2.4M696.9 667.8l-2.3 -0.4M688.1 673.7l-2.9 -0.5M688.1 673.7l3.8 -1.7M688.1 673.7l0.3 2.6M688.1 673.7l3.2 2.1M688.1 673.7l-3.1 3.1M688.1 673.7l1.4 -2.2M643.7 650.5l-3.8 -7.3M643.7 650.5l4.8 3.9M643.7 650.5l-6.6 -2M643.7 650.5l-3.1 3.1M643.7 650.5l5.3 -0.4M645.3 671.8l1.3 3M645.3 671.8l-3.3 -1.9M645.3 671.8l0.3 -2.1M645.3 671.8l2.5 -0.7M645.3 671.8l-1.9 1.4M620.3 665.8l3 -2.7M620.3 665.8l-2 -1.9M620.3 665.8l0.4 -2.9M620.3 665.8l4.2 -0.5M620.3 665.8l1.3 2.7M620.3 665.8l-1.5 2M580.8 635.7l-5 6.8M580.8 635.7l11 6M580.8 635.7l-7.9 -4.4M670.5 670l-2.7 -2.2M670.5 670l-1.9 1M670.5 670l2.4 0.1M670.5 670l-0.6 2.8M670.5 670l2.3 2.6M670.5 670l1.7 -2.8M655.9 665.5l-3.6 1.4M655.9 665.5l2.2 -0.2M655.9 665.5l-2.1 -2.5M655.9 665.5l-1.3 2.1M540.3 537.5l14.2 1.7M591.8 413.3l-8.1 17.3M662.6 662.2l-0.2 2.7M662.6 662.2l-1.9 -2.7M662.6 662.2l2.5 2.4M662.6 662.2l1.8 -2.4M596.3 636.3l6.2 1.6M596.3 636.3l-4.6 5.4M623.3 663l-2.6 -0.2M623.3 663l1.2 2.2M623.3 663l3.1 -0.8M677.2 671.6l0.6 -2.3M677.2 671.6l-2.1 -1.6M677.2 671.6l-0.9 1.9M655 647.7l2.8 4.9M655 647.7l0.9 -5M655 647.7l-6 2.3M686.6 661.5l3.7 -2.6M686.6 661.5l-4 1.5M686.6 661.5l1.2 3.6M686.6 661.5l2.9 0.1M686.6 661.5l-4 -1.7M607.2 661.4l-4 2.7M607.2 661.4l-4.1 -2.4M607.2 661.4l2.1 4.5M607.2 661.4l3.2 1.4M607.2 661.4l-0.3 -4.1M654.1 672.5l1.8 -2.8M654.1 672.5l-0.7 -3.2M654.1 672.5l2.6 -0.5M654.1 672.5l-2.8 0.8M654.1 672.5l0.8 2.3M625.6 676.4l-1.5 1.4M625.6 676.4l3 0.9M625.6 676.4l-2.3 -2.2M564.2 444.8l-8.4 -11.1M575.8 642.5l-6.6 6.6M575.8 642.5l-2.9 -11.3M616.7 674l2.3 3.5M616.7 674l-1.3 -2M616.7 674l0.2 3.4M616.7 674l-2 1.5M616.7 674l3.3 0.8M624.5 672.2l3.4 0.8M624.5 672.2l-1.4 -1.7M624.5 672.2l-1.2 2M624.5 672.2l1.9 -3M624.5 672.2l-2.5 0.1M630.9 673l0.9 3.7M630.9 673l-3 0M630.9 673l2.6 0.7M630.9 673l-2.2 -2.7M630.9 673l-2.4 4.4M600.2 677.4l2.9 -0.1M640 677.6l4 -1.6M640 677.6l0.3 -2.3M640 677.6l-1.8 -2.9M576.9 601.7l2.8 -13.1M576.9 601.7l4.6 15.2M627.1 658.7l4.1 2.7M627.1 658.7l5.8 0.2M627.1 658.7l-0.8 3.6M615.3 656.6l2.6 2.9M615.3 656.6l-0.5 3.2M615.3 656.6l5.4 0.1M701.9 670.8l-2.8 -1.2M701.9 670.8l-3.3 2.3M701.9 670.8l0.1 2.6M662.9 672.1l2.8 -0.9M662.9 672.1l-3.2 0.7M662.9 672.1l-1.3 2.7M662.9 672.1l1.3 2M662.9 672.1l-3.8 -2.2M641.6 662.5l0.3 2.4M641.6 662.5l-3.9 2.4M600.8 667.4l2.4 -3.3M600.8 667.4l4.9 3.3M699.3 656.6l-3.5 -2.8M699.3 656.6l-1.3 5.9M699.3 656.6l2.9 2.3M701.2 642.8l-5 -6.3M701.2 642.8l-3 6.5M598.4 659.9l4.8 4.2M598.4 659.9l-9.5 -2.1M598.4 659.9l4.6 -0.9M610.6 672.3l1.1 2.9M610.6 672.3l-2.2 1.8M610.6 672.3l-1 -3.2M610.6 672.3l-4.9 -1.6M610.6 672.3l2.9 -1.7M610.6 672.3l2.6 0.5M603.1 677.3l3.2 0.9M665.1 667.9l2.7 -0.1M665.1 667.9l0.6 3.4M665.1 667.9l0 -3.3M665.1 667.9l-2.3 -0.7M642.4 630l7.3 -2.4M640 643.2l-2.8 5.3M693 620.4l-10.2 0.4M652.4 666.9l1 2.4M652.4 666.9l-2.2 0.3M652.4 666.9l1.5 -3.9M652.4 666.9l2.3 0.7M685.2 673.2l-1.8 -3.2M685.2 673.2l-1.8 1.4M685.2 673.2l-0.2 3.6M692.7 663l-2.3 -4M692.7 663l0.6 2.5M692.7 663l2.6 -1.2M692.7 663l-3.1 -1.3M695.4 672.6l-3.4 -0.6M695.4 672.6l1.5 -1.9M695.4 672.6l3.3 0.5M695.4 672.6l-1.6 2.1M695.4 672.6l-1 -2.4M695.4 672.6l2.9 2.6M699.3 665.5l-0.2 4M699.3 665.5l2.5 -3.1M699.3 665.5l-1.2 -3M619 677.5l2.5 0.2M619 677.5l-2.1 -0.1M619 677.5l1.1 -2.7M656.5 629.6l-6.9 -1.9M667.8 667.8l0.8 3.3M667.8 667.8l-2.2 3.5M667.8 667.8l-0.2 -3.4M667.8 667.8l-2.7 -3.2M682.9 620.9l-0.2 -10.1M631.8 676.7l1.7 -3.1M631.8 676.7l2.8 1.5M631.8 676.7l-3.2 0.6M637 668.7l-1.7 -3M637 668.7l-2.4 -0.6M637 668.7l0.7 -3.7M637 668.7l1.5 2.8M637 668.7l3.1 -0.8M611.7 675.2l-3.3 -1.1M611.7 675.2l0.6 3.1M611.7 675.2l-1.9 2.2M611.7 675.2l3 0.3M611.7 675.2l1.5 -2.4M668.6 671l-1.9 4M668.6 671l-3 0.2M668.6 671l1.3 1.7M618.3 663.9l-0.4 -4.3M618.3 663.9l2.3 -1M618.3 663.9l-2.4 1.7M618.3 663.9l0.4 3.9M700.4 674.9l-1.7 -1.8M700.4 674.9l1.7 -1.5M700.4 674.9l-2.1 0.3M615.4 672l0.2 -4M615.4 672l-0.7 3.5M615.4 672l-1.9 -1.4M615.4 672l-2.2 0.8M683.4 670l-2.8 -1.5M683.4 670l-0.9 -3.2M683.4 670l2.7 -2.3M699.1 669.6l-2.3 1.2M699.1 669.6l-0.4 3.5M666.8 675l-1.1 -3.8M666.8 675l3.2 -2.2M666.8 675l-2.6 -0.9M689.1 646.6l-3.1 -4M689.1 646.6l2.8 5.7M635.3 665.7l-0.7 2.4M635.3 665.7l2.4 -0.8M635.3 665.7l-3.2 2.1M608.4 674.1l1.4 3.3M608.4 674.1l-2.7 -3.4M650.1 677.2l3.1 -0.9M650.1 677.2l-1.1 -2.3M650.1 677.2l1.2 -3.9M644 676.1l2.5 -1.4M644 676.1l-3.7 -0.7M644 676.1l0.9 2.4M644 676.1l-0.7 -2.9M662 677.1l-2.2 -0.3M662 677.1l-0.4 -2.3M657.8 652.7l0.7 4.1M662.4 664.9l2.7 -0.4M662.4 664.9l-1.7 1.8M662.4 664.9l0.4 2.3M648.5 654.3l0.5 -4.3M690.4 658.9l4.9 2.8M690.4 658.9l-0.8 2.7M627.9 673l0.8 -2.7M627.9 673l0.6 4.3M627.9 673l-1.5 -3.7M646.6 674.7l2.5 0.2M646.6 674.7l1.2 -3.6M646.6 674.7l-3.2 -1.6M642 669.9l3.6 -0.2M642 669.9l-0.8 2.2M642 669.9l-3.5 1.6M642 669.9l-1.8 -2M642 669.9l1.4 3.2M623.1 647.5l7.4 -2.6M623.1 647.5l-6.6 -7.3M665.6 671.2l-1.4 2.9M677.8 669.3l2.8 -0.8M677.8 669.3l-2.7 0.7M677.8 669.3l0.9 -2M691.9 672l-0.7 3.7M691.9 672l0.7 -3.8M691.9 672l-2.5 -0.5M691.9 672l1.9 2.6M691.9 672l2.5 -1.8M695.8 653.8l-3.9 -1.5M695.8 653.8l2.4 -4.5M599.9 589.5l-20.2 -1M672.9 670.1l-0.1 2.5M672.9 670.1l2.2 -0.2M672.9 670.1l-0.7 -2.9M581.7 666.1l6.8 5.9M581.7 666.1l-3.3 -6.8M613.1 668.4l2.6 -0.4M613.1 668.4l-3.5 0.7M613.1 668.4l0.5 2.2M686 642.6l3.2 -6M617.9 659.6l2.8 3.3M617.9 659.6l-3.2 0.3M617.9 659.6l2.8 -2.9M627.1 667.1l1.7 3.2M627.1 667.1l-2.6 -1.8M627.1 667.1l3 1.3M627.1 667.1l-0.6 2.2M691.3 666.6l-2.6 0.9M691.3 666.6l1.3 1.7M691.3 666.6l2 -1.1M649 665.4l1.1 1.7M649 665.4l-3.4 -0.5M649 665.4l-1.9 -2.3M669.8 647.2l7.5 1M682.6 663l-0.1 3.7M682.6 663l-4.3 -2M682.6 663l-3.7 1.2M682.6 663l0 -3.2M640.3 675.4l-2.1 -0.7M640.3 675.4l0.9 -3.3M640.3 675.4l3.1 -2.2M641.9 664.9l-4.1 0M641.9 664.9l-1.7 3M641.9 664.9l2.9 2.2M641.9 664.9l3.7 0M660.9 641.8l-5 1M624 677.8l-2.6 -0.2M624 677.8l-0.7 -3.6M608.2 645.8l-5.6 -7.9M608.2 645.8l8.4 -5.5M680.6 668.5l1.9 -1.7M680.6 668.5l-1.9 -1.2M638.2 674.7l2.9 -2.6M638.2 674.7l0.3 -3.2M670.4 659.2l4.7 2M670.4 659.2l0.6 3.1M659.7 672.8l0.1 4M659.7 672.8l-2.6 3.2M659.7 672.8l1.9 2.1M659.7 672.8l-3 -0.8M659.7 672.8l-0.6 -2.8M658.2 665.2l2.5 1.5M592.1 674.9l-3.6 -2.9M592.1 674.9l-0 -5.6M615.6 668l-2.1 2.6M615.6 668l0.3 -2.4M615.6 668l3.1 -0.3M701.8 662.5l-3.7 0M701.8 662.5l0.4 -3.5M653.2 676.3l3.8 -0.3M653.2 676.3l-1.9 -3M653.2 676.3l4.4 1.8M653.2 676.3l1.6 -1.5M645.6 669.7l-0.8 -2.6M645.6 669.7l2.2 1.4M637.2 648.5l-6.7 -3.6M637.2 648.5l3.5 5.1M659.7 676.8l-2.7 -0.8M659.7 676.8l1.9 -2M659.7 676.8l-2.1 1.3M641.1 672.1l-2.6 -0.6M641.1 672.1l2.2 1.1M655.9 669.7l-2.5 -0.4M655.9 669.7l-1.2 -2.1M655.9 669.7l0.8 2.3M655.9 669.7l3.2 0.2M588.5 672l3.5 -2.7M688.7 667.5l-2.6 0.2M688.7 667.5l0.7 4M688.7 667.5l-0.9 -2.4M621.5 677.7l1.8 -3.5M621.5 677.7l-1.4 -2.9M682.5 666.8l3.6 0.9M632.1 655.4l0.8 3.5M616.9 677.4l-4.6 0.9M616.9 677.4l-2.2 -1.9M628.8 670.3l1.3 -2M628.8 670.3l-2.3 -1.1M634.6 668.1l-2.5 -0.3M678.3 661.1l-3.1 0.1M678.3 661.1l0.7 3.2M678.3 661.1l4.3 -1.3M688.4 676.3l2.9 -0.6M688.4 676.3l-3.4 0.5M688.4 676.3l1.4 2.1M673.3 663.5l1.9 -2.3M673.3 663.5l-2.3 -1.2M673.3 663.5l-1.4 1.7M612.3 678.3l-2.5 -0.9M612.3 678.3l2.4 -2.8M609.6 669.1l-3.9 1.6M609.6 669.1l-0.3 -3.2M609.6 669.1l4 1.6M637.7 664.9l2.4 3M696.8 670.7l1.8 2.4M696.8 670.7l-2.4 -0.5M689.1 636.5l7 0M624.5 665.3l-2.9 3.3M624.5 665.3l1.8 -3M671.5 674.8l-1.5 -2.1M671.5 674.8l1.3 -2.2M671.5 674.8l2 2.9M621.6 668.5l-1.2 2M621.6 668.5l1.6 2M621.6 668.5l-2.8 -0.7M620.4 670.5l2.7 0M620.4 670.5l-1.7 -2.7M620.4 670.5l1.5 1.8M699 678.1l-0.8 -2.9M691.2 675.8l2.6 -1.1M691.2 675.8l-1.5 2.7M603.3 664.1l-0.2 -5.1M653.3 669.3l-3.1 -2.2M653.3 669.3l-3.8 -0.1M653.3 669.3l1.3 -1.7M686.1 667.7l1.7 -2.5M692.6 668.3l0.7 -2.8M692.6 668.3l1.8 1.9M692.6 668.3l2 -0.9M698 662.5l-4.7 3M698 662.5l-2.8 -0.8M698 662.5l4.2 -3.6M698 662.5l-3.4 4.8M588.9 657.8l-6 -3.3M657.1 676l-0.4 -4M657.1 676l0.6 2.1M657.1 676l-2.2 -1.2M649 675l-1.2 -3.9M649 675l2.3 -1.7M670 672.8l2.8 -0.1M683.4 674.6l1.6 2.2M683.4 674.6l-2.1 1.2M638.5 671.5l1.6 -3.5M698.6 673.1l3.4 0.2M698.6 673.1l-0.4 2.1M661.6 674.8l2.6 -0.8M645.3 659.1l1.9 4M606.3 678.2l3.5 -0.8M660.8 659.4l3.6 0.3M660.8 659.4l-2.2 -2.7M693.3 665.5l1.9 -3.8M693.3 665.5l1.3 1.8M650.2 667.1l-0.6 2.1M631.2 661.3l1.7 -2.4M631.2 661.3l-4.9 1M672.8 672.6l2.4 -2.7M672.8 672.6l3.5 0.9M603.1 659l3.9 -1.7M614.7 675.5l-1.5 -2.7M649.6 669.2l-1.7 1.9M675.2 661.2l-4.2 1M582.8 654.5l-4.4 4.8M623.1 670.5l3.3 -1.3M623.1 670.5l-1.2 1.8M671 662.2l-3.4 2.2M671 662.2l0.8 2.9M623.3 674.2l-3.3 0.6M623.3 674.2l-1.3 -1.9M687.8 665.1l1.7 -3.5M620 674.8l1.9 -2.5M609.3 665.9l1.2 -3M644.8 667.1l0.8 -2.2M645.6 664.9l1.5 -1.9M656.7 672l2.4 -2M656.7 672l-1.8 2.8M667.6 664.4l-2.5 0.1M665.1 664.6l-2.3 2.6M632.1 667.8l-2.1 0.6M660.7 666.7l-1.6 3.2M660.7 666.7l2.1 0.4M673.4 677.8l2.8 0.3M647.8 671.1l3.5 2.2M693.8 674.7l0.8 3.2M613.5 670.6l-0.3 2.2M616 665.6l2.8 2.2M694.4 670.2l0.2 -2.9M678.9 664.3l-0.2 3M675.2 669.9l1.1 3.6M672.2 667.2l-0.4 -2M651.3 673.3l3.5 1.5" stroke="#000" stroke-width="1" fill="none" shape-rendering="crispEdges" clip-path="url(#bodyclip)"/>
<polygon points="518.5,98.5 712.5,98.5 712.5,494 702.5,533 702.5,680.5 527.5,680.5 527.5,533 518.5,492" fill="none" stroke="#000" stroke-width="1" shape-rendering="crispEdges"/>
<rect x="518" y="98" width="1.6" height="394" fill="#000" opacity="0.8"/>
<rect x="711" y="98" width="2" height="396" fill="#000" opacity="0.8"/>

<g>
<rect x="1377" y="657" width="6" height="60" fill="#008000"/>
<polygon points="1380,639 1371.5,659 1388.5,659" fill="#0a8a0a"/>
<defs><linearGradient id="redg" x1="0" x2="0" y1="0" y2="1"><stop offset="0" stop-color="#e80000"/><stop offset="1" stop-color="#7a0000"/></linearGradient>
<radialGradient id="cyg" cx="0.45" cy="0.35" r="0.7"><stop offset="0" stop-color="#19e6e6"/><stop offset="1" stop-color="#009aa2"/></radialGradient></defs>
<rect x="1386" y="719.7" width="59" height="6.3" fill="url(#redg)"/>
<polygon points="1444,714.5 1464.5,723 1444,731.5" fill="url(#redg)"/>
<circle cx="1380" cy="723" r="8.3" fill="#00008b"/>
<polygon points="1380,716 1387.5,715.5 1387,724 1381,723" fill="#0000d8"/>
<circle cx="1419.3" cy="683.4" r="8.6" fill="url(#cyg)"/>
</g>
</svg><span class="t" style="left:1379.5px;top:617.14px;font-size:12px;letter-spacing:-0.500px;color:#00a000;">Y</span><span class="t" style="left:1477px;top:714.84px;font-size:12px;letter-spacing:-0.500px;color:#ff0000;">X</span><span class="t" style="right:25px;top:22.30000000000001px;font-size:31px;font-weight:bold;color:#fff;-webkit-text-stroke:0.7px #fff;transform:scaleX(0.766);transform-origin:100% 50%;letter-spacing:-0.5px;">ANSYS</span><span class="t" style="right:25px;top:53.599999999999994px;font-size:16.8px;color:#fff;transform:scaleX(0.932);transform-origin:100% 50%;">2019 <b style="-webkit-text-stroke:0.4px #fff">R3</b></span></div>
<!-- sec_msgs -->
<div style="position:absolute;left:428px;top:938px;width:1489px;height:1px;background:#ccceDB;"></div>
<div style="position:absolute;left:428px;top:938px;width:1px;height:20px;background:#ccceDB;"></div>
<div style="position:absolute;left:428px;top:958px;width:1489px;height:112px;background:#a0a0a0;"></div>
<div style="position:absolute;left:428px;top:958px;width:1040px;height:45px;background:#fff;"></div>
<div style="position:absolute;left:428px;top:958px;width:1040px;height:14px;background:#f0f0f0;"></div>
<div style="position:absolute;left:428px;top:973px;width:49px;height:30px;background:#f0f0f0;"></div>
<svg style="position:absolute;left:0;top:0" width="1917" height="1088" viewBox="0 0 1917 1088"><defs><pattern id="hd3" width="4" height="4" patternUnits="userSpaceOnUse" x="1" y="1"><rect x="0" y="0" width="1" height="1" fill="#999aa6"/><rect x="2" y="2" width="1" height="1" fill="#999aa6"/></pattern></defs><rect x="489" y="945" width="1374" height="5" fill="url(#hd3)"/><polygon points="1867,946 1876,946 1871.5,950.6" fill="#1e1e1e"/><path d="M1885.5 942.5H1889.5M1885.5 942.5V949M1888.8 942.5V949M1883.5 949H1891.5M1887.5 949V953.5" stroke="#1e1e1e" stroke-width="1.1" fill="none"/><rect x="1888.3" y="942.5" width="1.4" height="6.5" fill="#1e1e1e"/><path d="M1899.7 943.7L1907.3 951.3M1907.3 943.7L1899.7 951.3" stroke="#1e1e1e" stroke-width="1.5" fill="none"/><rect x="429" y="972" width="1039" height="1" fill="#5a5a5a"/><rect x="429" y="987" width="48" height="1" fill="#5a5a5a"/><rect x="429" y="1002" width="48" height="1" fill="#5a5a5a"/><rect x="478" y="987" width="990" height="1" fill="#d8d8d8"/><rect x="478" y="1002" width="990" height="1" fill="#d8d8d8"/><rect x="477" y="958" width="1" height="45" fill="#5a5a5a"/><rect x="941" y="958" width="1" height="14" fill="#5a5a5a"/><rect x="941" y="973" width="1" height="30" fill="#d0d0d0"/><rect x="1247" y="958" width="1" height="14" fill="#5a5a5a"/><rect x="1247" y="973" width="1" height="30" fill="#d0d0d0"/><rect x="1467" y="958" width="1" height="14" fill="#5a5a5a"/><rect x="1467" y="973" width="1" height="30" fill="#d0d0d0"/></svg>
<span class="t" style="left:433px;top:942.23px;font-size:10.6px;letter-spacing:0.340px;color:#444;">Messages</span>
<span class="t" style="left:481px;top:960.73px;font-size:10.6px;letter-spacing:-0.105px;color:#000;">Text</span>
<span class="t" style="left:946px;top:960.73px;font-size:10.6px;letter-spacing:0.530px;color:#000;">Association</span>
<span class="t" style="left:1251px;top:960.73px;font-size:10.6px;letter-spacing:0.333px;color:#000;">Timestamp</span>
<div style="position:absolute;left:430px;top:973px;width:44.5px;height:14.5px;overflow:hidden;"><span class="t" style="left:0.8px;top:3.03px;font-size:10.6px;letter-spacing:1.420px;color:#000;">Warning</span></div>
<div style="position:absolute;left:481px;top:973px;width:459px;height:14.5px;overflow:hidden;"><span class="t" style="left:0.4px;top:3.03px;font-size:10.6px;letter-spacing:0.544px;word-spacing:-0.544px;color:#000;">One of the crack's mesh encompasses multiple bodies which have different material mode</span></div>
<div style="position:absolute;left:946px;top:973px;width:300px;height:14.5px;overflow:hidden;"><span class="t" style="left:0px;top:3.03px;font-size:10.6px;letter-spacing:0.535px;word-spacing:-0.535px;color:#000;">Project&gt;Model&gt;Static Structural</span></div>
<div style="position:absolute;left:1251px;top:973px;width:215px;height:14.5px;overflow:hidden;"><span class="t" style="left:0px;top:3.03px;font-size:10.6px;letter-spacing:0.291px;word-spacing:-0.291px;color:#000;">Friday, October 1, 2021 3:57:26 PM</span></div>
<div style="position:absolute;left:430px;top:988px;width:44.5px;height:14px;overflow:hidden;"><span class="t" style="left:0.8px;top:2.73px;font-size:10.6px;letter-spacing:1.420px;color:#000;">Warning</span></div>
<div style="position:absolute;left:481px;top:988px;width:459px;height:14px;overflow:hidden;"><span class="t" style="left:0.4px;top:2.73px;font-size:10.6px;letter-spacing:0.519px;word-spacing:-0.519px;color:#000;">One or more objects may have lost some scoping attachments during the geometry update</span></div>
<div style="position:absolute;left:946px;top:988px;width:300px;height:14px;overflow:hidden;"><span class="t" style="left:0px;top:2.73px;font-size:10.6px;letter-spacing:0.290px;color:#000;">Project</span></div>
<div style="position:absolute;left:1251px;top:988px;width:215px;height:14px;overflow:hidden;"><span class="t" style="left:0px;top:2.73px;font-size:10.6px;letter-spacing:0.291px;word-spacing:-0.291px;color:#000;">Friday, October 1, 2021 3:03:36 PM</span></div>
<div style="position:absolute;left:428px;top:1070px;width:1489px;height:18px;background:#eeeef2;"></div>
<div style="position:absolute;left:554px;top:1070px;width:62px;height:18px;background:#f5f5f8;border-left:1px solid #ccceDB;border-right:1px solid #ccceDB;box-sizing:border-box;"></div>
<span class="t" style="left:434px;top:1072.84px;font-size:12px;letter-spacing:-0.055px;word-spacing:0.055px;color:#444;">Graphics Annotations</span>
<span class="t" style="left:561px;top:1072.84px;font-size:12px;letter-spacing:-0.586px;color:#1c7cd4;">Messages</span>
</body></html>
